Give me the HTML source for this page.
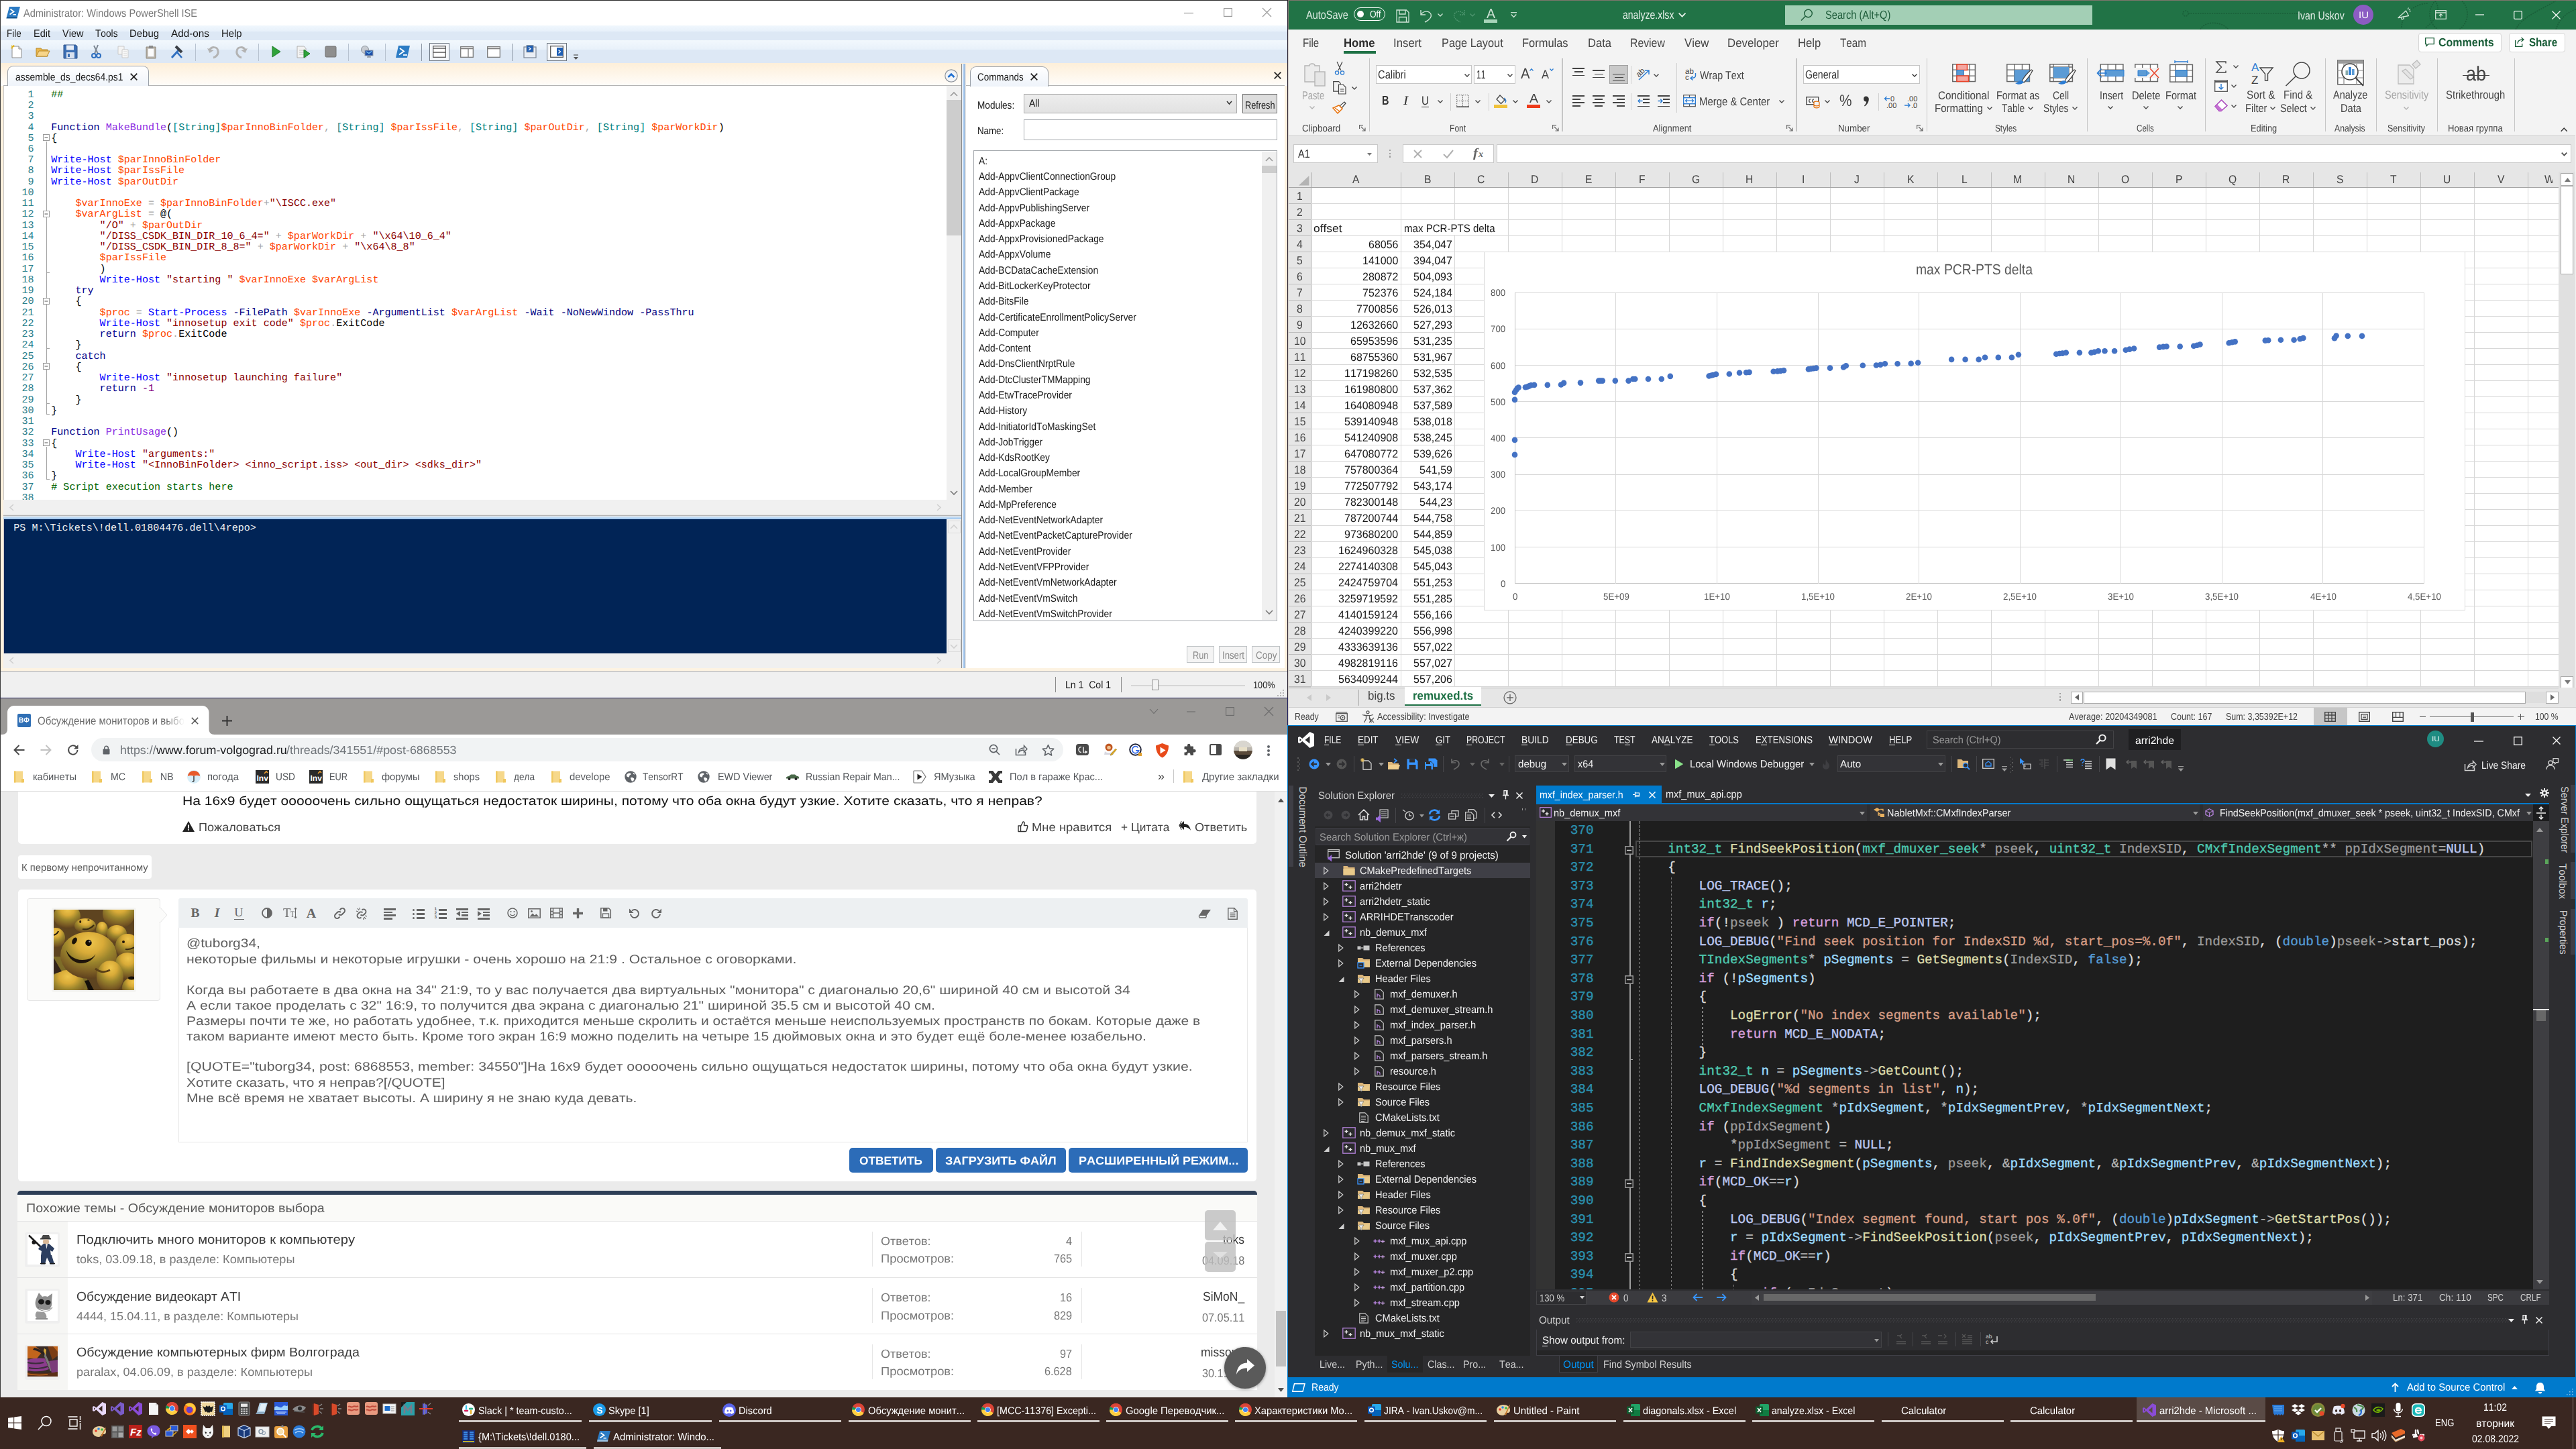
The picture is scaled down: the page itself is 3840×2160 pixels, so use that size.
<!DOCTYPE html>
<html><head><meta charset="utf-8"><title>desktop</title>
<style>
html,body{margin:0;padding:0;}
body{width:3840px;height:2160px;position:relative;overflow:hidden;background:#3a2721;font-family:"Liberation Sans",sans-serif;text-rendering:geometricPrecision;}
div,span.t,svg{position:absolute;}
div{box-sizing:border-box;}
span.t{white-space:pre;font-kerning:none;font-variant-ligatures:none;transform-origin:0 50%;display:block;}
.fs{font-family:"Liberation Sans",sans-serif;}
.fm{font-family:"Liberation Mono",monospace;}
.fr{font-family:"Liberation Serif",serif;}
svg{overflow:visible;}
</style></head><body>
<div style="left:0px;top:0px;width:1920px;height:1041px;background:#ffffff;"></div>
<div style="left:0px;top:0px;width:1920px;height:1px;background:#2b2b2b;"></div>
<div style="left:0px;top:0px;width:1px;height:1041px;background:#3a3a3a;"></div>
<div style="left:1919px;top:0px;width:1.2px;height:1041px;background:#241c2c;"></div>
<svg style="left:10px;top:9px;" width="21" height="20" viewBox="0 0 21 20"><path d="M4 1h16l-4 15H0z" fill="#2b7bc4"/><path d="M0 16h16l-.6 2.5H-.6z" fill="#1a5a96"/><path d="M5.5 4.5l5 4-6 4" stroke="#fff" stroke-width="1.8" fill="none"/><path d="M9.5 12.8h4.5" stroke="#fff" stroke-width="1.6"/></svg>
<span class="t fs" style="left:35px;top:12.82px;font-size:16px;line-height:16px;color:#7a7a7a;transform:scaleX(0.9130);">Administrator: Windows PowerShell ISE</span>
<svg style="left:1765px;top:12px;" width="14" height="14" viewBox="0 0 14 14"><path d="M0 7.5h14" stroke="#9a9a9a" stroke-width="1.2"/></svg>
<svg style="left:1824px;top:12px;" width="13" height="13" viewBox="0 0 13 13"><rect x=".6" y=".6" width="11.8" height="11.8" fill="none" stroke="#9a9a9a" stroke-width="1.2"/></svg>
<svg style="left:1882px;top:12px;" width="13" height="13" viewBox="0 0 13 13"><path d="M0 0l13 13M13 0L0 13" stroke="#9a9a9a" stroke-width="1.2"/></svg>
<div style="left:1px;top:38px;width:1918px;height:21.7px;background:linear-gradient(#f0f7fd 0%,#e7f0fa 41%,#dde8f5 42%,#dde8f5 100%);"></div>
<span class="t fs" style="left:10px;top:43.36px;font-size:15.5px;line-height:15.5px;color:#1a1a1a;transform:scaleX(0.8688);">File</span>
<span class="t fs" style="left:50px;top:43.36px;font-size:15.5px;line-height:15.5px;color:#1a1a1a;transform:scaleX(0.9360);">Edit</span>
<span class="t fs" style="left:92.5px;top:43.36px;font-size:15.5px;line-height:15.5px;color:#1a1a1a;transform:scaleX(0.9376);">View</span>
<span class="t fs" style="left:141.5px;top:43.36px;font-size:15.5px;line-height:15.5px;color:#1a1a1a;transform:scaleX(0.8838);">Tools</span>
<span class="t fs" style="left:193px;top:43.36px;font-size:15.5px;line-height:15.5px;color:#1a1a1a;transform:scaleX(0.9633);">Debug</span>
<span class="t fs" style="left:255px;top:43.36px;font-size:15.5px;line-height:15.5px;color:#1a1a1a;transform:scaleX(0.9873);">Add-ons</span>
<span class="t fs" style="left:329.5px;top:43.36px;font-size:15.5px;line-height:15.5px;color:#1a1a1a;transform:scaleX(0.9567);">Help</span>
<div style="left:1px;top:59.7px;width:1918px;height:34.3px;background:linear-gradient(#f2f8fd 0%,#e8f1fa 41%,#dde8f5 42%,#dde8f5 100%);"></div>
<div style="left:1px;top:94px;width:1918px;height:34px;background:linear-gradient(#fdefd9 0%,#fef5e8 45%,#fffdfa 100%);"></div>
<div style="left:5px;top:127px;width:1428px;height:1.2px;background:#b4b4b4;"></div>
<div style="left:11px;top:98px;width:210.5px;height:30.5px;background:linear-gradient(#ffffff,#eef3fa);border:1.3px solid #9aa0a8;border-bottom:none;border-radius:9px 9px 0 0;"></div>
<span class="t fs" style="left:22.5px;top:108.06px;font-size:15.5px;line-height:15.5px;color:#1a1a1a;transform:scaleX(0.8955);">assemble_ds_decs64.ps1</span>
<svg style="left:194px;top:109px;" width="11" height="11" viewBox="0 0 11 11"><path d="M0.7 0.7l9.6 9.6M10.3 0.7L0.7 10.3" stroke="#222" stroke-width="1.7"/></svg>
<svg style="left:14px;top:66px;" width="22" height="22" viewBox="0 0 22 22"><path d="M4 3h10l4 4v13H4z" fill="#fff" stroke="#8c8c8c"/><path d="M14 3v4h4" fill="#e8e8e8" stroke="#8c8c8c"/><path d="M3 2l2.5 2.5M6.5 1v3M2 5.5h3" stroke="#e8b400" stroke-width="1.4"/></svg>
<svg style="left:53px;top:66px;" width="22" height="22" viewBox="0 0 22 22"><path d="M1 6h7l2 2h8v10H1z" fill="#e9b64b" stroke="#b98a2b"/><path d="M1 18l4-8h16l-4 8z" fill="#f7d58a" stroke="#b98a2b"/></svg>
<svg style="left:93.5px;top:66px;" width="22" height="22" viewBox="0 0 22 22"><path d="M1 1h18l2 2v18H1z" fill="#3c6fb4" stroke="#2a4f86"/><rect x="5" y="1.5" width="11" height="7" fill="#e8eef7"/><rect x="5" y="12" width="12" height="9" fill="#d9e2ef"/><rect x="7" y="14" width="3" height="5" fill="#3c6fb4"/></svg>
<svg style="left:133px;top:66px;" width="22" height="22" viewBox="0 0 22 22"><path d="M13 1L8 14M7 2l6 12" stroke="#7d8793" stroke-width="2"/><circle cx="7" cy="17" r="3" fill="none" stroke="#2f6fc0" stroke-width="2"/><circle cx="14" cy="17" r="3" fill="none" stroke="#2f6fc0" stroke-width="2"/></svg>
<svg style="left:173px;top:66px;" width="22" height="22" viewBox="0 0 22 22"><path d="M3 3h9v12H3z" fill="#f4f4f4" stroke="#c9c9c9"/><path d="M9 8h9v12H9z" fill="#f9f9f9" stroke="#c9c9c9"/><path d="M11 11h5M11 14h5M11 17h5" stroke="#d5d5d5"/></svg>
<svg style="left:213.5px;top:66px;" width="22" height="22" viewBox="0 0 22 22"><path d="M4 4h14v17H4z" fill="#b9b2a6" stroke="#8f8a80"/><path d="M6.5 6.5h9v12h-9z" fill="#fbfbfb" stroke="#c9c9c9"/><rect x="8" y="2" width="6" height="4" fill="#8a8a8a"/></svg>
<svg style="left:253px;top:66px;" width="22" height="22" viewBox="0 0 22 22"><path d="M3 20L14 8" stroke="#2f6fc0" stroke-width="3"/><path d="M9 3l9 9" stroke="#3a3f46" stroke-width="4"/><path d="M11 12l7 8" stroke="#2f6fc0" stroke-width="2.5"/></svg>
<div style="left:291px;top:65px;width:1px;height:26px;background:#b7c2d0;"></div>
<svg style="left:308px;top:66px;" width="22" height="22" viewBox="0 0 22 22"><path d="M4 9c3-6 12-6 13 1 1 5-3 9-7 10" fill="none" stroke="#b3b3b3" stroke-width="3"/><path d="M1 6l3.5 7 6-4z" fill="#b3b3b3"/></svg>
<svg style="left:348px;top:66px;" width="22" height="22" viewBox="0 0 22 22"><path d="M18 9c-3-6-12-6-13 1-1 5 3 9 7 10" fill="none" stroke="#b3b3b3" stroke-width="3"/><path d="M21 6l-3.5 7-6-4z" fill="#b3b3b3"/></svg>
<div style="left:385px;top:65px;width:1px;height:26px;background:#b7c2d0;"></div>
<svg style="left:400px;top:66px;" width="22" height="22" viewBox="0 0 22 22"><path d="M6 3l12 8-12 8z" fill="#2fa33a" stroke="#1d7a27"/></svg>
<svg style="left:441px;top:66px;" width="22" height="22" viewBox="0 0 22 22"><path d="M2 3h10l3 3v14H2z" fill="#f2f2f2" stroke="#b0b0b0"/><path d="M5 9h7M5 12h7M5 15h7" stroke="#c0c0c0"/><path d="M12 8l9 6-9 6z" fill="#2fa33a" stroke="#1d7a27"/></svg>
<svg style="left:482px;top:66px;" width="22" height="22" viewBox="0 0 22 22"><rect x="3" y="3" width="16" height="16" rx="1.5" fill="#8e8e8e" stroke="#707070"/></svg>
<div style="left:519px;top:65px;width:1px;height:26px;background:#b7c2d0;"></div>
<svg style="left:535.5px;top:66px;" width="22" height="22" viewBox="0 0 22 22"><circle cx="8" cy="8" r="5.5" fill="#c8ccd2" stroke="#8e959e"/><rect x="8" y="9" width="12" height="8" fill="#1f4fa8" stroke="#98a0aa"/><path d="M11 19h6M14 17v2" stroke="#8e959e" stroke-width="1.5"/><path d="M10 11l4 2.5 4-3" stroke="#7fd0ff" stroke-width="1.2" fill="none"/></svg>
<div style="left:574px;top:65px;width:1px;height:26px;background:#b7c2d0;"></div>
<svg style="left:590px;top:66px;" width="22" height="22" viewBox="0 0 22 22"><path d="M4 2h17l-4 18H0z" fill="#2b7bc4"/><path d="M6 6l6 4.5-7 5" stroke="#fff" stroke-width="2" fill="none"/><path d="M11 16h6" stroke="#fff" stroke-width="1.8"/></svg>
<div style="left:628px;top:65px;width:1.3px;height:26px;background:#8d98a6;"></div>
<div style="left:640px;top:63.5px;width:30px;height:27px;background:#f4f7fb;border:1.3px solid #6d7783;"></div>
<svg style="left:645px;top:68px;" width="20" height="18" viewBox="0 0 20 18"><rect x=".7" y=".7" width="18.6" height="16.6" fill="#fff" stroke="#5a5a5a" stroke-width="1.3"/><path d="M.7 4h18.6M.7 10h18.6" stroke="#5a5a5a" stroke-width="1.3"/></svg>
<svg style="left:685.5px;top:69px;" width="20" height="17" viewBox="0 0 20 17"><rect x=".7" y=".7" width="18.6" height="15.6" fill="#fff" stroke="#7a7a7a" stroke-width="1.3"/><path d="M.7 3.5h18.6M12 3.5v13" stroke="#7a7a7a" stroke-width="1.3"/></svg>
<svg style="left:726px;top:69px;" width="20" height="17" viewBox="0 0 20 17"><rect x=".7" y=".7" width="18.6" height="15.6" fill="#fff" stroke="#7a7a7a" stroke-width="1.3"/><path d="M.7 3.5h18.6" stroke="#7a7a7a" stroke-width="1.6"/></svg>
<div style="left:763px;top:65px;width:1.3px;height:26px;background:#8d98a6;"></div>
<svg style="left:780px;top:67px;" width="20" height="20" viewBox="0 0 20 20"><rect x="1" y="3" width="18" height="16" fill="#e9eef5" stroke="#7a8594" stroke-width="1.2"/><rect x="5" y="0.7" width="10" height="10" fill="#1f5fb4" stroke="#7a8594"/><path d="M8 3.5l3 2.2-3 2.2" stroke="#fff" stroke-width="1.3" fill="none"/></svg>
<div style="left:815px;top:63.5px;width:30px;height:27px;background:#f4f7fb;border:1.3px solid #6d7783;"></div>
<svg style="left:820px;top:68px;" width="20" height="18" viewBox="0 0 20 18"><rect x=".7" y=".7" width="18.6" height="16.6" fill="#fff" stroke="#5a5a5a" stroke-width="1.3"/><rect x="10" y="3" width="9" height="12" fill="#1f5fb4"/><path d="M12.5 6.5l3 2.5-3 2.5" stroke="#fff" stroke-width="1.3" fill="none"/></svg>
<svg style="left:855px;top:82px;" width="8" height="8" viewBox="0 0 8 8"><path d="M0 0h7" stroke="#555" stroke-width="1.2"/><path d="M0 3h7l-3.5 4z" fill="#555"/></svg>
<div style="left:5px;top:128px;width:1406px;height:617px;background:#ffffff;"></div>
<div style="left:1px;top:128px;width:4px;height:872px;background:#fdf1de;"></div>
<div style="left:5px;top:128px;width:1px;height:868px;background:#c8c8c8;"></div>
<span class="t fm" style="left:41.46px;top:133.79px;font-size:15.07px;line-height:15.07px;color:#2a808c;">1</span>
<span class="t fm" style="left:76.3px;top:133.79px;font-size:15.07px;line-height:15.07px;color:#000;"><span style="color:#006400">##</span></span>
<span class="t fm" style="left:41.46px;top:150.04px;font-size:15.07px;line-height:15.07px;color:#2a808c;">2</span>
<span class="t fm" style="left:41.46px;top:166.28px;font-size:15.07px;line-height:15.07px;color:#2a808c;">3</span>
<span class="t fm" style="left:41.46px;top:182.52px;font-size:15.07px;line-height:15.07px;color:#2a808c;">4</span>
<span class="t fm" style="left:76.3px;top:182.52px;font-size:15.07px;line-height:15.07px;color:#000;"><span style="color:#00008b">Function </span><span style="color:#8a2be2">MakeBundle</span><span style="color:#000">(</span><span style="color:#008080">[String]</span><span style="color:#ff4500">$parInnoBinFolder</span><span style="color:#a9a9a9">, </span><span style="color:#008080">[String]</span><span style="color:#000"> </span><span style="color:#ff4500">$parIssFile</span><span style="color:#a9a9a9">, </span><span style="color:#008080">[String]</span><span style="color:#000"> </span><span style="color:#ff4500">$parOutDir</span><span style="color:#a9a9a9">, </span><span style="color:#008080">[String]</span><span style="color:#000"> </span><span style="color:#ff4500">$parWorkDir</span><span style="color:#000">)</span></span>
<span class="t fm" style="left:41.46px;top:198.77px;font-size:15.07px;line-height:15.07px;color:#2a808c;">5</span>
<span class="t fm" style="left:76.3px;top:198.77px;font-size:15.07px;line-height:15.07px;color:#000;"><span style="color:#000">{</span></span>
<span class="t fm" style="left:41.46px;top:215.01px;font-size:15.07px;line-height:15.07px;color:#2a808c;">6</span>
<span class="t fm" style="left:41.46px;top:231.25px;font-size:15.07px;line-height:15.07px;color:#2a808c;">7</span>
<span class="t fm" style="left:76.3px;top:231.25px;font-size:15.07px;line-height:15.07px;color:#000;"><span style="color:#0000ff">Write-Host</span><span style="color:#000"> </span><span style="color:#ff4500">$parInnoBinFolder</span></span>
<span class="t fm" style="left:41.46px;top:247.49px;font-size:15.07px;line-height:15.07px;color:#2a808c;">8</span>
<span class="t fm" style="left:76.3px;top:247.49px;font-size:15.07px;line-height:15.07px;color:#000;"><span style="color:#0000ff">Write-Host</span><span style="color:#000"> </span><span style="color:#ff4500">$parIssFile</span></span>
<span class="t fm" style="left:41.46px;top:263.74px;font-size:15.07px;line-height:15.07px;color:#2a808c;">9</span>
<span class="t fm" style="left:76.3px;top:263.74px;font-size:15.07px;line-height:15.07px;color:#000;"><span style="color:#0000ff">Write-Host</span><span style="color:#000"> </span><span style="color:#ff4500">$parOutDir</span></span>
<span class="t fm" style="left:32.42px;top:279.98px;font-size:15.07px;line-height:15.07px;color:#2a808c;">10</span>
<span class="t fm" style="left:32.42px;top:296.22px;font-size:15.07px;line-height:15.07px;color:#2a808c;">11</span>
<span class="t fm" style="left:76.3px;top:296.22px;font-size:15.07px;line-height:15.07px;color:#000;"><span style="color:#000">    </span><span style="color:#ff4500">$varInnoExe</span><span style="color:#a9a9a9"> = </span><span style="color:#ff4500">$parInnoBinFolder</span><span style="color:#a9a9a9">+</span><span style="color:#8b0000">"\ISCC.exe"</span></span>
<span class="t fm" style="left:32.42px;top:312.47px;font-size:15.07px;line-height:15.07px;color:#2a808c;">12</span>
<span class="t fm" style="left:76.3px;top:312.47px;font-size:15.07px;line-height:15.07px;color:#000;"><span style="color:#000">    </span><span style="color:#ff4500">$varArgList</span><span style="color:#a9a9a9"> = </span><span style="color:#000">@(</span></span>
<span class="t fm" style="left:32.42px;top:328.71px;font-size:15.07px;line-height:15.07px;color:#2a808c;">13</span>
<span class="t fm" style="left:76.3px;top:328.71px;font-size:15.07px;line-height:15.07px;color:#000;"><span style="color:#000">        </span><span style="color:#8b0000">"/O"</span><span style="color:#a9a9a9"> + </span><span style="color:#ff4500">$parOutDir</span></span>
<span class="t fm" style="left:32.42px;top:344.95px;font-size:15.07px;line-height:15.07px;color:#2a808c;">14</span>
<span class="t fm" style="left:76.3px;top:344.95px;font-size:15.07px;line-height:15.07px;color:#000;"><span style="color:#000">        </span><span style="color:#8b0000">"/DISS_CSDK_BIN_DIR_10_6_4="</span><span style="color:#a9a9a9"> + </span><span style="color:#ff4500">$parWorkDir</span><span style="color:#a9a9a9"> + </span><span style="color:#8b0000">"\x64\10_6_4"</span></span>
<span class="t fm" style="left:32.42px;top:361.2px;font-size:15.07px;line-height:15.07px;color:#2a808c;">15</span>
<span class="t fm" style="left:76.3px;top:361.2px;font-size:15.07px;line-height:15.07px;color:#000;"><span style="color:#000">        </span><span style="color:#8b0000">"/DISS_CSDK_BIN_DIR_8_8="</span><span style="color:#a9a9a9"> + </span><span style="color:#ff4500">$parWorkDir</span><span style="color:#a9a9a9"> + </span><span style="color:#8b0000">"\x64\8_8"</span></span>
<span class="t fm" style="left:32.42px;top:377.44px;font-size:15.07px;line-height:15.07px;color:#2a808c;">16</span>
<span class="t fm" style="left:76.3px;top:377.44px;font-size:15.07px;line-height:15.07px;color:#000;"><span style="color:#000">        </span><span style="color:#ff4500">$parIssFile</span></span>
<span class="t fm" style="left:32.42px;top:393.68px;font-size:15.07px;line-height:15.07px;color:#2a808c;">17</span>
<span class="t fm" style="left:76.3px;top:393.68px;font-size:15.07px;line-height:15.07px;color:#000;"><span style="color:#000">        )</span></span>
<span class="t fm" style="left:32.42px;top:409.92px;font-size:15.07px;line-height:15.07px;color:#2a808c;">18</span>
<span class="t fm" style="left:76.3px;top:409.92px;font-size:15.07px;line-height:15.07px;color:#000;"><span style="color:#000">        </span><span style="color:#0000ff">Write-Host</span><span style="color:#000"> </span><span style="color:#8b0000">"starting "</span><span style="color:#000"> </span><span style="color:#ff4500">$varInnoExe</span><span style="color:#000"> </span><span style="color:#ff4500">$varArgList</span></span>
<span class="t fm" style="left:32.42px;top:426.17px;font-size:15.07px;line-height:15.07px;color:#2a808c;">19</span>
<span class="t fm" style="left:76.3px;top:426.17px;font-size:15.07px;line-height:15.07px;color:#000;"><span style="color:#000">    </span><span style="color:#00008b">try</span></span>
<span class="t fm" style="left:32.42px;top:442.41px;font-size:15.07px;line-height:15.07px;color:#2a808c;">20</span>
<span class="t fm" style="left:76.3px;top:442.41px;font-size:15.07px;line-height:15.07px;color:#000;"><span style="color:#000">    {</span></span>
<span class="t fm" style="left:32.42px;top:458.65px;font-size:15.07px;line-height:15.07px;color:#2a808c;">21</span>
<span class="t fm" style="left:76.3px;top:458.65px;font-size:15.07px;line-height:15.07px;color:#000;"><span style="color:#000">        </span><span style="color:#ff4500">$proc</span><span style="color:#a9a9a9"> = </span><span style="color:#0000ff">Start-Process</span><span style="color:#000"> </span><span style="color:#000080">-FilePath</span><span style="color:#000"> </span><span style="color:#ff4500">$varInnoExe</span><span style="color:#000"> </span><span style="color:#000080">-ArgumentList</span><span style="color:#000"> </span><span style="color:#ff4500">$varArgList</span><span style="color:#000"> </span><span style="color:#000080">-Wait</span><span style="color:#000"> </span><span style="color:#000080">-NoNewWindow</span><span style="color:#000"> </span><span style="color:#000080">-PassThru</span></span>
<span class="t fm" style="left:32.42px;top:474.9px;font-size:15.07px;line-height:15.07px;color:#2a808c;">22</span>
<span class="t fm" style="left:76.3px;top:474.9px;font-size:15.07px;line-height:15.07px;color:#000;"><span style="color:#000">        </span><span style="color:#0000ff">Write-Host</span><span style="color:#000"> </span><span style="color:#8b0000">"innosetup exit code"</span><span style="color:#000"> </span><span style="color:#ff4500">$proc</span><span style="color:#a9a9a9">.</span><span style="color:#000">ExitCode</span></span>
<span class="t fm" style="left:32.42px;top:491.14px;font-size:15.07px;line-height:15.07px;color:#2a808c;">23</span>
<span class="t fm" style="left:76.3px;top:491.14px;font-size:15.07px;line-height:15.07px;color:#000;"><span style="color:#000">        </span><span style="color:#00008b">return</span><span style="color:#000"> </span><span style="color:#ff4500">$proc</span><span style="color:#a9a9a9">.</span><span style="color:#000">ExitCode</span></span>
<span class="t fm" style="left:32.42px;top:507.38px;font-size:15.07px;line-height:15.07px;color:#2a808c;">24</span>
<span class="t fm" style="left:76.3px;top:507.38px;font-size:15.07px;line-height:15.07px;color:#000;"><span style="color:#000">    }</span></span>
<span class="t fm" style="left:32.42px;top:523.63px;font-size:15.07px;line-height:15.07px;color:#2a808c;">25</span>
<span class="t fm" style="left:76.3px;top:523.63px;font-size:15.07px;line-height:15.07px;color:#000;"><span style="color:#000">    </span><span style="color:#00008b">catch</span></span>
<span class="t fm" style="left:32.42px;top:539.87px;font-size:15.07px;line-height:15.07px;color:#2a808c;">26</span>
<span class="t fm" style="left:76.3px;top:539.87px;font-size:15.07px;line-height:15.07px;color:#000;"><span style="color:#000">    {</span></span>
<span class="t fm" style="left:32.42px;top:556.11px;font-size:15.07px;line-height:15.07px;color:#2a808c;">27</span>
<span class="t fm" style="left:76.3px;top:556.11px;font-size:15.07px;line-height:15.07px;color:#000;"><span style="color:#000">        </span><span style="color:#0000ff">Write-Host</span><span style="color:#000"> </span><span style="color:#8b0000">"innosetup launching failure"</span></span>
<span class="t fm" style="left:32.42px;top:572.35px;font-size:15.07px;line-height:15.07px;color:#2a808c;">28</span>
<span class="t fm" style="left:76.3px;top:572.35px;font-size:15.07px;line-height:15.07px;color:#000;"><span style="color:#000">        </span><span style="color:#00008b">return</span><span style="color:#000"> </span><span style="color:#800080">-1</span></span>
<span class="t fm" style="left:32.42px;top:588.6px;font-size:15.07px;line-height:15.07px;color:#2a808c;">29</span>
<span class="t fm" style="left:76.3px;top:588.6px;font-size:15.07px;line-height:15.07px;color:#000;"><span style="color:#000">    }</span></span>
<span class="t fm" style="left:32.42px;top:604.84px;font-size:15.07px;line-height:15.07px;color:#2a808c;">30</span>
<span class="t fm" style="left:76.3px;top:604.84px;font-size:15.07px;line-height:15.07px;color:#000;"><span style="color:#000">}</span></span>
<span class="t fm" style="left:32.42px;top:621.08px;font-size:15.07px;line-height:15.07px;color:#2a808c;">31</span>
<span class="t fm" style="left:32.42px;top:637.33px;font-size:15.07px;line-height:15.07px;color:#2a808c;">32</span>
<span class="t fm" style="left:76.3px;top:637.33px;font-size:15.07px;line-height:15.07px;color:#000;"><span style="color:#00008b">Function </span><span style="color:#8a2be2">PrintUsage</span><span style="color:#000">()</span></span>
<span class="t fm" style="left:32.42px;top:653.57px;font-size:15.07px;line-height:15.07px;color:#2a808c;">33</span>
<span class="t fm" style="left:76.3px;top:653.57px;font-size:15.07px;line-height:15.07px;color:#000;"><span style="color:#000">{</span></span>
<span class="t fm" style="left:32.42px;top:669.81px;font-size:15.07px;line-height:15.07px;color:#2a808c;">34</span>
<span class="t fm" style="left:76.3px;top:669.81px;font-size:15.07px;line-height:15.07px;color:#000;"><span style="color:#000">    </span><span style="color:#0000ff">Write-Host</span><span style="color:#000"> </span><span style="color:#8b0000">"arguments:"</span></span>
<span class="t fm" style="left:32.42px;top:686.06px;font-size:15.07px;line-height:15.07px;color:#2a808c;">35</span>
<span class="t fm" style="left:76.3px;top:686.06px;font-size:15.07px;line-height:15.07px;color:#000;"><span style="color:#000">    </span><span style="color:#0000ff">Write-Host</span><span style="color:#000"> </span><span style="color:#8b0000">"&lt;InnoBinFolder&gt; &lt;inno_script.iss&gt; &lt;out_dir&gt; &lt;sdks_dir&gt;"</span></span>
<span class="t fm" style="left:32.42px;top:702.3px;font-size:15.07px;line-height:15.07px;color:#2a808c;">36</span>
<span class="t fm" style="left:76.3px;top:702.3px;font-size:15.07px;line-height:15.07px;color:#000;"><span style="color:#000">}</span></span>
<span class="t fm" style="left:32.42px;top:718.54px;font-size:15.07px;line-height:15.07px;color:#2a808c;">37</span>
<span class="t fm" style="left:76.3px;top:718.54px;font-size:15.07px;line-height:15.07px;color:#000;"><span style="color:#006400"># Script execution starts here</span></span>
<span class="t fm" style="left:32.42px;top:734.78px;font-size:15.07px;line-height:15.07px;color:#2a808c;">38</span>
<div style="left:69.2px;top:210.87px;width:1px;height:406.07px;background:#a5a5a5;"></div>
<div style="left:69.2px;top:616.95px;width:5px;height:1px;background:#a5a5a5;"></div>
<div style="left:69.2px;top:665.68px;width:1px;height:48.73px;background:#a5a5a5;"></div>
<div style="left:69.2px;top:714.4px;width:5px;height:1px;background:#a5a5a5;"></div>
<div style="left:69.2px;top:405.79px;width:5px;height:1px;background:#a5a5a5;"></div>
<div style="left:69.2px;top:519.49px;width:5px;height:1px;background:#a5a5a5;"></div>
<div style="left:69.2px;top:600.7px;width:5px;height:1px;background:#a5a5a5;"></div>
<svg style="left:64px;top:200.37px;" width="10" height="10" viewBox="0 0 10 10"><rect x=".5" y=".5" width="9" height="9" fill="#fff" stroke="#9a9a9a"/><path d="M2.5 5h5" stroke="#555"/></svg>
<svg style="left:64px;top:314.07px;" width="10" height="10" viewBox="0 0 10 10"><rect x=".5" y=".5" width="9" height="9" fill="#fff" stroke="#9a9a9a"/><path d="M2.5 5h5" stroke="#555"/></svg>
<svg style="left:64px;top:444.02px;" width="10" height="10" viewBox="0 0 10 10"><rect x=".5" y=".5" width="9" height="9" fill="#fff" stroke="#9a9a9a"/><path d="M2.5 5h5" stroke="#555"/></svg>
<svg style="left:64px;top:541.48px;" width="10" height="10" viewBox="0 0 10 10"><rect x=".5" y=".5" width="9" height="9" fill="#fff" stroke="#9a9a9a"/><path d="M2.5 5h5" stroke="#555"/></svg>
<svg style="left:64px;top:655.18px;" width="10" height="10" viewBox="0 0 10 10"><rect x=".5" y=".5" width="9" height="9" fill="#fff" stroke="#9a9a9a"/><path d="M2.5 5h5" stroke="#555"/></svg>
<div style="left:1411px;top:128px;width:22px;height:617px;background:#f0f0f0;"></div>
<svg style="left:1416px;top:136px;" width="12" height="8" viewBox="0 0 12 8"><path d="M1 7l5-5 5 5" stroke="#9b9b9b" stroke-width="1.6" fill="none"/></svg>
<div style="left:1411px;top:149px;width:22px;height:202px;background:#cdcdcd;"></div>
<svg style="left:1416px;top:731px;" width="12" height="8" viewBox="0 0 12 8"><path d="M1 1l5 5 5-5" stroke="#7b7b7b" stroke-width="1.6" fill="none"/></svg>
<div style="left:5px;top:745px;width:1428px;height:22px;background:#f0f0f0;"></div>
<svg style="left:13px;top:751px;" width="8" height="11" viewBox="0 0 8 11"><path d="M7 1L2 5.5 7 10" stroke="#cfcfcf" stroke-width="1.6" fill="none"/></svg>
<svg style="left:1396px;top:751px;" width="8" height="11" viewBox="0 0 8 11"><path d="M1 1l5 4.5L1 10" stroke="#cfcfcf" stroke-width="1.6" fill="none"/></svg>
<div style="left:5px;top:767px;width:1428px;height:3px;background:#e3e3e3;"></div>
<div style="left:5px;top:768px;width:1428px;height:1px;background:#b5b5b5;"></div>
<div style="left:5px;top:770px;width:1428px;height:4px;background:linear-gradient(#cfe3f7,#9ec5ee);"></div>
<div style="left:6px;top:774px;width:1405px;height:200px;background:#012456;"></div>
<span class="t fm" style="left:20.3px;top:779.89px;font-size:15.07px;line-height:15.07px;color:#f0f0f0;">PS M:\Tickets\!dell.01804476.dell\4repo&gt;</span>
<div style="left:1411px;top:774px;width:22px;height:200px;background:#f0f0f0;"></div>
<div style="left:1412.5px;top:776px;width:19px;height:19px;background:#f0f0f0;border:1px solid #dcdcdc;"></div>
<svg style="left:1416px;top:781px;" width="12" height="8" viewBox="0 0 12 8"><path d="M1 7l5-5 5 5" stroke="#d0d0d0" stroke-width="1.6" fill="none"/></svg>
<div style="left:1412.5px;top:953px;width:19px;height:19px;background:#f0f0f0;border:1px solid #dcdcdc;"></div>
<svg style="left:1416px;top:960px;" width="12" height="8" viewBox="0 0 12 8"><path d="M1 1l5 5 5-5" stroke="#d0d0d0" stroke-width="1.6" fill="none"/></svg>
<div style="left:5px;top:974px;width:1428px;height:22px;background:#f0f0f0;"></div>
<svg style="left:13px;top:979px;" width="8" height="11" viewBox="0 0 8 11"><path d="M7 1L2 5.5 7 10" stroke="#cfcfcf" stroke-width="1.6" fill="none"/></svg>
<svg style="left:1396px;top:979px;" width="8" height="11" viewBox="0 0 8 11"><path d="M1 1l5 4.5L1 10" stroke="#cfcfcf" stroke-width="1.6" fill="none"/></svg>
<div style="left:1433px;top:95px;width:7px;height:901px;background:#f0f0f0;"></div>
<div style="left:1433.2px;top:95px;width:1.2px;height:901px;background:#8a8a8a;"></div>
<div style="left:1434.5px;top:95px;width:3.8px;height:901px;background:linear-gradient(90deg,#c4dcf6,#9cc4ef);"></div>
<div style="left:1438.3px;top:95px;width:1px;height:901px;background:#9aa3ad;"></div>
<div style="left:1px;top:996px;width:1918px;height:4px;background:#fdf3e2;"></div>
<div style="left:1440px;top:128px;width:475px;height:868px;background:#ffffff;"></div>
<div style="left:1915px;top:128px;width:4px;height:872px;background:#fdf1de;"></div>
<div style="left:1440px;top:127px;width:475px;height:1.2px;background:#b4b4b4;"></div>
<div style="left:1445.5px;top:98.5px;width:117px;height:30px;background:linear-gradient(#ffffff,#eef3fa);border:1.3px solid #9aa0a8;border-bottom:none;border-radius:9px 9px 0 0;"></div>
<span class="t fs" style="left:1456.8px;top:108.06px;font-size:15.5px;line-height:15.5px;color:#1a1a1a;transform:scaleX(0.8656);">Commands</span>
<svg style="left:1536px;top:109px;" width="11" height="11" viewBox="0 0 11 11"><path d="M0.7 0.7l9.6 9.6M10.3 0.7L0.7 10.3" stroke="#222" stroke-width="1.7"/></svg>
<svg style="left:1899px;top:107px;" width="11" height="11" viewBox="0 0 11 11"><path d="M0.7 0.7l9.6 9.6M10.3 0.7L0.7 10.3" stroke="#222" stroke-width="1.7"/></svg>
<svg style="left:1407.5px;top:103px;" width="20" height="20" viewBox="0 0 20 20"><circle cx="10" cy="10" r="9.2" fill="#f2f4f7" stroke="#8e949c" stroke-width="1.2"/><path d="M5.5 12l4.5-4.5 4.5 4.5" stroke="#1f6fd0" stroke-width="2.6" fill="none"/></svg>
<span class="t fs" style="left:1456.8px;top:149.56px;font-size:15.5px;line-height:15.5px;color:#1a1a1a;transform:scaleX(0.8777);">Modules:</span>
<div style="left:1526px;top:139.8px;width:318px;height:29.5px;background:linear-gradient(#ededed,#e2e2e2);border:1.2px solid #acacac;"></div>
<span class="t fs" style="left:1534px;top:146.56px;font-size:15.5px;line-height:15.5px;color:#1a1a1a;transform:scaleX(0.8998);">All</span>
<svg style="left:1828px;top:150px;" width="9" height="7" viewBox="0 0 9 7"><path d="M1 1l3.5 4 3.5-4" stroke="#333" stroke-width="1.5" fill="none"/></svg>
<div style="left:1852px;top:139.8px;width:52px;height:29.5px;background:#dddddd;border:1.3px solid #707070;"></div>
<span class="t fs" style="left:1856px;top:149.56px;font-size:15.5px;line-height:15.5px;color:#1a1a1a;transform:scaleX(0.8199);">Refresh</span>
<span class="t fs" style="left:1456.8px;top:187.56px;font-size:15.5px;line-height:15.5px;color:#1a1a1a;transform:scaleX(0.8586);">Name:</span>
<div style="left:1526px;top:178px;width:378px;height:31px;background:#fff;border:1.3px solid #a5a9ae;"></div>
<div style="left:1450.5px;top:224.4px;width:453.5px;height:701.5px;background:#fff;border:1.3px solid #a5a9ae;"></div>
<span class="t fs" style="left:1459.4px;top:232.76px;font-size:15.5px;line-height:15.5px;color:#1a1a1a;transform:scaleX(0.8909);">A:</span>
<span class="t fs" style="left:1459.4px;top:256.04px;font-size:15.5px;line-height:15.5px;color:#1a1a1a;transform:scaleX(0.8909);">Add-AppvClientConnectionGroup</span>
<span class="t fs" style="left:1459.4px;top:279.32px;font-size:15.5px;line-height:15.5px;color:#1a1a1a;transform:scaleX(0.8909);">Add-AppvClientPackage</span>
<span class="t fs" style="left:1459.4px;top:302.6px;font-size:15.5px;line-height:15.5px;color:#1a1a1a;transform:scaleX(0.8909);">Add-AppvPublishingServer</span>
<span class="t fs" style="left:1459.4px;top:325.88px;font-size:15.5px;line-height:15.5px;color:#1a1a1a;transform:scaleX(0.8909);">Add-AppxPackage</span>
<span class="t fs" style="left:1459.4px;top:349.16px;font-size:15.5px;line-height:15.5px;color:#1a1a1a;transform:scaleX(0.8909);">Add-AppxProvisionedPackage</span>
<span class="t fs" style="left:1459.4px;top:372.44px;font-size:15.5px;line-height:15.5px;color:#1a1a1a;transform:scaleX(0.8909);">Add-AppxVolume</span>
<span class="t fs" style="left:1459.4px;top:395.72px;font-size:15.5px;line-height:15.5px;color:#1a1a1a;transform:scaleX(0.8909);">Add-BCDataCacheExtension</span>
<span class="t fs" style="left:1459.4px;top:419px;font-size:15.5px;line-height:15.5px;color:#1a1a1a;transform:scaleX(0.8909);">Add-BitLockerKeyProtector</span>
<span class="t fs" style="left:1459.4px;top:442.28px;font-size:15.5px;line-height:15.5px;color:#1a1a1a;transform:scaleX(0.8909);">Add-BitsFile</span>
<span class="t fs" style="left:1459.4px;top:465.56px;font-size:15.5px;line-height:15.5px;color:#1a1a1a;transform:scaleX(0.8909);">Add-CertificateEnrollmentPolicyServer</span>
<span class="t fs" style="left:1459.4px;top:488.84px;font-size:15.5px;line-height:15.5px;color:#1a1a1a;transform:scaleX(0.8909);">Add-Computer</span>
<span class="t fs" style="left:1459.4px;top:512.12px;font-size:15.5px;line-height:15.5px;color:#1a1a1a;transform:scaleX(0.8909);">Add-Content</span>
<span class="t fs" style="left:1459.4px;top:535.4px;font-size:15.5px;line-height:15.5px;color:#1a1a1a;transform:scaleX(0.8909);">Add-DnsClientNrptRule</span>
<span class="t fs" style="left:1459.4px;top:558.68px;font-size:15.5px;line-height:15.5px;color:#1a1a1a;transform:scaleX(0.8909);">Add-DtcClusterTMMapping</span>
<span class="t fs" style="left:1459.4px;top:581.96px;font-size:15.5px;line-height:15.5px;color:#1a1a1a;transform:scaleX(0.8909);">Add-EtwTraceProvider</span>
<span class="t fs" style="left:1459.4px;top:605.24px;font-size:15.5px;line-height:15.5px;color:#1a1a1a;transform:scaleX(0.8909);">Add-History</span>
<span class="t fs" style="left:1459.4px;top:628.52px;font-size:15.5px;line-height:15.5px;color:#1a1a1a;transform:scaleX(0.8909);">Add-InitiatorIdToMaskingSet</span>
<span class="t fs" style="left:1459.4px;top:651.8px;font-size:15.5px;line-height:15.5px;color:#1a1a1a;transform:scaleX(0.8909);">Add-JobTrigger</span>
<span class="t fs" style="left:1459.4px;top:675.08px;font-size:15.5px;line-height:15.5px;color:#1a1a1a;transform:scaleX(0.8909);">Add-KdsRootKey</span>
<span class="t fs" style="left:1459.4px;top:698.36px;font-size:15.5px;line-height:15.5px;color:#1a1a1a;transform:scaleX(0.8909);">Add-LocalGroupMember</span>
<span class="t fs" style="left:1459.4px;top:721.64px;font-size:15.5px;line-height:15.5px;color:#1a1a1a;transform:scaleX(0.8909);">Add-Member</span>
<span class="t fs" style="left:1459.4px;top:744.92px;font-size:15.5px;line-height:15.5px;color:#1a1a1a;transform:scaleX(0.8909);">Add-MpPreference</span>
<span class="t fs" style="left:1459.4px;top:768.2px;font-size:15.5px;line-height:15.5px;color:#1a1a1a;transform:scaleX(0.8909);">Add-NetEventNetworkAdapter</span>
<span class="t fs" style="left:1459.4px;top:791.48px;font-size:15.5px;line-height:15.5px;color:#1a1a1a;transform:scaleX(0.8909);">Add-NetEventPacketCaptureProvider</span>
<span class="t fs" style="left:1459.4px;top:814.76px;font-size:15.5px;line-height:15.5px;color:#1a1a1a;transform:scaleX(0.8909);">Add-NetEventProvider</span>
<span class="t fs" style="left:1459.4px;top:838.04px;font-size:15.5px;line-height:15.5px;color:#1a1a1a;transform:scaleX(0.8909);">Add-NetEventVFPProvider</span>
<span class="t fs" style="left:1459.4px;top:861.32px;font-size:15.5px;line-height:15.5px;color:#1a1a1a;transform:scaleX(0.8909);">Add-NetEventVmNetworkAdapter</span>
<span class="t fs" style="left:1459.4px;top:884.6px;font-size:15.5px;line-height:15.5px;color:#1a1a1a;transform:scaleX(0.8909);">Add-NetEventVmSwitch</span>
<span class="t fs" style="left:1459.4px;top:907.88px;font-size:15.5px;line-height:15.5px;color:#1a1a1a;transform:scaleX(0.8909);">Add-NetEventVmSwitchProvider</span>
<div style="left:1881px;top:226px;width:22px;height:698px;background:#f0f0f0;"></div>
<svg style="left:1886px;top:233px;" width="12" height="8" viewBox="0 0 12 8"><path d="M1 7l5-5 5 5" stroke="#9b9b9b" stroke-width="1.6" fill="none"/></svg>
<div style="left:1881px;top:247px;width:22px;height:10.5px;background:#cdcdcd;"></div>
<svg style="left:1886px;top:909px;" width="12" height="8" viewBox="0 0 12 8"><path d="M1 1l5 5 5-5" stroke="#7b7b7b" stroke-width="1.6" fill="none"/></svg>
<div style="left:1769px;top:963.4px;width:40.7px;height:25px;background:#f4f4f4;border:1.3px solid #bfc3c6;"></div>
<span class="t fs" style="left:1777.6px;top:969.86px;font-size:15.5px;line-height:15.5px;color:#8a8a8a;transform:scaleX(0.8229);">Run</span>
<div style="left:1817px;top:963.4px;width:41.6px;height:25px;background:#f4f4f4;border:1.3px solid #bfc3c6;"></div>
<span class="t fs" style="left:1821.6px;top:969.86px;font-size:15.5px;line-height:15.5px;color:#8a8a8a;transform:scaleX(0.8513);">Insert</span>
<div style="left:1866.4px;top:963.4px;width:41.4px;height:25px;background:#f4f4f4;border:1.3px solid #bfc3c6;"></div>
<span class="t fs" style="left:1871.5px;top:969.86px;font-size:15.5px;line-height:15.5px;color:#8a8a8a;transform:scaleX(0.8705);">Copy</span>
<div style="left:1px;top:1000px;width:1918px;height:40px;background:#f0f0f0;"></div>
<div style="left:1px;top:1000px;width:1918px;height:1.3px;background:#a9a9a9;"></div>
<div style="left:1572.5px;top:1009px;width:1.3px;height:23px;background:#8a8a8a;"></div>
<div style="left:1671px;top:1009px;width:1.3px;height:23px;background:#8a8a8a;"></div>
<span class="t fs" style="left:1588px;top:1013.56px;font-size:15.5px;line-height:15.5px;color:#1a1a1a;transform:scaleX(0.9071);">Ln 1  Col 1</span>
<div style="left:1686px;top:1020.5px;width:170px;height:2.5px;background:#d6d6d6;"></div>
<div style="left:1716.6px;top:1012.5px;width:10.5px;height:16.5px;background:#f3f3f3;border:1.3px solid #8c8c8c;"></div>
<span class="t fs" style="left:1867.5px;top:1015.04px;font-size:14.5px;line-height:14.5px;color:#1a1a1a;transform:scaleX(0.8763);">100%</span>
<svg style="left:1903px;top:1027px;" width="12" height="12" viewBox="0 0 12 12"><rect x="9" y="1" width="2" height="2" fill="#b5b5b5"/><rect x="5" y="5" width="2" height="2" fill="#b5b5b5"/><rect x="9" y="5" width="2" height="2" fill="#b5b5b5"/><rect x="1" y="9" width="2" height="2" fill="#b5b5b5"/><rect x="5" y="9" width="2" height="2" fill="#b5b5b5"/><rect x="9" y="9" width="2" height="2" fill="#b5b5b5"/></svg>
<div style="left:0px;top:1040px;width:1920px;height:1px;background:#1c1c5c;"></div>
<div style="left:1920px;top:0px;width:1920px;height:1082px;background:#f3f3f3;"></div>
<div style="left:1920px;top:0px;width:1920px;height:44px;background:#217346;"></div>
<div style="left:1920px;top:0px;width:1920px;height:1px;background:#7d766c;"></div>
<div style="left:1920px;top:0px;width:1px;height:44px;background:#7d766c;"></div>
<div style="left:1920px;top:44px;width:1px;height:1037px;background:#cfcac4;"></div>
<svg style="left:3250px;top:1px;" width="590" height="43" viewBox="0 0 590 43"><clipPath id="tbc"><rect width="590" height="43"/></clipPath><g clip-path="url(#tbc)" stroke="#1a5f39" stroke-width="1.6" fill="none" stroke-dasharray="2 1.5"><path d="M12 19h200"/><circle cx="8" cy="19" r="4"/><path d="M30 43c5-12 30-14 42 0"/><circle cx="400" cy="20" r="28"/><path d="M380 0c10 14 0 30-14 40"/><path d="M330 40c0-20 20-36 40-36"/><path d="M500 43c10-20 40-30 60-43"/><path d="M560 43c5-15 15-25 30-30"/></g></svg>
<span class="t fs" style="left:1947px;top:13.6px;font-size:17.5px;line-height:17.5px;color:#d9e9df;transform:scaleX(0.8275);">AutoSave</span>
<div style="left:2018.2px;top:11.2px;width:46.6px;height:19.8px;border:1.4px solid #fff;border-radius:10px;"></div>
<div style="left:2023px;top:16px;width:10px;height:10px;background:#fff;border-radius:5px;"></div>
<span class="t fs" style="left:2041.5px;top:14.54px;font-size:14.5px;line-height:14.5px;color:#fff;transform:scaleX(0.8482);">Off</span>
<svg style="left:2081px;top:14px;" width="20" height="20" viewBox="0 0 20 20"><path d="M1 1h14.5L19 4.5V19H1z" fill="none" stroke="#cfe3d6" stroke-width="1.3"/><path d="M5 1v6h9V1M4.5 19v-7.5h11V19" fill="none" stroke="#cfe3d6" stroke-width="1.3"/></svg>
<svg style="left:2117px;top:13px;" width="19" height="21" viewBox="0 0 19 21"><path d="M1 2v7h7" fill="none" stroke="#cfe3d6" stroke-width="1.4"/><path d="M1.5 8.5C5 3 13 2.5 16 8c2 5-3 9-9 12" fill="none" stroke="#cfe3d6" stroke-width="1.4"/></svg>
<svg style="left:2143.3px;top:20px;" width="8" height="5" viewBox="0 0 8 5"><path d="M0.5 0.5L4 4 7.5 0.5" stroke="#cfe3d6" stroke-width="1.3" fill="none"/></svg>
<svg style="left:2165px;top:13px;" width="19" height="21" viewBox="0 0 19 21"><path d="M18 2v7h-7" fill="none" stroke="#4f9670" stroke-width="1.4" stroke-dasharray="2 1"/><path d="M17.5 8.5C14 3 6 2.5 3 8c-2 5 3 9 9 12" fill="none" stroke="#4f9670" stroke-width="1.4" stroke-dasharray="2 1"/></svg>
<svg style="left:2191.4px;top:20px;" width="8" height="5" viewBox="0 0 8 5"><path d="M0.5 0.5L4 4 7.5 0.5" stroke="#4f9670" stroke-width="1.3" fill="none"/></svg>
<span class="t fs" style="left:2215.5px;top:11.4px;font-size:20px;line-height:20px;color:#cfe3d6;transform:scaleX(0.9745);">A</span>
<div style="left:2212px;top:29px;width:20px;height:5px;background:#a8d5ba;"></div>
<svg style="left:2252px;top:18px;" width="9" height="9" viewBox="0 0 9 9"><path d="M0 .7h9" stroke="#cfe3d6" stroke-width="1.3"/><path d="M.7 3.5L4.5 7.5 8.3 3.5" stroke="#cfe3d6" stroke-width="1.3" fill="none"/></svg>
<span class="t fs" style="left:2419.4px;top:13.6px;font-size:17.5px;line-height:17.5px;color:#e4efe8;transform:scaleX(0.8015);">analyze.xlsx</span>
<svg style="left:2502.2px;top:19px;" width="11.2" height="7" viewBox="0 0 8 5"><path d="M0.5 0.5L4 4 7.5 0.5" stroke="#e4efe8" stroke-width="1.3" fill="none"/></svg>
<div style="left:2661px;top:7.5px;width:458px;height:29.5px;background:#a3cfb5;"></div>
<svg style="left:2684px;top:13px;" width="19" height="19" viewBox="0 0 19 19"><circle cx="11.5" cy="7" r="5.8" fill="none" stroke="#1e5c3a" stroke-width="1.4"/><path d="M7.5 11L1 17.5" stroke="#1e5c3a" stroke-width="1.4"/></svg>
<span class="t fs" style="left:2721.3px;top:14.2px;font-size:17.5px;line-height:17.5px;color:#1e5c3a;transform:scaleX(0.8372);">Search (Alt+Q)</span>
<span class="t fs" style="left:3425.3px;top:14.84px;font-size:17px;line-height:17px;color:#e4efe8;transform:scaleX(0.8289);">Ivan Uskov</span>
<div style="left:3508.3px;top:7.3px;width:29.4px;height:29.4px;background:#8b5cc2;border-radius:15px;"></div>
<span class="t fs" style="left:3515.5px;top:15.28px;font-size:14px;line-height:14px;color:#fff;transform:scaleX(1.0714);">IU</span>
<svg style="left:3572px;top:11px;" width="22" height="22" viewBox="0 0 22 22"><path d="M3 15.500L14.500 5l4 7.500z" fill="none" stroke="#cfe3d6" stroke-width="1.300" stroke-linejoin="round"/><path d="M7 14.500l1.500 3.500 3-1.200-1.200-3" fill="none" stroke="#cfe3d6" stroke-width="1.200"/><path d="M17 3l1.500-2.500M19.500 6l2.500-.8M18.800 4.200l2-1.800" stroke="#cfe3d6" stroke-width="1.200"/></svg>
<svg style="left:3630px;top:15px;" width="17" height="14" viewBox="0 0 17 14"><rect x=".7" y=".7" width="15.6" height="12.6" fill="none" stroke="#cfe3d6" stroke-width="1.3"/><path d="M.7 4h15.6M8.5 11V6M6 8.3L8.5 6 11 8.3" fill="none" stroke="#cfe3d6" stroke-width="1.3"/></svg>
<svg style="left:3690px;top:21px;" width="13" height="2" viewBox="0 0 13 2"><path d="M0 1h13" stroke="#f0f6f2" stroke-width="1.3"/></svg>
<svg style="left:3746.5px;top:15.5px;" width="13" height="13" viewBox="0 0 13 13"><rect x=".7" y=".7" width="11.6" height="11.6" rx="1.5" fill="none" stroke="#f0f6f2" stroke-width="1.3"/></svg>
<svg style="left:3804px;top:15.5px;" width="13" height="13" viewBox="0 0 13 13"><path d="M.5.5l12 12M12.5.5l-12 12" stroke="#f0f6f2" stroke-width="1.3"/></svg>
<span class="t fs" style="left:1942.4px;top:54.76px;font-size:18px;line-height:18px;color:#444;transform:scaleX(0.8343);">File</span>
<span class="t fs" style="left:2077.4px;top:54.76px;font-size:18px;line-height:18px;color:#444;transform:scaleX(0.9330);">Insert</span>
<span class="t fs" style="left:2148.8px;top:54.76px;font-size:18px;line-height:18px;color:#444;transform:scaleX(0.9072);">Page Layout</span>
<span class="t fs" style="left:2269.4px;top:54.76px;font-size:18px;line-height:18px;color:#444;transform:scaleX(0.9144);">Formulas</span>
<span class="t fs" style="left:2366.5px;top:54.76px;font-size:18px;line-height:18px;color:#444;transform:scaleX(0.9205);">Data</span>
<span class="t fs" style="left:2430.2px;top:54.76px;font-size:18px;line-height:18px;color:#444;transform:scaleX(0.8777);">Review</span>
<span class="t fs" style="left:2511px;top:54.76px;font-size:18px;line-height:18px;color:#444;transform:scaleX(0.9304);">View</span>
<span class="t fs" style="left:2575.2px;top:54.76px;font-size:18px;line-height:18px;color:#444;transform:scaleX(0.9360);">Developer</span>
<span class="t fs" style="left:2680.3px;top:54.76px;font-size:18px;line-height:18px;color:#444;transform:scaleX(0.9265);">Help</span>
<span class="t fs" style="left:2743px;top:54.76px;font-size:18px;line-height:18px;color:#444;transform:scaleX(0.8476);">Team</span>
<span class="t fs" style="left:2003.3px;top:54.76px;font-size:18px;line-height:18px;color:#2b2b2b;font-weight:bold;transform:scaleX(0.9318);">Home</span>
<div style="left:2003px;top:76px;width:48px;height:3.7px;background:#1e7145;"></div>
<div style="left:3605px;top:48.5px;width:123.7px;height:29px;background:#fff;border:1px solid #d6d6d6;border-radius:4px;"></div>
<svg style="left:3614.5px;top:55.5px;" width="14" height="14" viewBox="0 0 14 14"><path d="M.7.7h12.6v9H5L2 12.5V9.7H.7z" fill="none" stroke="#185c37" stroke-width="1.3"/></svg>
<span class="t fs" style="left:3634.8px;top:54.8px;font-size:17.5px;line-height:17.5px;color:#185c37;font-weight:bold;transform:scaleX(0.9145);">Comments</span>
<div style="left:3739.9px;top:48.5px;width:83.8px;height:29px;background:#fff;border:1px solid #d6d6d6;border-radius:4px;"></div>
<svg style="left:3748.5px;top:55px;" width="15" height="15" viewBox="0 0 15 15"><path d="M.7 5v9.3h10V10" fill="none" stroke="#185c37" stroke-width="1.3"/><path d="M4 10c0-4 3-6 8-6M9.5 1L13 4 9.5 7" fill="none" stroke="#185c37" stroke-width="1.3"/></svg>
<span class="t fs" style="left:3769.7px;top:54.8px;font-size:17.5px;line-height:17.5px;color:#185c37;font-weight:bold;transform:scaleX(0.8656);">Share</span>
<div style="left:2040.7px;top:87.2px;width:1.2px;height:108.4px;background:#c6c6c6;"></div>
<div style="left:2328.4px;top:87.2px;width:1.2px;height:108.4px;background:#c6c6c6;"></div>
<div style="left:2677.4px;top:87.2px;width:1.2px;height:108.4px;background:#c6c6c6;"></div>
<div style="left:2871.6px;top:87.2px;width:1.2px;height:108.4px;background:#c6c6c6;"></div>
<div style="left:3110.6px;top:87.2px;width:1.2px;height:108.4px;background:#c6c6c6;"></div>
<div style="left:3286.7px;top:87.2px;width:1.2px;height:108.4px;background:#c6c6c6;"></div>
<div style="left:3465.5px;top:87.2px;width:1.2px;height:108.4px;background:#c6c6c6;"></div>
<div style="left:3542.3px;top:87.2px;width:1.2px;height:108.4px;background:#c6c6c6;"></div>
<div style="left:3633.2px;top:87.2px;width:1.2px;height:108.4px;background:#c6c6c6;"></div>
<div style="left:3747.7px;top:87.2px;width:1.2px;height:108.4px;background:#c6c6c6;"></div>
<span class="t fs" style="left:1941.4px;top:184.54px;font-size:14.5px;line-height:14.5px;color:#444;transform:scaleX(0.9216);">Clipboard</span>
<span class="t fs" style="left:2161.3px;top:184.54px;font-size:14.5px;line-height:14.5px;color:#444;transform:scaleX(0.8341);">Font</span>
<span class="t fs" style="left:2463.5px;top:184.54px;font-size:14.5px;line-height:14.5px;color:#444;transform:scaleX(0.8902);">Alignment</span>
<span class="t fs" style="left:2740.3px;top:184.54px;font-size:14.5px;line-height:14.5px;color:#444;transform:scaleX(0.9191);">Number</span>
<span class="t fs" style="left:2974.3px;top:184.54px;font-size:14.5px;line-height:14.5px;color:#444;transform:scaleX(0.8129);">Styles</span>
<span class="t fs" style="left:3184.6px;top:184.54px;font-size:14.5px;line-height:14.5px;color:#444;transform:scaleX(0.8005);">Cells</span>
<span class="t fs" style="left:3355.2px;top:184.54px;font-size:14.5px;line-height:14.5px;color:#444;transform:scaleX(0.8819);">Editing</span>
<span class="t fs" style="left:3480px;top:184.54px;font-size:14.5px;line-height:14.5px;color:#444;transform:scaleX(0.8427);">Analysis</span>
<span class="t fs" style="left:3559px;top:184.54px;font-size:14.5px;line-height:14.5px;color:#444;transform:scaleX(0.8579);">Sensitivity</span>
<span class="t fs" style="left:3649.3px;top:184.54px;font-size:14.5px;line-height:14.5px;color:#444;transform:scaleX(0.9022);">Новая группа</span>
<svg style="left:2025.9px;top:186px;" width="10" height="10" viewBox="0 0 10 10"><path d="M0.6 6V0.6H6" stroke="#666" stroke-width="1.2" fill="none"/><path d="M3 3l6 6M9 4.5V9H4.5" stroke="#666" stroke-width="1.2" fill="none"/></svg>
<svg style="left:2313.7px;top:186px;" width="10" height="10" viewBox="0 0 10 10"><path d="M0.6 6V0.6H6" stroke="#666" stroke-width="1.2" fill="none"/><path d="M3 3l6 6M9 4.5V9H4.5" stroke="#666" stroke-width="1.2" fill="none"/></svg>
<svg style="left:2662.7px;top:186px;" width="10" height="10" viewBox="0 0 10 10"><path d="M0.6 6V0.6H6" stroke="#666" stroke-width="1.2" fill="none"/><path d="M3 3l6 6M9 4.5V9H4.5" stroke="#666" stroke-width="1.2" fill="none"/></svg>
<svg style="left:2857.2px;top:186px;" width="10" height="10" viewBox="0 0 10 10"><path d="M0.6 6V0.6H6" stroke="#666" stroke-width="1.2" fill="none"/><path d="M3 3l6 6M9 4.5V9H4.5" stroke="#666" stroke-width="1.2" fill="none"/></svg>
<svg style="left:3816.6px;top:189.5px;" width="10.4" height="6.5" viewBox="0 0 10.4 6.5"><rect width="10.4" height="6.5" fill="#f3f3f3"/><path d="M.7 5.8L5.2 1 9.7 5.8" stroke="#333" stroke-width="1.5" fill="none"/></svg>
<svg style="left:1941.5px;top:91.5px;" width="34" height="38" viewBox="0 0 34 38"><path d="M3 6h7c0-4 8-4 8 0h7v24H3z" fill="#ececec" stroke="#b4b4b4" stroke-width="1.4"/><rect x="18" y="15" width="15" height="21" fill="#e6e6e6" stroke="#b4b4b4" stroke-width="1.4"/></svg>
<span class="t fs" style="left:1940.5px;top:133.84px;font-size:17px;line-height:17px;color:#a6a6a6;transform:scaleX(0.7637);">Paste</span>
<svg style="left:1952.3px;top:157.7px;" width="8" height="5" viewBox="0 0 8 5"><path d="M0.5 0.5L4 4 7.5 0.5" stroke="#b0b0b0" stroke-width="1.3" fill="none"/></svg>
<svg style="left:1989px;top:91.5px;" width="16" height="20" viewBox="0 0 16 20"><path d="M4 0l6 13M12 0L6 13" stroke="#444" stroke-width="1.2"/><circle cx="4" cy="16.5" r="2.6" fill="none" stroke="#2b7cd3" stroke-width="1.3"/><circle cx="12" cy="16.5" r="2.6" fill="none" stroke="#2b7cd3" stroke-width="1.3"/></svg>
<svg style="left:1987px;top:121px;" width="20" height="20" viewBox="0 0 20 20"><path d="M.7.7h8l2.5 2.5v12H.7z" fill="#f3f3f3" stroke="#444" stroke-width="1.2"/><path d="M8.5 5h6.5l4 4v10H8.5z" fill="#f3f3f3" stroke="#444" stroke-width="1.2"/><path d="M11 12h5.5M11 15h5.5" stroke="#444" stroke-width="1"/></svg>
<svg style="left:2015px;top:128.5px;" width="8" height="5" viewBox="0 0 8 5"><path d="M0.5 0.5L4 4 7.5 0.5" stroke="#444" stroke-width="1.3" fill="none"/></svg>
<svg style="left:1987px;top:151px;" width="20" height="19" viewBox="0 0 20 19"><path d="M17 1l2 2-6 7-3-3z" fill="#fff" stroke="#444" stroke-width="1.2"/><path d="M9 6l5 5-7 7-7-8z" fill="#fff" stroke="#e8710a" stroke-width="1.5"/><path d="M3 10l7 5" stroke="#e8710a" stroke-width="1.2"/></svg>
<div style="left:2051.2px;top:97.4px;width:143.3px;height:28px;background:#fff;border:1px solid #c6c6c6;"></div>
<span class="t fs" style="left:2054.2px;top:103.4px;font-size:17.5px;line-height:17.5px;color:#333;transform:scaleX(0.8428);">Calibri</span>
<svg style="left:2183px;top:110px;" width="8" height="5" viewBox="0 0 8 5"><path d="M0.5 0.5L4 4 7.5 0.5" stroke="#333" stroke-width="1.3" fill="none"/></svg>
<div style="left:2197.3px;top:97.4px;width:61.3px;height:28px;background:#fff;border:1px solid #c6c6c6;"></div>
<span class="t fs" style="left:2201px;top:103.4px;font-size:17.5px;line-height:17.5px;color:#333;transform:scaleX(0.6884);">11</span>
<svg style="left:2247px;top:110px;" width="8" height="5" viewBox="0 0 8 5"><path d="M0.5 0.5L4 4 7.5 0.5" stroke="#333" stroke-width="1.3" fill="none"/></svg>
<span class="t fs" style="left:2266.6px;top:98.94px;font-size:22px;line-height:22px;color:#444;transform:scaleX(0.9200);">A</span>
<svg style="left:2280px;top:101.5px;" width="6" height="4" viewBox="0 0 6 4"><path d="M.5 3.5L3 .8 5.5 3.5" stroke="#2b7cd3" stroke-width="1.3" fill="none"/></svg>
<span class="t fs" style="left:2298.2px;top:102.36px;font-size:18px;line-height:18px;color:#444;transform:scaleX(0.9162);">A</span>
<svg style="left:2309.5px;top:101.5px;" width="6" height="4" viewBox="0 0 6 4"><path d="M.5.5L3 3.2 5.5.5" stroke="#2b7cd3" stroke-width="1.3" fill="none"/></svg>
<span class="t fs" style="left:2059.75px;top:140.88px;font-size:19px;line-height:19px;color:#333;font-weight:bold;transform:scaleX(0.7652);">B</span>
<span class="t fr" style="left:2091.6px;top:140.88px;font-size:19px;line-height:19px;color:#333;font-style:italic;transform:scaleX(1.1062);">I</span>
<span class="t fs" style="left:2118.5px;top:140.86px;font-size:18px;line-height:18px;color:#333;transform:scaleX(0.8462);">U</span>
<div style="left:2118.5px;top:158.5px;width:11.5px;height:1.3px;background:#333;"></div>
<svg style="left:2143.3px;top:148.5px;" width="8" height="5" viewBox="0 0 8 5"><path d="M0.5 0.5L4 4 7.5 0.5" stroke="#444" stroke-width="1.3" fill="none"/></svg>
<div style="left:2162.2px;top:138.8px;width:1px;height:26px;background:#d0d0d0;"></div>
<div style="left:2218.5px;top:138.8px;width:1px;height:26px;background:#d0d0d0;"></div>
<svg style="left:2171px;top:141px;" width="19" height="19" viewBox="0 0 19 19"><rect x=".7" y=".7" width="17.6" height="17.6" fill="none" stroke="#666" stroke-width="1" stroke-dasharray="1.5 1.5"/><path d="M9.5 1v17M1 9.5h17" stroke="#666" stroke-width="1" stroke-dasharray="1.5 1.5"/><path d="M0 18.3h19" stroke="#333" stroke-width="1.5"/></svg>
<svg style="left:2199.2px;top:148.5px;" width="8" height="5" viewBox="0 0 8 5"><path d="M0.5 0.5L4 4 7.5 0.5" stroke="#444" stroke-width="1.3" fill="none"/></svg>
<svg style="left:2229px;top:141px;" width="18" height="14" viewBox="0 0 18 14"><path d="M7 1l7 7-5.5 5.5L2 7z" fill="none" stroke="#444" stroke-width="1.3"/><path d="M13 5c3 2 3 5 2 7" fill="none" stroke="#2b7cd3" stroke-width="1.5"/></svg>
<div style="left:2227px;top:156px;width:20px;height:4.6px;background:#f0c23c;"></div>
<svg style="left:2255px;top:148.5px;" width="8" height="5" viewBox="0 0 8 5"><path d="M0.5 0.5L4 4 7.5 0.5" stroke="#444" stroke-width="1.3" fill="none"/></svg>
<span class="t fs" style="left:2279.5px;top:138.38px;font-size:19px;line-height:19px;color:#444;transform:scaleX(1.0258);">A</span>
<div style="left:2275.9px;top:156px;width:20.1px;height:4.6px;background:#ee3c1c;"></div>
<svg style="left:2304.5px;top:148.5px;" width="8" height="5" viewBox="0 0 8 5"><path d="M0.5 0.5L4 4 7.5 0.5" stroke="#444" stroke-width="1.3" fill="none"/></svg>
<div style="left:2344.2px;top:101.2px;width:18px;height:1.5px;background:#444;"></div>
<div style="left:2346.7px;top:106.4px;width:13px;height:1.5px;background:#444;"></div>
<div style="left:2344.2px;top:111.6px;width:18px;height:1.5px;background:#444;"></div>
<div style="left:2374px;top:104.4px;width:18px;height:1.5px;background:#444;"></div>
<div style="left:2376.5px;top:109.6px;width:13px;height:1.5px;background:#444;"></div>
<div style="left:2374px;top:114.8px;width:18px;height:1.5px;background:#444;"></div>
<div style="left:2399.2px;top:97.4px;width:27.8px;height:28.1px;background:#c9c9c9;border:1px solid #a0a0a0;"></div>
<div style="left:2404px;top:109.5px;width:18px;height:1.5px;background:#444;"></div>
<div style="left:2406.5px;top:114.7px;width:13px;height:1.5px;background:#444;"></div>
<div style="left:2404px;top:119.9px;width:18px;height:1.5px;background:#444;"></div>
<div style="left:2431.4px;top:98px;width:1px;height:27px;background:#d0d0d0;"></div>
<div style="left:2431.4px;top:139px;width:1px;height:25px;background:#d0d0d0;"></div>
<svg style="left:2440px;top:100px;" width="20" height="20" viewBox="0 0 20 20"><path d="M3 19L18 5M12 5h6v6" fill="none" stroke="#2b7cd3" stroke-width="1.5"/><text x="0" y="12" font-size="12" font-family="Liberation Sans" fill="#444" transform="rotate(-45 6 10)">ab</text></svg>
<svg style="left:2465px;top:109.5px;" width="8" height="5" viewBox="0 0 8 5"><path d="M0.5 0.5L4 4 7.5 0.5" stroke="#444" stroke-width="1.3" fill="none"/></svg>
<div style="left:2499.4px;top:94px;width:1px;height:74px;background:#d0d0d0;"></div>
<svg style="left:2512px;top:101px;" width="17" height="20" viewBox="0 0 17 20"><text x="0" y="8.5" font-size="11.5" font-family="Liberation Sans" fill="#444">ab</text><text x="0" y="18" font-size="11.5" font-family="Liberation Sans" fill="#444">c</text><path d="M15.5 8v4c0 3-3 3.5-7 3.5M11.5 12.5L8 15.5l3.5 3" fill="none" stroke="#2b7cd3" stroke-width="1.4"/></svg>
<span class="t fs" style="left:2533.7px;top:103.84px;font-size:17px;line-height:17px;color:#444;transform:scaleX(0.8393);">Wrap Text</span>
<div style="left:2344.2px;top:142px;width:18px;height:1.5px;background:#444;"></div>
<div style="left:2344.2px;top:147.15px;width:12px;height:1.5px;background:#444;"></div>
<div style="left:2344.2px;top:152.3px;width:18px;height:1.5px;background:#444;"></div>
<div style="left:2344.2px;top:157.45px;width:12px;height:1.5px;background:#444;"></div>
<div style="left:2374px;top:142px;width:18px;height:1.5px;background:#444;"></div>
<div style="left:2377px;top:147.15px;width:12px;height:1.5px;background:#444;"></div>
<div style="left:2374px;top:152.3px;width:18px;height:1.5px;background:#444;"></div>
<div style="left:2377px;top:157.45px;width:12px;height:1.5px;background:#444;"></div>
<div style="left:2404px;top:142px;width:18px;height:1.5px;background:#444;"></div>
<div style="left:2410px;top:147.15px;width:12px;height:1.5px;background:#444;"></div>
<div style="left:2404px;top:152.3px;width:18px;height:1.5px;background:#444;"></div>
<div style="left:2410px;top:157.45px;width:12px;height:1.5px;background:#444;"></div>
<div style="left:2441px;top:142px;width:18px;height:1.5px;background:#444;"></div>
<div style="left:2449px;top:147.2px;width:10px;height:1.5px;background:#444;"></div>
<div style="left:2449px;top:152.35px;width:10px;height:1.5px;background:#444;"></div>
<div style="left:2441px;top:157.5px;width:18px;height:1.5px;background:#444;"></div>
<svg style="left:2441px;top:146.5px;" width="8" height="7" viewBox="0 0 8 7"><path d="M7.5 3.5H1M3.8.7L1 3.5l2.8 2.8" stroke="#2b7cd3" stroke-width="1.3" fill="none"/></svg>
<div style="left:2471px;top:142px;width:18px;height:1.5px;background:#444;"></div>
<div style="left:2479px;top:147.2px;width:10px;height:1.5px;background:#444;"></div>
<div style="left:2479px;top:152.35px;width:10px;height:1.5px;background:#444;"></div>
<div style="left:2471px;top:157.5px;width:18px;height:1.5px;background:#444;"></div>
<svg style="left:2471px;top:146.5px;" width="8" height="7" viewBox="0 0 8 7"><path d="M.5 3.5H7M4.2.7L7 3.5 4.2 6.3" stroke="#2b7cd3" stroke-width="1.3" fill="none"/></svg>
<svg style="left:2509px;top:141.2px;" width="19" height="18.5" viewBox="0 0 19 18.5"><rect x=".7" y=".7" width="17.6" height="17" fill="#f3f3f3" stroke="#555" stroke-width="1.2"/><path d="M9.5 1v3.5M9.5 14v4" stroke="#555" stroke-width="1.2"/><rect x=".7" y="4.7" width="17.6" height="9" fill="#fff" stroke="#2b7cd3" stroke-width="1.4"/><path d="M3.5 9.2h12M6 6.8L3.5 9.2 6 11.6M13 6.8l2.5 2.4-2.5 2.4" fill="none" stroke="#2b7cd3" stroke-width="1.3"/></svg>
<span class="t fs" style="left:2533.3px;top:142.84px;font-size:17px;line-height:17px;color:#444;transform:scaleX(0.8775);">Merge &amp; Center</span>
<svg style="left:2652.3px;top:149px;" width="8" height="5" viewBox="0 0 8 5"><path d="M0.5 0.5L4 4 7.5 0.5" stroke="#444" stroke-width="1.3" fill="none"/></svg>
<div style="left:2688.4px;top:97.4px;width:173.5px;height:28.1px;background:#fff;border:1px solid #c6c6c6;"></div>
<span class="t fs" style="left:2691.2px;top:103.4px;font-size:17.5px;line-height:17.5px;color:#333;transform:scaleX(0.8079);">General</span>
<svg style="left:2850.4px;top:110px;" width="8" height="5" viewBox="0 0 8 5"><path d="M0.5 0.5L4 4 7.5 0.5" stroke="#333" stroke-width="1.3" fill="none"/></svg>
<svg style="left:2691.5px;top:143.5px;" width="21" height="17" viewBox="0 0 21 17"><rect x=".7" y=".7" width="18" height="11" fill="none" stroke="#444" stroke-width="1.3"/><path d="M7 4c-3 0-3 4.5 0 4.5M12 4c-3 0-3 4.5 0 4.5" stroke="#444" stroke-width="1.2" fill="none"/><ellipse cx="16" cy="9" rx="4" ry="1.8" fill="#f3f3f3" stroke="#e8710a" stroke-width="1.2"/><path d="M12 9v6c0 2.4 8 2.4 8 0V9M12 12c0 2.4 8 2.4 8 0" fill="#f3f3f3" stroke="#e8710a" stroke-width="1.2"/></svg>
<svg style="left:2720.3px;top:149px;" width="8" height="5" viewBox="0 0 8 5"><path d="M0.5 0.5L4 4 7.5 0.5" stroke="#444" stroke-width="1.3" fill="none"/></svg>
<span class="t fs" style="left:2741.5px;top:138.98px;font-size:24px;line-height:24px;color:#444;transform:scaleX(0.8669);">%</span>
<svg style="left:2777px;top:143px;" width="10" height="16" viewBox="0 0 10 16"><path d="M5 0.5a4 4 0 0 1 3.8 4.5c0 4-2.5 8-6 10.5l-.8-1c2-2 3-4 3.2-6A4 4 0 1 1 5 .5z" fill="#333"/></svg>
<div style="left:2799.6px;top:139px;width:1px;height:26px;background:#d0d0d0;"></div>
<svg style="left:2808px;top:141.5px;" width="21" height="20" viewBox="0 0 21 20"><path d="M9 5H1.5M4.5 2L1.5 5l3 3" stroke="#2b7cd3" stroke-width="1.4" fill="none"/><text x="10" y="9" font-size="11" font-family="Liberation Sans" fill="#444">0</text><text x="4" y="19" font-size="11" font-family="Liberation Sans" fill="#444">.00</text></svg>
<svg style="left:2838px;top:141.5px;" width="21" height="20" viewBox="0 0 21 20"><text x="5" y="9" font-size="11" font-family="Liberation Sans" fill="#444">.00</text><path d="M1 15h8M6 12l3 3-3 3" stroke="#2b7cd3" stroke-width="1.4" fill="none"/><text x="11" y="19" font-size="11" font-family="Liberation Sans" fill="#444">.0</text></svg>
<svg style="left:2910.4px;top:95.1px;" width="35.2" height="27.3" viewBox="0 0 35.2 27.3"><g transform="translate(0,0)"><rect x=".8" y=".8" width="33.6" height="25.7" fill="#fff" stroke="#666" stroke-width="1.5"/><path d="M0 9.1h35M0 18.2h35M7 0v27M17 0v27M26 0v27" stroke="#666" stroke-width="1.3"/><rect x="7" y="1" width="15.5" height="8.5" fill="#f4a6a0" stroke="#e8442a" stroke-width="1.5"/><rect x="7" y="9.5" width="10" height="8.5" fill="#5b9bd5" stroke="#2b7cd3"/><rect x="7" y="18" width="17.5" height="8.5" fill="#f4a6a0" stroke="#e8442a" stroke-width="1.5"/></g></svg>
<span class="t fs" style="left:2889px;top:133.94px;font-size:17px;line-height:17px;color:#444;transform:scaleX(0.8994);">Conditional</span>
<span class="t fs" style="left:2884.2px;top:153.44px;font-size:17px;line-height:17px;color:#444;transform:scaleX(0.8837);">Formatting</span>
<svg style="left:2961.5px;top:159px;" width="8" height="5" viewBox="0 0 8 5"><path d="M0.5 0.5L4 4 7.5 0.5" stroke="#444" stroke-width="1.3" fill="none"/></svg>
<svg style="left:2991.3px;top:95.1px;" width="39" height="32" viewBox="0 0 39 32"><g transform="translate(0,0)"><rect x=".8" y=".8" width="33.6" height="25.7" fill="#fff" stroke="#666" stroke-width="1.5"/><path d="M0 9.1h35M0 18.2h35M11.7 0v27M23.4 0v27" stroke="#666" stroke-width="1.3"/><rect x="11.7" y="9.1" width="22.7" height="17.4" fill="#5b9bd5"/></g><path d="M37 9c-5 4-11 11-14 17l3 2c5-5 10-12 13-18z" fill="#fff" stroke="#444" stroke-width="1.3"/><path d="M22 25c-4 0-5 3-9 4 4 3 11 2 13-2z" fill="#2b7cd3"/></svg>
<span class="t fs" style="left:2976.4px;top:133.94px;font-size:17px;line-height:17px;color:#444;transform:scaleX(0.8390);">Format as</span>
<span class="t fs" style="left:2984.4px;top:153.44px;font-size:17px;line-height:17px;color:#444;transform:scaleX(0.8042);">Table</span>
<svg style="left:3023.4px;top:159px;" width="8" height="5" viewBox="0 0 8 5"><path d="M0.5 0.5L4 4 7.5 0.5" stroke="#444" stroke-width="1.3" fill="none"/></svg>
<svg style="left:3054.6px;top:95.1px;" width="39" height="32" viewBox="0 0 39 32"><g transform="translate(0,0)"><rect x=".8" y=".8" width="33.6" height="25.7" fill="#fff" stroke="#666" stroke-width="1.5"/><path d="M0 5h35M0 21h35M6 0v27M29 0v27" stroke="#666" stroke-width="1.3"/><rect x="6" y="5" width="23" height="16" fill="#5b9bd5"/></g><path d="M37 9c-5 4-11 11-14 17l3 2c5-5 10-12 13-18z" fill="#fff" stroke="#444" stroke-width="1.3"/><path d="M22 25c-4 0-5 3-9 4 4 3 11 2 13-2z" fill="#2b7cd3"/></svg>
<span class="t fs" style="left:3060.3px;top:133.94px;font-size:17px;line-height:17px;color:#444;transform:scaleX(0.8229);">Cell</span>
<span class="t fs" style="left:3046.2px;top:153.44px;font-size:17px;line-height:17px;color:#444;transform:scaleX(0.8079);">Styles</span>
<svg style="left:3088.8px;top:159px;" width="8" height="5" viewBox="0 0 8 5"><path d="M0.5 0.5L4 4 7.5 0.5" stroke="#444" stroke-width="1.3" fill="none"/></svg>
<svg style="left:3125px;top:95.1px;" width="42" height="28" viewBox="0 0 42 28"><g transform="translate(5.5,0)"><rect x=".8" y=".8" width="33.6" height="25.7" fill="#fff" stroke="#666" stroke-width="1.5"/><path d="M0 9.1h35M0 18.2h35M11.7 0v27M23.4 0v27" stroke="#666" stroke-width="1.3"/></g><rect x="13" y="9.5" width="28" height="9" fill="#5b9bd5" stroke="#2b7cd3"/><path d="M16 14H2M7.5 7.5L1.5 14l6 6.5" fill="none" stroke="#2b7cd3" stroke-width="1.6"/></svg>
<span class="t fs" style="left:3129.5px;top:133.94px;font-size:17px;line-height:17px;color:#444;transform:scaleX(0.8279);">Insert</span>
<svg style="left:3142.2px;top:158px;" width="8" height="5" viewBox="0 0 8 5"><path d="M0.5 0.5L4 4 7.5 0.5" stroke="#444" stroke-width="1.3" fill="none"/></svg>
<svg style="left:3181.5px;top:95.1px;" width="38" height="28" viewBox="0 0 38 28"><g transform="translate(0,0)"><rect x=".8" y=".8" width="33.6" height="25.7" fill="#fff" stroke="#666" stroke-width="1.5"/><path d="M0 9.1h35M0 18.2h35M11.7 0v27M23.4 0v27" stroke="#666" stroke-width="1.3"/><rect x="0" y="6" width="36" height="15" fill="#f3f3f3"/></g><path d="M5 10h13v8H5z" fill="#5b9bd5" stroke="#2b7cd3"/><path d="M18 10l5 4-5 4z" fill="#5b9bd5"/><path d="M23 7l13 14M36 7L23 21" stroke="#e8442a" stroke-width="1.6"/></svg>
<span class="t fs" style="left:3177.9px;top:133.94px;font-size:17px;line-height:17px;color:#444;transform:scaleX(0.8628);">Delete</span>
<svg style="left:3194.7px;top:158px;" width="8" height="5" viewBox="0 0 8 5"><path d="M0.5 0.5L4 4 7.5 0.5" stroke="#444" stroke-width="1.3" fill="none"/></svg>
<svg style="left:3233.9px;top:89.5px;" width="36" height="33" viewBox="0 0 36 33"><g transform="translate(0,5.6)"><rect x=".8" y=".8" width="33.6" height="25.7" fill="#fff" stroke="#666" stroke-width="1.5"/><path d="M0 9.1h35M0 18.2h35M9 0v27M26 0v27" stroke="#666" stroke-width="1.3"/><rect x="9" y="9.1" width="17" height="9.1" fill="#5b9bd5" stroke="#2b7cd3"/></g><path d="M8 2h19M8 0v4M27 0v4" stroke="#2b7cd3" stroke-width="1.4"/></svg>
<span class="t fs" style="left:3227.6px;top:133.94px;font-size:17px;line-height:17px;color:#444;transform:scaleX(0.8562);">Format</span>
<svg style="left:3246.2px;top:158px;" width="8" height="5" viewBox="0 0 8 5"><path d="M0.5 0.5L4 4 7.5 0.5" stroke="#444" stroke-width="1.3" fill="none"/></svg>
<svg style="left:3303px;top:90.6px;" width="16" height="18" viewBox="0 0 16 18"><path d="M15 3.5V1H1l7.5 8L1 17h14v-2.5" fill="none" stroke="#444" stroke-width="1.4"/></svg>
<svg style="left:3329.2px;top:96.5px;" width="8" height="5" viewBox="0 0 8 5"><path d="M0.5 0.5L4 4 7.5 0.5" stroke="#444" stroke-width="1.3" fill="none"/></svg>
<svg style="left:3301px;top:119.3px;" width="20" height="18" viewBox="0 0 20 18"><rect x=".7" y=".7" width="18.6" height="16.6" fill="#fff" stroke="#555" stroke-width="1.3"/><path d="M.7 3h18.6" stroke="#555" stroke-width="2"/><path d="M10 6v8M6.8 11l3.2 3 3.2-3" fill="none" stroke="#2b7cd3" stroke-width="1.5"/></svg>
<svg style="left:3326.2px;top:126px;" width="8" height="5" viewBox="0 0 8 5"><path d="M0.5 0.5L4 4 7.5 0.5" stroke="#444" stroke-width="1.3" fill="none"/></svg>
<svg style="left:3301px;top:148.3px;" width="20" height="18" viewBox="0 0 20 18"><path d="M1 10.5L10.5 1 19 9.5 10 17.5H7z" fill="#fff" stroke="#a33bb8" stroke-width="1.4"/><path d="M1 10.5L7 17.5h3l2-2-7.5-7.5z" fill="#c46fd2"/></svg>
<svg style="left:3326.2px;top:155.5px;" width="8" height="5" viewBox="0 0 8 5"><path d="M0.5 0.5L4 4 7.5 0.5" stroke="#444" stroke-width="1.3" fill="none"/></svg>
<svg style="left:3353px;top:92px;" width="36" height="37" viewBox="0 0 36 37"><text x="3" y="14" font-size="17" font-family="Liberation Sans" fill="#2b7cd3">A</text><text x="3" y="33" font-size="17" font-family="Liberation Sans" fill="#444">Z</text><path d="M16 9h19l-7.5 9v10h-4V18z" fill="none" stroke="#444" stroke-width="1.4"/></svg>
<span class="t fs" style="left:3348.9px;top:133.44px;font-size:17px;line-height:17px;color:#444;transform:scaleX(0.8996);">Sort &amp;</span>
<span class="t fs" style="left:3347px;top:153.44px;font-size:17px;line-height:17px;color:#444;transform:scaleX(0.8576);">Filter</span>
<svg style="left:3384px;top:159px;" width="8" height="5" viewBox="0 0 8 5"><path d="M0.5 0.5L4 4 7.5 0.5" stroke="#444" stroke-width="1.3" fill="none"/></svg>
<svg style="left:3406px;top:91px;" width="38" height="38" viewBox="0 0 38 38"><circle cx="25" cy="14" r="12" fill="none" stroke="#444" stroke-width="1.5"/><path d="M16.5 22.5L1.5 37" stroke="#444" stroke-width="1.6"/></svg>
<span class="t fs" style="left:3404.4px;top:133.44px;font-size:17px;line-height:17px;color:#444;transform:scaleX(0.8792);">Find &amp;</span>
<span class="t fs" style="left:3399.2px;top:153.44px;font-size:17px;line-height:17px;color:#444;transform:scaleX(0.8423);">Select</span>
<svg style="left:3443.6px;top:159px;" width="8" height="5" viewBox="0 0 8 5"><path d="M0.5 0.5L4 4 7.5 0.5" stroke="#444" stroke-width="1.3" fill="none"/></svg>
<svg style="left:3483.8px;top:89.4px;" width="41" height="40" viewBox="0 0 41 40"><rect x=".8" y=".8" width="38.4" height="36" fill="#fff" stroke="#666" stroke-width="1.5"/><rect x=".8" y=".8" width="38.4" height="5" fill="#9a9a9a"/><path d="M0 16h39M0 27h39M10 6v31M29 6v31" stroke="#888" stroke-width="1.2"/><circle cx="19" cy="18" r="12" fill="#fff" stroke="#444" stroke-width="1.6"/><path d="M27.5 27L39 39" stroke="#444" stroke-width="2"/><rect x="12.5" y="16" width="3.6" height="7" fill="#8aa"/><rect x="17.2" y="11" width="3.6" height="12" fill="#2b7cd3"/><rect x="22" y="14" width="3.6" height="9" fill="#5b9bd5"/></svg>
<span class="t fs" style="left:3478.2px;top:133.44px;font-size:17px;line-height:17px;color:#444;transform:scaleX(0.8498);">Analyze</span>
<span class="t fs" style="left:3488.6px;top:153.44px;font-size:17px;line-height:17px;color:#444;transform:scaleX(0.8633);">Data</span>
<svg style="left:3574px;top:89px;" width="35" height="38" viewBox="0 0 35 38"><path d="M1 8h17l6 6v22H1z" fill="#ececec" stroke="#bdbdbd" stroke-width="1.3"/><path d="M22 7l7-6 5 6-7 6z" fill="#e4e4e4" stroke="#bdbdbd" stroke-width="1.3"/><path d="M7 17l12 12 5-3-12-12z" fill="#e4e4e4" stroke="#bdbdbd" stroke-width="1.3"/></svg>
<span class="t fs" style="left:3555.4px;top:133.44px;font-size:17px;line-height:17px;color:#a6a6a6;transform:scaleX(0.8520);">Sensitivity</span>
<svg style="left:3583px;top:158.5px;" width="8" height="5" viewBox="0 0 8 5"><path d="M0.5 0.5L4 4 7.5 0.5" stroke="#b0b0b0" stroke-width="1.3" fill="none"/></svg>
<span class="t fs" style="left:3676px;top:95.6px;font-size:30px;line-height:30px;color:#444;transform:scaleX(0.8990);">ab</span>
<div style="left:3671.3px;top:111.5px;width:40px;height:1.4px;background:#444;"></div>
<span class="t fs" style="left:3646.3px;top:133.44px;font-size:17px;line-height:17px;color:#444;transform:scaleX(0.8733);">Strikethrough</span>
<div style="left:1921px;top:200.5px;width:1919px;height:1px;background:#d8d8d8;"></div>
<div style="left:1921px;top:201.5px;width:1919px;height:55px;background:#e6e6e6;"></div>
<div style="left:1927.5px;top:214.6px;width:126.1px;height:28.8px;background:#fff;border:1px solid #c9c9c9;"></div>
<span class="t fs" style="left:1934.5px;top:220.9px;font-size:17.5px;line-height:17.5px;color:#333;transform:scaleX(0.8269);">A1</span>
<svg style="left:2038px;top:227.5px;" width="7" height="4" viewBox="0 0 7 4"><path d="M0 0h7L3.5 4z" fill="#777"/></svg>
<div style="left:2071.4px;top:223px;width:2px;height:2.4px;background:#a0a0a0;"></div>
<div style="left:2071.4px;top:227.7px;width:2px;height:2.4px;background:#a0a0a0;"></div>
<div style="left:2071.4px;top:232.4px;width:2px;height:2.4px;background:#a0a0a0;"></div>
<div style="left:2091.4px;top:214.6px;width:136px;height:28.8px;background:#fff;border:1px solid #c9c9c9;"></div>
<svg style="left:2107px;top:223px;" width="13" height="13" viewBox="0 0 13 13"><path d="M1 1l11 11M12 1L1 12" stroke="#b0b0b0" stroke-width="1.8"/></svg>
<svg style="left:2151px;top:223px;" width="16" height="13" viewBox="0 0 16 13"><path d="M1 7l5 5L15 1" stroke="#b0b0b0" stroke-width="2" fill="none"/></svg>
<span class="t fr" style="left:2196px;top:219.38px;font-size:19px;line-height:19px;color:#666;font-weight:bold;font-style:italic;transform:scaleX(1.1062);">f</span>
<span class="t fr" style="left:2204px;top:223.78px;font-size:14px;line-height:14px;color:#666;font-weight:bold;font-style:italic;">x</span>
<div style="left:2231.2px;top:214.6px;width:1601.5px;height:28.8px;background:#fff;border:1px solid #c9c9c9;"></div>
<svg style="left:3818px;top:226.5px;" width="9" height="6" viewBox="0 0 9 6"><path d="M.7.7L4.5 4.7 8.3.7" stroke="#555" stroke-width="1.8" fill="none"/></svg>
<div style="left:1921px;top:279px;width:1893.4px;height:745.5px;background:#fff;"></div>
<div style="left:1921px;top:256.4px;width:1893.4px;height:22.6px;background:#e6e6e6;"></div>
<div style="left:1921px;top:279px;width:33px;height:745.5px;background:#e6e6e6;"></div>
<span class="t fs" style="left:2015.78px;top:259.14px;font-size:17px;line-height:17px;color:#444;transform:scaleX(0.9200);">A</span>
<div style="left:2087.5px;top:257px;width:1px;height:22px;background:#bdbdbd;"></div>
<div style="left:2087.5px;top:279px;width:1px;height:745px;background:#d8d8d8;"></div>
<span class="t fs" style="left:2122.78px;top:259.14px;font-size:17px;line-height:17px;color:#444;transform:scaleX(0.9200);">B</span>
<div style="left:2167.5px;top:257px;width:1px;height:22px;background:#bdbdbd;"></div>
<div style="left:2167.5px;top:279px;width:1px;height:745px;background:#d8d8d8;"></div>
<span class="t fs" style="left:2202.35px;top:259.14px;font-size:17px;line-height:17px;color:#444;transform:scaleX(0.9200);">C</span>
<div style="left:2247.5px;top:257px;width:1px;height:22px;background:#bdbdbd;"></div>
<div style="left:2247.5px;top:279px;width:1px;height:745px;background:#d8d8d8;"></div>
<span class="t fs" style="left:2282.35px;top:259.14px;font-size:17px;line-height:17px;color:#444;transform:scaleX(0.9200);">D</span>
<div style="left:2327.5px;top:257px;width:1px;height:22px;background:#bdbdbd;"></div>
<div style="left:2327.5px;top:279px;width:1px;height:745px;background:#d8d8d8;"></div>
<span class="t fs" style="left:2362.78px;top:259.14px;font-size:17px;line-height:17px;color:#444;transform:scaleX(0.9200);">E</span>
<div style="left:2407.5px;top:257px;width:1px;height:22px;background:#bdbdbd;"></div>
<div style="left:2407.5px;top:279px;width:1px;height:745px;background:#d8d8d8;"></div>
<span class="t fs" style="left:2443.22px;top:259.14px;font-size:17px;line-height:17px;color:#444;transform:scaleX(0.9200);">F</span>
<div style="left:2487.5px;top:257px;width:1px;height:22px;background:#bdbdbd;"></div>
<div style="left:2487.5px;top:279px;width:1px;height:745px;background:#d8d8d8;"></div>
<span class="t fs" style="left:2521.92px;top:259.14px;font-size:17px;line-height:17px;color:#444;transform:scaleX(0.9200);">G</span>
<div style="left:2567.5px;top:257px;width:1px;height:22px;background:#bdbdbd;"></div>
<div style="left:2567.5px;top:279px;width:1px;height:745px;background:#d8d8d8;"></div>
<span class="t fs" style="left:2602.35px;top:259.14px;font-size:17px;line-height:17px;color:#444;transform:scaleX(0.9200);">H</span>
<div style="left:2647.5px;top:257px;width:1px;height:22px;background:#bdbdbd;"></div>
<div style="left:2647.5px;top:279px;width:1px;height:745px;background:#d8d8d8;"></div>
<span class="t fs" style="left:2685.83px;top:259.14px;font-size:17px;line-height:17px;color:#444;transform:scaleX(0.9200);">I</span>
<div style="left:2727.5px;top:257px;width:1px;height:22px;background:#bdbdbd;"></div>
<div style="left:2727.5px;top:279px;width:1px;height:745px;background:#d8d8d8;"></div>
<span class="t fs" style="left:2764.09px;top:259.14px;font-size:17px;line-height:17px;color:#444;transform:scaleX(0.9200);">J</span>
<div style="left:2807.5px;top:257px;width:1px;height:22px;background:#bdbdbd;"></div>
<div style="left:2807.5px;top:279px;width:1px;height:745px;background:#d8d8d8;"></div>
<span class="t fs" style="left:2842.78px;top:259.14px;font-size:17px;line-height:17px;color:#444;transform:scaleX(0.9200);">K</span>
<div style="left:2887.5px;top:257px;width:1px;height:22px;background:#bdbdbd;"></div>
<div style="left:2887.5px;top:279px;width:1px;height:745px;background:#d8d8d8;"></div>
<span class="t fs" style="left:2923.65px;top:259.14px;font-size:17px;line-height:17px;color:#444;transform:scaleX(0.9200);">L</span>
<div style="left:2967.5px;top:257px;width:1px;height:22px;background:#bdbdbd;"></div>
<div style="left:2967.5px;top:279px;width:1px;height:745px;background:#d8d8d8;"></div>
<span class="t fs" style="left:3001.49px;top:259.14px;font-size:17px;line-height:17px;color:#444;transform:scaleX(0.9200);">M</span>
<div style="left:3047.5px;top:257px;width:1px;height:22px;background:#bdbdbd;"></div>
<div style="left:3047.5px;top:279px;width:1px;height:745px;background:#d8d8d8;"></div>
<span class="t fs" style="left:3082.35px;top:259.14px;font-size:17px;line-height:17px;color:#444;transform:scaleX(0.9200);">N</span>
<div style="left:3127.5px;top:257px;width:1px;height:22px;background:#bdbdbd;"></div>
<div style="left:3127.5px;top:279px;width:1px;height:745px;background:#d8d8d8;"></div>
<span class="t fs" style="left:3161.92px;top:259.14px;font-size:17px;line-height:17px;color:#444;transform:scaleX(0.9200);">O</span>
<div style="left:3207.5px;top:257px;width:1px;height:22px;background:#bdbdbd;"></div>
<div style="left:3207.5px;top:279px;width:1px;height:745px;background:#d8d8d8;"></div>
<span class="t fs" style="left:3242.78px;top:259.14px;font-size:17px;line-height:17px;color:#444;transform:scaleX(0.9200);">P</span>
<div style="left:3287.5px;top:257px;width:1px;height:22px;background:#bdbdbd;"></div>
<div style="left:3287.5px;top:279px;width:1px;height:745px;background:#d8d8d8;"></div>
<span class="t fs" style="left:3321.92px;top:259.14px;font-size:17px;line-height:17px;color:#444;transform:scaleX(0.9200);">Q</span>
<div style="left:3367.5px;top:257px;width:1px;height:22px;background:#bdbdbd;"></div>
<div style="left:3367.5px;top:279px;width:1px;height:745px;background:#d8d8d8;"></div>
<span class="t fs" style="left:3402.35px;top:259.14px;font-size:17px;line-height:17px;color:#444;transform:scaleX(0.9200);">R</span>
<div style="left:3447.5px;top:257px;width:1px;height:22px;background:#bdbdbd;"></div>
<div style="left:3447.5px;top:279px;width:1px;height:745px;background:#d8d8d8;"></div>
<span class="t fs" style="left:3482.78px;top:259.14px;font-size:17px;line-height:17px;color:#444;transform:scaleX(0.9200);">S</span>
<div style="left:3527.5px;top:257px;width:1px;height:22px;background:#bdbdbd;"></div>
<div style="left:3527.5px;top:279px;width:1px;height:745px;background:#d8d8d8;"></div>
<span class="t fs" style="left:3563.22px;top:259.14px;font-size:17px;line-height:17px;color:#444;transform:scaleX(0.9200);">T</span>
<div style="left:3607.5px;top:257px;width:1px;height:22px;background:#bdbdbd;"></div>
<div style="left:3607.5px;top:279px;width:1px;height:745px;background:#d8d8d8;"></div>
<span class="t fs" style="left:3642.35px;top:259.14px;font-size:17px;line-height:17px;color:#444;transform:scaleX(0.9200);">U</span>
<div style="left:3687.5px;top:257px;width:1px;height:22px;background:#bdbdbd;"></div>
<div style="left:3687.5px;top:279px;width:1px;height:745px;background:#d8d8d8;"></div>
<span class="t fs" style="left:3722.78px;top:259.14px;font-size:17px;line-height:17px;color:#444;transform:scaleX(0.9200);">V</span>
<div style="left:3767.5px;top:257px;width:1px;height:22px;background:#bdbdbd;"></div>
<div style="left:3767.5px;top:279px;width:1px;height:745px;background:#d8d8d8;"></div>
<span class="t fs" style="left:3793px;top:259.14px;font-size:17px;line-height:17px;color:#444;transform:scaleX(0.9349);clip-path:inset(0 20% 0 0);">W</span>
<div style="left:3813.9px;top:257px;width:1px;height:22px;background:#bdbdbd;"></div>
<div style="left:1953.5px;top:257px;width:1px;height:767px;background:#a6a6a6;"></div>
<div style="left:1921px;top:278.5px;width:1893px;height:1px;background:#a6a6a6;"></div>
<svg style="left:1935.6px;top:262px;" width="16" height="15" viewBox="0 0 16 15"><path d="M15.4 0v14.5H0z" fill="#b4b4b4"/></svg>
<div style="left:1954px;top:302.9px;width:1860.4px;height:1px;background:#d8d8d8;"></div>
<div style="left:1921px;top:302.9px;width:33px;height:1px;background:#bdbdbd;"></div>
<span class="t fs" style="left:1933.1px;top:284.04px;font-size:17px;line-height:17px;color:#444;transform:scaleX(0.9300);">1</span>
<div style="left:1954px;top:326.9px;width:1860.4px;height:1px;background:#d8d8d8;"></div>
<div style="left:1921px;top:326.9px;width:33px;height:1px;background:#bdbdbd;"></div>
<span class="t fs" style="left:1933.1px;top:308.04px;font-size:17px;line-height:17px;color:#444;transform:scaleX(0.9300);">2</span>
<div style="left:1954px;top:350.9px;width:1860.4px;height:1px;background:#d8d8d8;"></div>
<div style="left:1921px;top:350.9px;width:33px;height:1px;background:#bdbdbd;"></div>
<span class="t fs" style="left:1933.1px;top:332.04px;font-size:17px;line-height:17px;color:#444;transform:scaleX(0.9300);">3</span>
<div style="left:1954px;top:374.9px;width:1860.4px;height:1px;background:#d8d8d8;"></div>
<div style="left:1921px;top:374.9px;width:33px;height:1px;background:#bdbdbd;"></div>
<span class="t fs" style="left:1933.1px;top:356.04px;font-size:17px;line-height:17px;color:#444;transform:scaleX(0.9300);">4</span>
<div style="left:1954px;top:398.9px;width:1860.4px;height:1px;background:#d8d8d8;"></div>
<div style="left:1921px;top:398.9px;width:33px;height:1px;background:#bdbdbd;"></div>
<span class="t fs" style="left:1933.1px;top:380.04px;font-size:17px;line-height:17px;color:#444;transform:scaleX(0.9300);">5</span>
<div style="left:1954px;top:422.9px;width:1860.4px;height:1px;background:#d8d8d8;"></div>
<div style="left:1921px;top:422.9px;width:33px;height:1px;background:#bdbdbd;"></div>
<span class="t fs" style="left:1933.1px;top:404.04px;font-size:17px;line-height:17px;color:#444;transform:scaleX(0.9300);">6</span>
<div style="left:1954px;top:446.9px;width:1860.4px;height:1px;background:#d8d8d8;"></div>
<div style="left:1921px;top:446.9px;width:33px;height:1px;background:#bdbdbd;"></div>
<span class="t fs" style="left:1933.1px;top:428.04px;font-size:17px;line-height:17px;color:#444;transform:scaleX(0.9300);">7</span>
<div style="left:1954px;top:470.9px;width:1860.4px;height:1px;background:#d8d8d8;"></div>
<div style="left:1921px;top:470.9px;width:33px;height:1px;background:#bdbdbd;"></div>
<span class="t fs" style="left:1933.1px;top:452.04px;font-size:17px;line-height:17px;color:#444;transform:scaleX(0.9300);">8</span>
<div style="left:1954px;top:494.9px;width:1860.4px;height:1px;background:#d8d8d8;"></div>
<div style="left:1921px;top:494.9px;width:33px;height:1px;background:#bdbdbd;"></div>
<span class="t fs" style="left:1933.1px;top:476.04px;font-size:17px;line-height:17px;color:#444;transform:scaleX(0.9300);">9</span>
<div style="left:1954px;top:518.9px;width:1860.4px;height:1px;background:#d8d8d8;"></div>
<div style="left:1921px;top:518.9px;width:33px;height:1px;background:#bdbdbd;"></div>
<span class="t fs" style="left:1928.71px;top:500.04px;font-size:17px;line-height:17px;color:#444;transform:scaleX(0.9300);">10</span>
<div style="left:1954px;top:542.9px;width:1860.4px;height:1px;background:#d8d8d8;"></div>
<div style="left:1921px;top:542.9px;width:33px;height:1px;background:#bdbdbd;"></div>
<span class="t fs" style="left:1928.71px;top:524.04px;font-size:17px;line-height:17px;color:#444;transform:scaleX(0.9300);">11</span>
<div style="left:1954px;top:566.9px;width:1860.4px;height:1px;background:#d8d8d8;"></div>
<div style="left:1921px;top:566.9px;width:33px;height:1px;background:#bdbdbd;"></div>
<span class="t fs" style="left:1928.71px;top:548.04px;font-size:17px;line-height:17px;color:#444;transform:scaleX(0.9300);">12</span>
<div style="left:1954px;top:590.9px;width:1860.4px;height:1px;background:#d8d8d8;"></div>
<div style="left:1921px;top:590.9px;width:33px;height:1px;background:#bdbdbd;"></div>
<span class="t fs" style="left:1928.71px;top:572.04px;font-size:17px;line-height:17px;color:#444;transform:scaleX(0.9300);">13</span>
<div style="left:1954px;top:614.9px;width:1860.4px;height:1px;background:#d8d8d8;"></div>
<div style="left:1921px;top:614.9px;width:33px;height:1px;background:#bdbdbd;"></div>
<span class="t fs" style="left:1928.71px;top:596.04px;font-size:17px;line-height:17px;color:#444;transform:scaleX(0.9300);">14</span>
<div style="left:1954px;top:638.9px;width:1860.4px;height:1px;background:#d8d8d8;"></div>
<div style="left:1921px;top:638.9px;width:33px;height:1px;background:#bdbdbd;"></div>
<span class="t fs" style="left:1928.71px;top:620.04px;font-size:17px;line-height:17px;color:#444;transform:scaleX(0.9300);">15</span>
<div style="left:1954px;top:662.9px;width:1860.4px;height:1px;background:#d8d8d8;"></div>
<div style="left:1921px;top:662.9px;width:33px;height:1px;background:#bdbdbd;"></div>
<span class="t fs" style="left:1928.71px;top:644.04px;font-size:17px;line-height:17px;color:#444;transform:scaleX(0.9300);">16</span>
<div style="left:1954px;top:686.9px;width:1860.4px;height:1px;background:#d8d8d8;"></div>
<div style="left:1921px;top:686.9px;width:33px;height:1px;background:#bdbdbd;"></div>
<span class="t fs" style="left:1928.71px;top:668.04px;font-size:17px;line-height:17px;color:#444;transform:scaleX(0.9300);">17</span>
<div style="left:1954px;top:710.9px;width:1860.4px;height:1px;background:#d8d8d8;"></div>
<div style="left:1921px;top:710.9px;width:33px;height:1px;background:#bdbdbd;"></div>
<span class="t fs" style="left:1928.71px;top:692.04px;font-size:17px;line-height:17px;color:#444;transform:scaleX(0.9300);">18</span>
<div style="left:1954px;top:734.9px;width:1860.4px;height:1px;background:#d8d8d8;"></div>
<div style="left:1921px;top:734.9px;width:33px;height:1px;background:#bdbdbd;"></div>
<span class="t fs" style="left:1928.71px;top:716.04px;font-size:17px;line-height:17px;color:#444;transform:scaleX(0.9300);">19</span>
<div style="left:1954px;top:758.9px;width:1860.4px;height:1px;background:#d8d8d8;"></div>
<div style="left:1921px;top:758.9px;width:33px;height:1px;background:#bdbdbd;"></div>
<span class="t fs" style="left:1928.71px;top:740.04px;font-size:17px;line-height:17px;color:#444;transform:scaleX(0.9300);">20</span>
<div style="left:1954px;top:782.9px;width:1860.4px;height:1px;background:#d8d8d8;"></div>
<div style="left:1921px;top:782.9px;width:33px;height:1px;background:#bdbdbd;"></div>
<span class="t fs" style="left:1928.71px;top:764.04px;font-size:17px;line-height:17px;color:#444;transform:scaleX(0.9300);">21</span>
<div style="left:1954px;top:806.9px;width:1860.4px;height:1px;background:#d8d8d8;"></div>
<div style="left:1921px;top:806.9px;width:33px;height:1px;background:#bdbdbd;"></div>
<span class="t fs" style="left:1928.71px;top:788.04px;font-size:17px;line-height:17px;color:#444;transform:scaleX(0.9300);">22</span>
<div style="left:1954px;top:830.9px;width:1860.4px;height:1px;background:#d8d8d8;"></div>
<div style="left:1921px;top:830.9px;width:33px;height:1px;background:#bdbdbd;"></div>
<span class="t fs" style="left:1928.71px;top:812.04px;font-size:17px;line-height:17px;color:#444;transform:scaleX(0.9300);">23</span>
<div style="left:1954px;top:854.9px;width:1860.4px;height:1px;background:#d8d8d8;"></div>
<div style="left:1921px;top:854.9px;width:33px;height:1px;background:#bdbdbd;"></div>
<span class="t fs" style="left:1928.71px;top:836.04px;font-size:17px;line-height:17px;color:#444;transform:scaleX(0.9300);">24</span>
<div style="left:1954px;top:878.9px;width:1860.4px;height:1px;background:#d8d8d8;"></div>
<div style="left:1921px;top:878.9px;width:33px;height:1px;background:#bdbdbd;"></div>
<span class="t fs" style="left:1928.71px;top:860.04px;font-size:17px;line-height:17px;color:#444;transform:scaleX(0.9300);">25</span>
<div style="left:1954px;top:902.9px;width:1860.4px;height:1px;background:#d8d8d8;"></div>
<div style="left:1921px;top:902.9px;width:33px;height:1px;background:#bdbdbd;"></div>
<span class="t fs" style="left:1928.71px;top:884.04px;font-size:17px;line-height:17px;color:#444;transform:scaleX(0.9300);">26</span>
<div style="left:1954px;top:926.9px;width:1860.4px;height:1px;background:#d8d8d8;"></div>
<div style="left:1921px;top:926.9px;width:33px;height:1px;background:#bdbdbd;"></div>
<span class="t fs" style="left:1928.71px;top:908.04px;font-size:17px;line-height:17px;color:#444;transform:scaleX(0.9300);">27</span>
<div style="left:1954px;top:950.9px;width:1860.4px;height:1px;background:#d8d8d8;"></div>
<div style="left:1921px;top:950.9px;width:33px;height:1px;background:#bdbdbd;"></div>
<span class="t fs" style="left:1928.71px;top:932.04px;font-size:17px;line-height:17px;color:#444;transform:scaleX(0.9300);">28</span>
<div style="left:1954px;top:974.9px;width:1860.4px;height:1px;background:#d8d8d8;"></div>
<div style="left:1921px;top:974.9px;width:33px;height:1px;background:#bdbdbd;"></div>
<span class="t fs" style="left:1928.71px;top:956.04px;font-size:17px;line-height:17px;color:#444;transform:scaleX(0.9300);">29</span>
<div style="left:1954px;top:998.9px;width:1860.4px;height:1px;background:#d8d8d8;"></div>
<div style="left:1921px;top:998.9px;width:33px;height:1px;background:#bdbdbd;"></div>
<span class="t fs" style="left:1928.71px;top:980.04px;font-size:17px;line-height:17px;color:#444;transform:scaleX(0.9300);">30</span>
<div style="left:1954px;top:1022.9px;width:1860.4px;height:1px;background:#d8d8d8;"></div>
<div style="left:1921px;top:1022.9px;width:33px;height:1px;background:#bdbdbd;"></div>
<span class="t fs" style="left:1928.71px;top:1004.04px;font-size:17px;line-height:17px;color:#444;transform:scaleX(0.9300);">31</span>
<span class="t fs" style="left:2039.9px;top:357.03px;font-size:16.6px;line-height:16.6px;color:#1a1a1a;transform:scaleX(0.9640);">68056</span>
<span class="t fs" style="left:2106.65px;top:357.03px;font-size:16.6px;line-height:16.6px;color:#1a1a1a;transform:scaleX(0.9640);">354,047</span>
<span class="t fs" style="left:2031px;top:381.03px;font-size:16.6px;line-height:16.6px;color:#1a1a1a;transform:scaleX(0.9640);">141000</span>
<span class="t fs" style="left:2106.65px;top:381.03px;font-size:16.6px;line-height:16.6px;color:#1a1a1a;transform:scaleX(0.9640);">394,047</span>
<span class="t fs" style="left:2031px;top:405.03px;font-size:16.6px;line-height:16.6px;color:#1a1a1a;transform:scaleX(0.9640);">280872</span>
<span class="t fs" style="left:2106.65px;top:405.03px;font-size:16.6px;line-height:16.6px;color:#1a1a1a;transform:scaleX(0.9640);">504,093</span>
<span class="t fs" style="left:2031px;top:429.03px;font-size:16.6px;line-height:16.6px;color:#1a1a1a;transform:scaleX(0.9640);">752376</span>
<span class="t fs" style="left:2106.65px;top:429.03px;font-size:16.6px;line-height:16.6px;color:#1a1a1a;transform:scaleX(0.9640);">524,184</span>
<span class="t fs" style="left:2022.1px;top:453.03px;font-size:16.6px;line-height:16.6px;color:#1a1a1a;transform:scaleX(0.9640);">7700856</span>
<span class="t fs" style="left:2106.65px;top:453.03px;font-size:16.6px;line-height:16.6px;color:#1a1a1a;transform:scaleX(0.9640);">526,013</span>
<span class="t fs" style="left:2013.2px;top:477.03px;font-size:16.6px;line-height:16.6px;color:#1a1a1a;transform:scaleX(0.9640);">12632660</span>
<span class="t fs" style="left:2106.65px;top:477.03px;font-size:16.6px;line-height:16.6px;color:#1a1a1a;transform:scaleX(0.9640);">527,293</span>
<span class="t fs" style="left:2013.2px;top:501.03px;font-size:16.6px;line-height:16.6px;color:#1a1a1a;transform:scaleX(0.9640);">65953596</span>
<span class="t fs" style="left:2106.65px;top:501.03px;font-size:16.6px;line-height:16.6px;color:#1a1a1a;transform:scaleX(0.9640);">531,235</span>
<span class="t fs" style="left:2013.2px;top:525.03px;font-size:16.6px;line-height:16.6px;color:#1a1a1a;transform:scaleX(0.9640);">68755360</span>
<span class="t fs" style="left:2106.65px;top:525.03px;font-size:16.6px;line-height:16.6px;color:#1a1a1a;transform:scaleX(0.9640);">531,967</span>
<span class="t fs" style="left:2004.3px;top:549.03px;font-size:16.6px;line-height:16.6px;color:#1a1a1a;transform:scaleX(0.9640);">117198260</span>
<span class="t fs" style="left:2106.65px;top:549.03px;font-size:16.6px;line-height:16.6px;color:#1a1a1a;transform:scaleX(0.9640);">532,535</span>
<span class="t fs" style="left:2004.3px;top:573.03px;font-size:16.6px;line-height:16.6px;color:#1a1a1a;transform:scaleX(0.9640);">161980800</span>
<span class="t fs" style="left:2106.65px;top:573.03px;font-size:16.6px;line-height:16.6px;color:#1a1a1a;transform:scaleX(0.9640);">537,362</span>
<span class="t fs" style="left:2004.3px;top:597.03px;font-size:16.6px;line-height:16.6px;color:#1a1a1a;transform:scaleX(0.9640);">164080948</span>
<span class="t fs" style="left:2106.65px;top:597.03px;font-size:16.6px;line-height:16.6px;color:#1a1a1a;transform:scaleX(0.9640);">537,589</span>
<span class="t fs" style="left:2004.3px;top:621.03px;font-size:16.6px;line-height:16.6px;color:#1a1a1a;transform:scaleX(0.9640);">539140948</span>
<span class="t fs" style="left:2106.65px;top:621.03px;font-size:16.6px;line-height:16.6px;color:#1a1a1a;transform:scaleX(0.9640);">538,018</span>
<span class="t fs" style="left:2004.3px;top:645.03px;font-size:16.6px;line-height:16.6px;color:#1a1a1a;transform:scaleX(0.9640);">541240908</span>
<span class="t fs" style="left:2106.65px;top:645.03px;font-size:16.6px;line-height:16.6px;color:#1a1a1a;transform:scaleX(0.9640);">538,245</span>
<span class="t fs" style="left:2004.3px;top:669.03px;font-size:16.6px;line-height:16.6px;color:#1a1a1a;transform:scaleX(0.9640);">647080772</span>
<span class="t fs" style="left:2106.65px;top:669.03px;font-size:16.6px;line-height:16.6px;color:#1a1a1a;transform:scaleX(0.9640);">539,626</span>
<span class="t fs" style="left:2004.3px;top:693.03px;font-size:16.6px;line-height:16.6px;color:#1a1a1a;transform:scaleX(0.9640);">757800364</span>
<span class="t fs" style="left:2115.55px;top:693.03px;font-size:16.6px;line-height:16.6px;color:#1a1a1a;transform:scaleX(0.9640);">541,59</span>
<span class="t fs" style="left:2004.3px;top:717.03px;font-size:16.6px;line-height:16.6px;color:#1a1a1a;transform:scaleX(0.9640);">772507792</span>
<span class="t fs" style="left:2106.65px;top:717.03px;font-size:16.6px;line-height:16.6px;color:#1a1a1a;transform:scaleX(0.9640);">543,174</span>
<span class="t fs" style="left:2004.3px;top:741.03px;font-size:16.6px;line-height:16.6px;color:#1a1a1a;transform:scaleX(0.9640);">782300148</span>
<span class="t fs" style="left:2115.55px;top:741.03px;font-size:16.6px;line-height:16.6px;color:#1a1a1a;transform:scaleX(0.9640);">544,23</span>
<span class="t fs" style="left:2004.3px;top:765.03px;font-size:16.6px;line-height:16.6px;color:#1a1a1a;transform:scaleX(0.9640);">787200744</span>
<span class="t fs" style="left:2106.65px;top:765.03px;font-size:16.6px;line-height:16.6px;color:#1a1a1a;transform:scaleX(0.9640);">544,758</span>
<span class="t fs" style="left:2004.3px;top:789.03px;font-size:16.6px;line-height:16.6px;color:#1a1a1a;transform:scaleX(0.9640);">973680200</span>
<span class="t fs" style="left:2106.65px;top:789.03px;font-size:16.6px;line-height:16.6px;color:#1a1a1a;transform:scaleX(0.9640);">544,859</span>
<span class="t fs" style="left:1995.4px;top:813.03px;font-size:16.6px;line-height:16.6px;color:#1a1a1a;transform:scaleX(0.9640);">1624960328</span>
<span class="t fs" style="left:2106.65px;top:813.03px;font-size:16.6px;line-height:16.6px;color:#1a1a1a;transform:scaleX(0.9640);">545,038</span>
<span class="t fs" style="left:1995.4px;top:837.03px;font-size:16.6px;line-height:16.6px;color:#1a1a1a;transform:scaleX(0.9640);">2274140308</span>
<span class="t fs" style="left:2106.65px;top:837.03px;font-size:16.6px;line-height:16.6px;color:#1a1a1a;transform:scaleX(0.9640);">545,043</span>
<span class="t fs" style="left:1995.4px;top:861.03px;font-size:16.6px;line-height:16.6px;color:#1a1a1a;transform:scaleX(0.9640);">2424759704</span>
<span class="t fs" style="left:2106.65px;top:861.03px;font-size:16.6px;line-height:16.6px;color:#1a1a1a;transform:scaleX(0.9640);">551,253</span>
<span class="t fs" style="left:1995.4px;top:885.03px;font-size:16.6px;line-height:16.6px;color:#1a1a1a;transform:scaleX(0.9640);">3259719592</span>
<span class="t fs" style="left:2106.65px;top:885.03px;font-size:16.6px;line-height:16.6px;color:#1a1a1a;transform:scaleX(0.9640);">551,285</span>
<span class="t fs" style="left:1995.4px;top:909.03px;font-size:16.6px;line-height:16.6px;color:#1a1a1a;transform:scaleX(0.9640);">4140159124</span>
<span class="t fs" style="left:2106.65px;top:909.03px;font-size:16.6px;line-height:16.6px;color:#1a1a1a;transform:scaleX(0.9640);">556,166</span>
<span class="t fs" style="left:1995.4px;top:933.03px;font-size:16.6px;line-height:16.6px;color:#1a1a1a;transform:scaleX(0.9640);">4240399220</span>
<span class="t fs" style="left:2106.65px;top:933.03px;font-size:16.6px;line-height:16.6px;color:#1a1a1a;transform:scaleX(0.9640);">556,998</span>
<span class="t fs" style="left:1995.4px;top:957.03px;font-size:16.6px;line-height:16.6px;color:#1a1a1a;transform:scaleX(0.9640);">4333639136</span>
<span class="t fs" style="left:2106.65px;top:957.03px;font-size:16.6px;line-height:16.6px;color:#1a1a1a;transform:scaleX(0.9640);">557,022</span>
<span class="t fs" style="left:1995.4px;top:981.03px;font-size:16.6px;line-height:16.6px;color:#1a1a1a;transform:scaleX(0.9640);">4982819116</span>
<span class="t fs" style="left:2106.65px;top:981.03px;font-size:16.6px;line-height:16.6px;color:#1a1a1a;transform:scaleX(0.9640);">557,027</span>
<span class="t fs" style="left:1995.4px;top:1005.03px;font-size:16.6px;line-height:16.6px;color:#1a1a1a;transform:scaleX(0.9640);">5634099244</span>
<span class="t fs" style="left:2106.65px;top:1005.03px;font-size:16.6px;line-height:16.6px;color:#1a1a1a;transform:scaleX(0.9640);">557,206</span>
<span class="t fs" style="left:1958.4px;top:333.03px;font-size:16.6px;line-height:16.6px;color:#1a1a1a;transform:scaleX(1.0493);">offset</span>
<div style="left:2167px;top:328.4px;width:2px;height:22px;background:#fff;"></div>
<span class="t fs" style="left:2092.6px;top:333.03px;font-size:16.6px;line-height:16.6px;color:#1a1a1a;transform:scaleX(0.9074);">max PCR-PTS delta</span>
<div style="left:2211.5px;top:375px;width:1463px;height:534.5px;background:#fff;border:1px solid #d9d9d9;"></div>
<span class="t fs" style="left:2856px;top:391.24px;font-size:22px;line-height:22px;color:#595959;transform:scaleX(0.8785);">max PCR-PTS delta</span>
<div style="left:2258.4px;top:435.5px;width:1355.1px;height:1px;background:#d9d9d9;"></div>
<span class="t fs" style="left:2222.01px;top:429.08px;font-size:14px;line-height:14px;color:#595959;transform:scaleX(0.9500);">800</span>
<div style="left:2258.4px;top:489.73px;width:1355.1px;height:1px;background:#d9d9d9;"></div>
<span class="t fs" style="left:2222.01px;top:483.31px;font-size:14px;line-height:14px;color:#595959;transform:scaleX(0.9500);">700</span>
<div style="left:2258.4px;top:543.95px;width:1355.1px;height:1px;background:#d9d9d9;"></div>
<span class="t fs" style="left:2222.01px;top:537.53px;font-size:14px;line-height:14px;color:#595959;transform:scaleX(0.9500);">600</span>
<div style="left:2258.4px;top:598.17px;width:1355.1px;height:1px;background:#d9d9d9;"></div>
<span class="t fs" style="left:2222.01px;top:591.75px;font-size:14px;line-height:14px;color:#595959;transform:scaleX(0.9500);">500</span>
<div style="left:2258.4px;top:652.4px;width:1355.1px;height:1px;background:#d9d9d9;"></div>
<span class="t fs" style="left:2222.01px;top:645.98px;font-size:14px;line-height:14px;color:#595959;transform:scaleX(0.9500);">400</span>
<div style="left:2258.4px;top:706.62px;width:1355.1px;height:1px;background:#d9d9d9;"></div>
<span class="t fs" style="left:2222.01px;top:700.2px;font-size:14px;line-height:14px;color:#595959;transform:scaleX(0.9500);">300</span>
<div style="left:2258.4px;top:760.85px;width:1355.1px;height:1px;background:#d9d9d9;"></div>
<span class="t fs" style="left:2222.01px;top:754.43px;font-size:14px;line-height:14px;color:#595959;transform:scaleX(0.9500);">200</span>
<div style="left:2258.4px;top:815.07px;width:1355.1px;height:1px;background:#d9d9d9;"></div>
<span class="t fs" style="left:2222.01px;top:808.65px;font-size:14px;line-height:14px;color:#595959;transform:scaleX(0.9500);">100</span>
<div style="left:2258.4px;top:869.3px;width:1355.1px;height:1px;background:#bfbfbf;"></div>
<span class="t fs" style="left:2236.8px;top:862.88px;font-size:14px;line-height:14px;color:#595959;transform:scaleX(0.9500);">0</span>
<div style="left:2257.9px;top:436px;width:1px;height:433.8px;background:#bfbfbf;"></div>
<span class="t fs" style="left:2254.7px;top:882.18px;font-size:14px;line-height:14px;color:#595959;transform:scaleX(0.9500);">0</span>
<div style="left:2408.47px;top:436px;width:1px;height:433.8px;background:#d9d9d9;"></div>
<span class="t fs" style="left:2389.55px;top:882.18px;font-size:14px;line-height:14px;color:#595959;transform:scaleX(0.9500);">5E+09</span>
<div style="left:2559.03px;top:436px;width:1px;height:433.8px;background:#d9d9d9;"></div>
<span class="t fs" style="left:2540.12px;top:882.18px;font-size:14px;line-height:14px;color:#595959;transform:scaleX(0.9500);">1E+10</span>
<div style="left:2709.6px;top:436px;width:1px;height:433.8px;background:#d9d9d9;"></div>
<span class="t fs" style="left:2685.14px;top:882.18px;font-size:14px;line-height:14px;color:#595959;transform:scaleX(0.9500);">1,5E+10</span>
<div style="left:2860.17px;top:436px;width:1px;height:433.8px;background:#d9d9d9;"></div>
<span class="t fs" style="left:2841.25px;top:882.18px;font-size:14px;line-height:14px;color:#595959;transform:scaleX(0.9500);">2E+10</span>
<div style="left:3010.73px;top:436px;width:1px;height:433.8px;background:#d9d9d9;"></div>
<span class="t fs" style="left:2986.27px;top:882.18px;font-size:14px;line-height:14px;color:#595959;transform:scaleX(0.9500);">2,5E+10</span>
<div style="left:3161.3px;top:436px;width:1px;height:433.8px;background:#d9d9d9;"></div>
<span class="t fs" style="left:3142.39px;top:882.18px;font-size:14px;line-height:14px;color:#595959;transform:scaleX(0.9500);">3E+10</span>
<div style="left:3311.87px;top:436px;width:1px;height:433.8px;background:#d9d9d9;"></div>
<span class="t fs" style="left:3287.41px;top:882.18px;font-size:14px;line-height:14px;color:#595959;transform:scaleX(0.9500);">3,5E+10</span>
<div style="left:3462.43px;top:436px;width:1px;height:433.8px;background:#d9d9d9;"></div>
<span class="t fs" style="left:3443.52px;top:882.18px;font-size:14px;line-height:14px;color:#595959;transform:scaleX(0.9500);">4E+10</span>
<div style="left:3613px;top:436px;width:1px;height:433.8px;background:#d9d9d9;"></div>
<span class="t fs" style="left:3588.54px;top:882.18px;font-size:14px;line-height:14px;color:#595959;transform:scaleX(0.9500);">4,5E+10</span>
<svg style="left:2200px;top:400px;" width="1500" height="500" viewBox="0 0 1500 500"><g fill="#4472c4"><circle cx="58.0" cy="277.9" r="4.3"/><circle cx="58.0" cy="255.9" r="4.3"/><circle cx="58.0" cy="195.9" r="4.3"/><circle cx="58.0" cy="184.7" r="4.3"/><circle cx="59.9" cy="181.7" r="4.3"/><circle cx="61.7" cy="179.1" r="4.3"/><circle cx="63.6" cy="177.6" r="4.3"/><circle cx="74.0" cy="177.3" r="4.3"/><circle cx="77.0" cy="176.5" r="4.3"/><circle cx="79.6" cy="175.4" r="4.3"/><circle cx="82.2" cy="174.3" r="4.3"/><circle cx="87.1" cy="173.9" r="4.3"/><circle cx="106.8" cy="173.9" r="4.3"/><circle cx="127.0" cy="173.5" r="4.3"/><circle cx="131.1" cy="170.9" r="4.3"/><circle cx="156.0" cy="170.6" r="4.3"/><circle cx="183.2" cy="167.6" r="4.3"/><circle cx="185.8" cy="167.6" r="4.3"/><circle cx="188.8" cy="167.6" r="4.3"/><circle cx="207.8" cy="167.6" r="4.3"/><circle cx="227.6" cy="167.6" r="4.3"/><circle cx="234.3" cy="165.0" r="4.3"/><circle cx="237.3" cy="165.0" r="4.3"/><circle cx="257.0" cy="165.0" r="4.3"/><circle cx="276.8" cy="165.0" r="4.3"/><circle cx="289.8" cy="160.9" r="4.3"/><circle cx="347.6" cy="160.5" r="4.3"/><circle cx="350.6" cy="159.8" r="4.3"/><circle cx="353.5" cy="159.0" r="4.3"/><circle cx="358.0" cy="157.9" r="4.3"/><circle cx="377.8" cy="157.5" r="4.3"/><circle cx="393.0" cy="155.7" r="4.3"/><circle cx="403.1" cy="155.3" r="4.3"/><circle cx="407.6" cy="154.9" r="4.3"/><circle cx="443.7" cy="153.8" r="4.3"/><circle cx="449.7" cy="153.4" r="4.3"/><circle cx="454.2" cy="153.0" r="4.3"/><circle cx="459.0" cy="152.3" r="4.3"/><circle cx="495.9" cy="150.4" r="4.3"/><circle cx="499.6" cy="149.7" r="4.3"/><circle cx="503.4" cy="149.3" r="4.3"/><circle cx="507.5" cy="148.6" r="4.3"/><circle cx="528.0" cy="148.6" r="4.3"/><circle cx="548.1" cy="147.5" r="4.3"/><circle cx="551.8" cy="145.2" r="4.3"/><circle cx="576.8" cy="144.8" r="4.3"/><circle cx="596.9" cy="144.5" r="4.3"/><circle cx="603.2" cy="143.7" r="4.3"/><circle cx="609.9" cy="142.2" r="4.3"/><circle cx="628.6" cy="142.2" r="4.3"/><circle cx="648.7" cy="141.9" r="4.3"/><circle cx="659.1" cy="140.7" r="4.3"/><circle cx="709.1" cy="135.9" r="4.3"/><circle cx="729.6" cy="135.9" r="4.3"/><circle cx="749.7" cy="135.9" r="4.3"/><circle cx="759.0" cy="132.9" r="4.3"/><circle cx="778.8" cy="132.9" r="4.3"/><circle cx="798.9" cy="132.9" r="4.3"/><circle cx="808.9" cy="128.8" r="4.3"/><circle cx="865.2" cy="127.7" r="4.3"/><circle cx="870.1" cy="127.0" r="4.3"/><circle cx="874.5" cy="126.6" r="4.3"/><circle cx="879.8" cy="125.8" r="4.3"/><circle cx="899.9" cy="125.8" r="4.3"/><circle cx="917.4" cy="125.8" r="4.3"/><circle cx="922.2" cy="124.7" r="4.3"/><circle cx="927.8" cy="123.2" r="4.3"/><circle cx="937.5" cy="123.2" r="4.3"/><circle cx="952.1" cy="123.2" r="4.3"/><circle cx="968.8" cy="121.7" r="4.3"/><circle cx="974.4" cy="120.6" r="4.3"/><circle cx="981.1" cy="119.5" r="4.3"/><circle cx="1019.1" cy="117.6" r="4.3"/><circle cx="1024.7" cy="116.9" r="4.3"/><circle cx="1029.6" cy="116.5" r="4.3"/><circle cx="1049.7" cy="116.5" r="4.3"/><circle cx="1070.2" cy="115.8" r="4.3"/><circle cx="1075.0" cy="114.7" r="4.3"/><circle cx="1079.5" cy="113.5" r="4.3"/><circle cx="1122.7" cy="111.3" r="4.3"/><circle cx="1127.2" cy="110.2" r="4.3"/><circle cx="1131.7" cy="109.4" r="4.3"/><circle cx="1176.8" cy="107.6" r="4.3"/><circle cx="1181.2" cy="107.2" r="4.3"/><circle cx="1199.9" cy="106.8" r="4.3"/><circle cx="1219.6" cy="106.8" r="4.3"/><circle cx="1228.6" cy="105.3" r="4.3"/><circle cx="1233.4" cy="103.9" r="4.3"/><circle cx="1280.0" cy="104.2" r="4.3"/><circle cx="1282.6" cy="100.5" r="4.3"/><circle cx="1299.8" cy="100.9" r="4.3"/><circle cx="1321.0" cy="100.9" r="4.3"/></g></svg>
<div style="left:3814.4px;top:256.4px;width:24.6px;height:768.5px;background:#e0e0e0;"></div>
<div style="left:3817px;top:258.3px;width:19px;height:19px;background:#fff;border:1px solid #ababab;"></div>
<svg style="left:3822.5px;top:264.5px;" width="9" height="6" viewBox="0 0 9 6"><path d="M0 6h9L4.5 0z" fill="#777"/></svg>
<div style="left:3817px;top:277.3px;width:19px;height:132px;background:#fff;border:1px solid #ababab;"></div>
<div style="left:3817px;top:1007.5px;width:19px;height:18.5px;background:#fff;border:1px solid #ababab;"></div>
<svg style="left:3822.5px;top:1014px;" width="9" height="6" viewBox="0 0 9 6"><path d="M0 0h9L4.5 6z" fill="#777"/></svg>
<div style="left:3839px;top:44px;width:1px;height:1038px;background:#f3f3f3;"></div>
<div style="left:1921px;top:1024.5px;width:1919px;height:30px;background:#e6e6e6;"></div>
<div style="left:1921px;top:1024.5px;width:1893px;height:1.2px;background:#9e9e9e;"></div>
<svg style="left:1948px;top:1034.5px;" width="7" height="10" viewBox="0 0 7 10"><path d="M7 0v10L0 5z" fill="#c9c9c9"/></svg>
<svg style="left:1977px;top:1034.5px;" width="7" height="10" viewBox="0 0 7 10"><path d="M0 0v10l7-5z" fill="#c9c9c9"/></svg>
<div style="left:2024.7px;top:1028px;width:1px;height:24px;background:#ababab;"></div>
<span class="t fs" style="left:2038.5px;top:1027.56px;font-size:18px;line-height:18px;color:#444;transform:scaleX(0.9414);">big.ts</span>
<div style="left:2094.4px;top:1024.5px;width:113.3px;height:27.5px;background:#fff;"></div>
<div style="left:2094.4px;top:1050px;width:113.3px;height:2.4px;background:#1e7145;"></div>
<span class="t fs" style="left:2106.4px;top:1027.56px;font-size:18px;line-height:18px;color:#1e7145;font-weight:bold;transform:scaleX(0.9392);">remuxed.ts</span>
<svg style="left:2241px;top:1029.5px;" width="20" height="20" viewBox="0 0 20 20"><circle cx="10" cy="10" r="9" fill="none" stroke="#666" stroke-width="1.3"/><path d="M10 5v10M5 10h10" stroke="#666" stroke-width="1.4"/></svg>
<div style="left:3069.5px;top:1033px;width:2.2px;height:2.4px;background:#a0a0a0;"></div>
<div style="left:3069.5px;top:1037.7px;width:2.2px;height:2.4px;background:#a0a0a0;"></div>
<div style="left:3069.5px;top:1042.4px;width:2.2px;height:2.4px;background:#a0a0a0;"></div>
<div style="left:3087.2px;top:1030.5px;width:18.3px;height:18px;background:#fff;border:1px solid #ababab;"></div>
<svg style="left:3093px;top:1034.5px;" width="6" height="9" viewBox="0 0 6 9"><path d="M6 0v9L0 4.5z" fill="#666"/></svg>
<div style="left:3105.5px;top:1030.5px;width:659.3px;height:18px;background:#fff;border:1px solid #ababab;"></div>
<div style="left:3764.8px;top:1031px;width:30.6px;height:17px;background:#dedede;"></div>
<div style="left:3795.4px;top:1030.5px;width:18.3px;height:18px;background:#fff;border:1px solid #ababab;"></div>
<svg style="left:3801.5px;top:1034.5px;" width="6" height="9" viewBox="0 0 6 9"><path d="M0 0v9l6-4.5z" fill="#666"/></svg>
<div style="left:1921px;top:1054.3px;width:1919px;height:27px;background:#f3f3f3;"></div>
<div style="left:1921px;top:1054.3px;width:1919px;height:1px;background:#d0d0d0;"></div>
<span class="t fs" style="left:1930px;top:1061.54px;font-size:14.5px;line-height:14.5px;color:#444;transform:scaleX(0.8541);">Ready</span>
<svg style="left:1991px;top:1061px;" width="18" height="15" viewBox="0 0 18 15"><rect x=".7" y="2.7" width="16.6" height="11.6" fill="none" stroke="#555" stroke-width="1.3"/><path d="M.7.7h16.6" stroke="#555" stroke-width="1.3"/><circle cx="10.5" cy="8.8" r="3.2" fill="none" stroke="#555" stroke-width="1.3"/><circle cx="10.5" cy="8.8" r="1" fill="#555"/><path d="M3 6h3M3 9h3" stroke="#555"/></svg>
<svg style="left:2030px;top:1059px;" width="19" height="19" viewBox="0 0 19 19"><circle cx="9" cy="2.8" r="2" fill="none" stroke="#555" stroke-width="1.2"/><path d="M1 6.5c5 1.5 11 1.5 16 0M6.5 7.5v5L3.5 18M11.5 7.5v5l3 5.5" fill="none" stroke="#555" stroke-width="1.3"/><path d="M11 11l7 7M18 11l-7 7" stroke="#555" stroke-width="1.2"/></svg>
<span class="t fs" style="left:2053px;top:1061.54px;font-size:14.5px;line-height:14.5px;color:#444;transform:scaleX(0.8756);">Accessibility: Investigate</span>
<span class="t fs" style="left:3083.9px;top:1061.54px;font-size:14.5px;line-height:14.5px;color:#444;transform:scaleX(0.8722);">Average: 20204349081</span>
<span class="t fs" style="left:3236.3px;top:1061.54px;font-size:14.5px;line-height:14.5px;color:#444;transform:scaleX(0.8669);">Count: 167</span>
<span class="t fs" style="left:3318px;top:1061.54px;font-size:14.5px;line-height:14.5px;color:#444;transform:scaleX(0.8591);">Sum: 3,35392E+12</span>
<div style="left:3449px;top:1055px;width:49.7px;height:26px;background:#c6c6c6;"></div>
<svg style="left:3465px;top:1060.5px;" width="17" height="15" viewBox="0 0 17 15"><rect x=".7" y=".7" width="15.6" height="13.6" fill="none" stroke="#444" stroke-width="1.4"/><path d="M.7 5h15.6M.7 9.7h15.6M6 .7v13.6M11 .7v13.6" stroke="#444" stroke-width="1.3"/></svg>
<svg style="left:3515.5px;top:1060.5px;" width="17" height="15" viewBox="0 0 17 15"><rect x=".7" y=".7" width="15.6" height="13.6" fill="none" stroke="#444" stroke-width="1.4"/><rect x="4" y="3.7" width="9" height="7.6" fill="none" stroke="#444" stroke-width="1.3"/><path d="M6 6.3h5M6 8.7h5" stroke="#444"/></svg>
<svg style="left:3565.5px;top:1060.5px;" width="17" height="15" viewBox="0 0 17 15"><rect x=".7" y=".7" width="15.6" height="13.6" fill="none" stroke="#444" stroke-width="1.4"/><path d="M5.5.7v7.6h6V.7M.7 8.3h15.6" fill="none" stroke="#444" stroke-width="1.3"/></svg>
<div style="left:3606.5px;top:1068px;width:9px;height:1.3px;background:#555;"></div>
<div style="left:3621.7px;top:1068px;width:125px;height:1.3px;background:#777;"></div>
<div style="left:3683px;top:1061.5px;width:4.5px;height:14px;background:#555;"></div>
<div style="left:3753px;top:1068px;width:9.5px;height:1.3px;background:#555;"></div>
<div style="left:3757.2px;top:1063.5px;width:1.3px;height:9.5px;background:#555;"></div>
<span class="t fs" style="left:3779.4px;top:1061.54px;font-size:14.5px;line-height:14.5px;color:#444;transform:scaleX(0.8416);">100 %</span>
<div style="left:1920px;top:1081px;width:1920px;height:1px;background:#007acc;"></div>
<div style="left:0px;top:1041px;width:1919px;height:1042px;background:#ffffff;"></div>
<div style="left:0px;top:1041px;width:1px;height:1042px;background:#3a3a3a;"></div>
<div style="left:1919px;top:1041px;width:1px;height:41px;background:#1c1c5c;"></div>
<div style="left:1px;top:1041px;width:1918px;height:54px;background:#9b9997;"></div>
<svg style="left:3px;top:1052px;" width="316" height="43" viewBox="0 0 316 43"><path d="M0 43c5 0 8-3 8-8V10c0-5.500 4.500-10 10-10h280.500c5.500 0 10 4.500 10 10v25c0 5 3 8 8 8z" fill="#fff"/></svg>
<div style="left:25.7px;top:1063.5px;width:20.5px;height:20.5px;background:#2f6fb5;border-radius:2px;"></div>
<span class="t fs" style="left:28px;top:1069.22px;font-size:11px;line-height:11px;color:#fff;font-weight:bold;transform:scaleX(0.9231);">ВФ</span>
<span class="t fs" style="left:56px;top:1066.58px;font-size:16.5px;line-height:16.5px;color:#6b6b6b;transform:scaleX(0.9085);-webkit-mask-image:linear-gradient(90deg,#000 88%,transparent 100%);">Обсуждение мониторов и выбо</span>
<svg style="left:285px;top:1068.5px;" width="11" height="11" viewBox="0 0 11 11"><path d="M.8.8l9.400 9.400M10.200.8L.8 10.200" stroke="#555" stroke-width="1.6"/></svg>
<svg style="left:331px;top:1067px;" width="15" height="15" viewBox="0 0 15 15"><path d="M7.5 0v15M0 7.5h15" stroke="#333" stroke-width="2"/></svg>
<svg style="left:1712.8px;top:1056px;" width="14" height="9" viewBox="0 0 14 9"><path d="M1 1l6 6.5L13 1" stroke="#6a6a6a" stroke-width="1.1" fill="none"/></svg>
<svg style="left:1769.07px;top:1059.5px;" width="13" height="2" viewBox="0 0 13 2"><path d="M0 1h13" stroke="#6a6a6a" stroke-width="1.1"/></svg>
<svg style="left:1827.21px;top:1054px;" width="13" height="13" viewBox="0 0 13 13"><rect x=".6" y=".6" width="11.800" height="11.800" fill="none" stroke="#6a6a6a" stroke-width="1.1"/></svg>
<svg style="left:1884.6px;top:1054px;" width="13" height="13" viewBox="0 0 13 13"><path d="M0 0l13 13M13 0L0 13" stroke="#6a6a6a" stroke-width="1.1"/></svg>
<div style="left:1px;top:1094.5px;width:1918px;height:44.5px;background:#fff;"></div>
<div style="left:136.4px;top:1100px;width:1448.2px;height:35px;background:#f1f3f4;border-radius:17.5px;"></div>
<svg style="left:20px;top:1110px;" width="17" height="16" viewBox="0 0 17 16"><path d="M16.500 8H2M8.500 1L1.500 8l7 7" fill="none" stroke="#4a4a4a" stroke-width="1.9"/></svg>
<svg style="left:60px;top:1110px;" width="17" height="16" viewBox="0 0 17 16"><path d="M.5 8H15M8.500 1l7 7-7 7" fill="none" stroke="#c2c2c2" stroke-width="1.9"/></svg>
<svg style="left:100px;top:1109px;" width="18" height="18" viewBox="0 0 18 18"><path d="M15.500 9a6.700 6.700 0 1 1-2-4.800" fill="none" stroke="#4a4a4a" stroke-width="1.9"/><path d="M16.500 1v6.500H10z" fill="#4a4a4a"/></svg>
<svg style="left:153px;top:1110.5px;" width="11" height="14" viewBox="0 0 11 14"><rect x=".5" y="5.500" width="10" height="8" rx="1" fill="#5f6368"/><path d="M2.700 6V4a2.800 2.800 0 0 1 5.600 0v2" fill="none" stroke="#5f6368" stroke-width="1.500"/></svg>
<span class="t fs" style="left:179px;top:1109.9px;font-size:17.5px;line-height:17.5px;color:#70757a;transform:scaleX(1.0218);">https://</span>
<span class="t fs" style="left:232.67px;top:1109.9px;font-size:17.5px;line-height:17.5px;color:#202124;transform:scaleX(1.0218);">www.forum-volgograd.ru</span>
<span class="t fs" style="left:427.46px;top:1109.9px;font-size:17.5px;line-height:17.5px;color:#70757a;transform:scaleX(1.0218);">/threads/341551/#post-6868553</span>
<svg style="left:1474.29px;top:1109px;" width="17" height="17" viewBox="0 0 17 17"><circle cx="7" cy="7" r="5.600" fill="none" stroke="#5f6368" stroke-width="1.700"/><path d="M11 11l5 5M4.300 7h5.400" stroke="#5f6368" stroke-width="1.700"/></svg>
<svg style="left:1513.42px;top:1108.5px;" width="19" height="18" viewBox="0 0 19 18"><path d="M1.500 7v9.500h14V12" fill="none" stroke="#5f6368" stroke-width="1.600"/><path d="M5.500 12.500c.5-4 3.500-6.500 8-6.500V2.500L18 7.500l-4.500 5V9c-3.500 0-6 1-8 3.500z" fill="none" stroke="#5f6368" stroke-width="1.500"/></svg>
<svg style="left:1553.29px;top:1108.5px;" width="19" height="18" viewBox="0 0 19 18"><path d="M9.500 1.500l2.400 5.300 5.800.6-4.300 3.900 1.200 5.700-5.100-2.900-5.100 2.900 1.200-5.700L1.300 7.400l5.800-.6z" fill="none" stroke="#5f6368" stroke-width="1.600" stroke-linejoin="round"/></svg>
<svg style="left:1603.98px;top:1109px;" width="19" height="18" viewBox="0 0 19 18"><rect x="0" y="0" width="19" height="17" rx="4" fill="#4a4a4a"/><path d="M8 4.500a4 4 0 1 0 0 8M11 4.500v8h2" fill="none" stroke="#e8e8e8" stroke-width="1.600"/><path d="M13 9l5 3-5 3z" fill="#fff" stroke="#4a4a4a" stroke-width=".8"/></svg>
<svg style="left:1643.85px;top:1107px;" width="21" height="21" viewBox="0 0 21 21"><circle cx="9" cy="7" r="5.500" fill="#c0561f"/><circle cx="9" cy="7.500" r="2.800" fill="#f0c090"/><path d="M3 13c3 3 9 3 12 0l1 5H2z" fill="#d8d8e0"/><path d="M12 17l7-8 1.500 1.500-7 8-2.500.500z" fill="#e8b020" stroke="#8a6a10" stroke-width=".6"/></svg>
<svg style="left:1682.98px;top:1108px;" width="20" height="20" viewBox="0 0 20 20"><circle cx="9.500" cy="9.500" r="8.300" fill="#fff" stroke="#24273a" stroke-width="2"/><path d="M13.500 6.500a5 5 0 1 0 1 4.500h-4.500" fill="none" stroke="#3a6ee8" stroke-width="1.800"/><rect x="14" y="14" width="5" height="5" fill="#e0a030"/></svg>
<svg style="left:1722.11px;top:1106.5px;" width="21" height="23" viewBox="0 0 21 23"><path d="M10.500 1l9.500 3.500c0 9-3.500 15-9.500 18C4.500 19.500 1 13.500 1 4.500z" fill="#e84a1a"/><path d="M7.500 6.500l8 5-8 5z" fill="#fff"/></svg>
<svg style="left:1763.11px;top:1108px;" width="19" height="19" viewBox="0 0 19 19"><path d="M7 3a2.200 2.200 0 0 1 4.400 0v1.500H15a1 1 0 0 1 1 1V9h1.500a2.200 2.200 0 0 1 0 4.400H16V17a1 1 0 0 1-1 1h-3.500v-1.500a2.200 2.200 0 0 0-4.400 0V18H3.500a1 1 0 0 1-1-1v-3.600H4a2.200 2.200 0 0 0 0-4.400H2.500V5.500a1 1 0 0 1 1-1H7z" fill="#4a4a4a"/></svg>
<svg style="left:1802.98px;top:1109px;" width="18" height="17" viewBox="0 0 18 17"><rect x="1" y="1" width="16" height="15" rx="1.500" fill="none" stroke="#4a4a4a" stroke-width="2"/><rect x="10" y="1" width="7" height="15" fill="#4a4a4a"/></svg>
<svg style="left:1838.76px;top:1103.5px;" width="28" height="28" viewBox="0 0 28 28"><defs><clipPath id="avc"><circle cx="14" cy="14" r="13.800"/></clipPath></defs><g clip-path="url(#avc)"><rect width="28" height="28" fill="#b9b4ac"/><rect y="0" width="28" height="10" fill="#d9d6cf"/><rect y="15" width="28" height="6" fill="#5a4a3a"/><rect y="21" width="28" height="7" fill="#2a2622"/><rect x="8" y="10" width="12" height="6" fill="#e8e0c8"/></g></svg>
<div style="left:1889.44px;top:1110.5px;width:4px;height:4px;background:#5f6368;border-radius:2px;"></div>
<div style="left:1889.44px;top:1116.8px;width:4px;height:4px;background:#5f6368;border-radius:2px;"></div>
<div style="left:1889.44px;top:1123.1px;width:4px;height:4px;background:#5f6368;border-radius:2px;"></div>
<div style="left:1px;top:1139px;width:1918px;height:40.5px;background:#fff;"></div>
<div style="left:1px;top:1179.3px;width:1918px;height:1px;background:#dcdcdc;"></div>
<svg style="left:20px;top:1147.8px;" width="17" height="20" viewBox="0 0 17 20"><path d="M1 1.5h13v17H1z" fill="#f6d88a"/><path d="M1 1.5h2.5v17H1z" fill="#f0c860"/><path d="M12 13h4v5.5h-4z" fill="#f0c860"/></svg>
<span class="t fs" style="left:49px;top:1150.86px;font-size:15.5px;line-height:15.5px;color:#55585c;transform:scaleX(0.9509);">кабинеты</span>
<svg style="left:136px;top:1147.8px;" width="17" height="20" viewBox="0 0 17 20"><path d="M1 1.5h13v17H1z" fill="#f6d88a"/><path d="M1 1.5h2.5v17H1z" fill="#f0c860"/><path d="M12 13h4v5.5h-4z" fill="#f0c860"/></svg>
<span class="t fs" style="left:165px;top:1150.86px;font-size:15.5px;line-height:15.5px;color:#55585c;transform:scaleX(0.9126);">МС</span>
<svg style="left:211px;top:1147.8px;" width="17" height="20" viewBox="0 0 17 20"><path d="M1 1.5h13v17H1z" fill="#f6d88a"/><path d="M1 1.5h2.5v17H1z" fill="#f0c860"/><path d="M12 13h4v5.5h-4z" fill="#f0c860"/></svg>
<span class="t fs" style="left:238.5px;top:1150.86px;font-size:15.5px;line-height:15.5px;color:#55585c;transform:scaleX(0.9056);">NB</span>
<svg style="left:279px;top:1147.8px;" width="20" height="20" viewBox="0 0 20 20"><circle cx="10" cy="10" r="10" fill="#d8eef8"/><path d="M1 9a9 8 0 0 1 18 0c-3-1.500-6-1.500-9 0-3-1.500-6-1.500-9 0z" fill="#e85a2a"/><path d="M10 9v7c0 1.500-2 1.500-2 0" fill="none" stroke="#333" stroke-width="1.400"/></svg>
<span class="t fs" style="left:309px;top:1150.86px;font-size:15.5px;line-height:15.5px;color:#55585c;transform:scaleX(0.9601);">погода</span>
<svg style="left:381px;top:1147.8px;" width="20" height="20" viewBox="0 0 20 20"><rect width="20" height="20" fill="#2a2a2a"/><text x="1.500" y="15.500" font-size="12" font-weight="bold" font-family="Liberation Sans" fill="#fff">Inv</text><path d="M13 5l3-3 2 2" stroke="#f0a030" stroke-width="1.600" fill="none"/></svg>
<span class="t fs" style="left:411px;top:1150.86px;font-size:15.5px;line-height:15.5px;color:#55585c;transform:scaleX(0.8861);">USD</span>
<svg style="left:461px;top:1147.8px;" width="20" height="20" viewBox="0 0 20 20"><rect width="20" height="20" fill="#2a2a2a"/><text x="1.500" y="15.500" font-size="12" font-weight="bold" font-family="Liberation Sans" fill="#fff">Inv</text><path d="M13 5l3-3 2 2" stroke="#f0a030" stroke-width="1.600" fill="none"/></svg>
<span class="t fs" style="left:491px;top:1150.86px;font-size:15.5px;line-height:15.5px;color:#55585c;transform:scaleX(0.8250);">EUR</span>
<svg style="left:541px;top:1147.8px;" width="17" height="20" viewBox="0 0 17 20"><path d="M1 1.5h13v17H1z" fill="#f6d88a"/><path d="M1 1.5h2.5v17H1z" fill="#f0c860"/><path d="M12 13h4v5.5h-4z" fill="#f0c860"/></svg>
<span class="t fs" style="left:568.5px;top:1150.86px;font-size:15.5px;line-height:15.5px;color:#55585c;transform:scaleX(0.9489);">форумы</span>
<svg style="left:647.5px;top:1147.8px;" width="17" height="20" viewBox="0 0 17 20"><path d="M1 1.5h13v17H1z" fill="#f6d88a"/><path d="M1 1.5h2.5v17H1z" fill="#f0c860"/><path d="M12 13h4v5.5h-4z" fill="#f0c860"/></svg>
<span class="t fs" style="left:676px;top:1150.86px;font-size:15.5px;line-height:15.5px;color:#55585c;transform:scaleX(0.9429);">shops</span>
<svg style="left:738px;top:1147.8px;" width="17" height="20" viewBox="0 0 17 20"><path d="M1 1.5h13v17H1z" fill="#f6d88a"/><path d="M1 1.5h2.5v17H1z" fill="#f0c860"/><path d="M12 13h4v5.5h-4z" fill="#f0c860"/></svg>
<span class="t fs" style="left:766px;top:1150.86px;font-size:15.5px;line-height:15.5px;color:#55585c;transform:scaleX(0.8774);">дела</span>
<svg style="left:821px;top:1147.8px;" width="17" height="20" viewBox="0 0 17 20"><path d="M1 1.5h13v17H1z" fill="#f6d88a"/><path d="M1 1.5h2.5v17H1z" fill="#f0c860"/><path d="M12 13h4v5.5h-4z" fill="#f0c860"/></svg>
<span class="t fs" style="left:848.5px;top:1150.86px;font-size:15.5px;line-height:15.5px;color:#55585c;transform:scaleX(0.9616);">develope</span>
<svg style="left:931px;top:1148.8px;" width="18" height="18" viewBox="0 0 18 18"><circle cx="9" cy="9" r="8.700" fill="#5f6368"/><path d="M3.500 5c1.500-1.500 4.500-2 6-1 .500 1.500-1 2-2 3s.300 2-1.200 2.500S4.500 8.500 3 8.200C2.800 7 3 6 3.500 5z" fill="#fff"/><path d="M9.300 10.200c1.500-.600 3.800-.200 4.800 1.300s-.500 3-2 4-1.700-1.300-2.200-2.300-1.600-2.400-.600-3z" fill="#fff"/><path d="M12.500 2.500c1.500.800 2.500 1.800 3.200 3-1 .300-2-.200-2.700-1z" fill="#fff"/></svg>
<span class="t fs" style="left:958px;top:1150.86px;font-size:15.5px;line-height:15.5px;color:#55585c;transform:scaleX(0.8780);">TensorRT</span>
<svg style="left:1040.4px;top:1148.8px;" width="18" height="18" viewBox="0 0 18 18"><circle cx="9" cy="9" r="8.700" fill="#5f6368"/><path d="M3.500 5c1.500-1.500 4.500-2 6-1 .500 1.500-1 2-2 3s.300 2-1.200 2.500S4.500 8.500 3 8.200C2.800 7 3 6 3.500 5z" fill="#fff"/><path d="M9.300 10.200c1.500-.600 3.800-.200 4.800 1.300s-.500 3-2 4-1.700-1.300-2.200-2.300-1.600-2.400-.600-3z" fill="#fff"/><path d="M12.500 2.500c1.500.800 2.500 1.800 3.200 3-1 .300-2-.200-2.700-1z" fill="#fff"/></svg>
<span class="t fs" style="left:1069.6px;top:1150.86px;font-size:15.5px;line-height:15.5px;color:#55585c;transform:scaleX(0.9266);">EWD Viewer</span>
<svg style="left:1170.6px;top:1152.8px;" width="21" height="10" viewBox="0 0 21 10"><path d="M1 6.500c0-2 2-2 4-2.500l3-2.500h6l3 2.500c2 0 3 .500 3 2.500v1H1z" fill="#4a6a4a"/><circle cx="5.500" cy="8" r="2" fill="#222"/><circle cx="15.500" cy="8" r="2" fill="#222"/></svg>
<span class="t fs" style="left:1201px;top:1150.86px;font-size:15.5px;line-height:15.5px;color:#55585c;transform:scaleX(0.9162);">Russian Repair Man...</span>
<svg style="left:1361px;top:1147.8px;" width="20" height="20" viewBox="0 0 20 20"><path d="M2 1h11l6 9-6 9H2a1 1 0 0 1-1-1V2a1 1 0 0 1 1-1z" fill="#fff" stroke="#777" stroke-width="1.200"/><path d="M6.500 5.500l7 4.500-7 4.500z" fill="#222"/></svg>
<span class="t fs" style="left:1392.3px;top:1150.86px;font-size:15.5px;line-height:15.5px;color:#55585c;transform:scaleX(0.9419);">ЯМузыка</span>
<svg style="left:1474.4px;top:1148.8px;" width="20" height="18" viewBox="0 0 20 18"><path d="M0 0h6l4 5 4-5h6v4h-3l-3 5 3 5h3v4h-6l-4-5-4 5H0v-4h3l3-5-3-5H0z" fill="#3a3a3a"/></svg>
<span class="t fs" style="left:1505px;top:1150.86px;font-size:15.5px;line-height:15.5px;color:#55585c;transform:scaleX(0.9430);">Пол в гараже Крас...</span>
<span class="t fs" style="left:1726px;top:1149.14px;font-size:17px;line-height:17px;color:#444;transform:scaleX(1.0577);">»</span>
<div style="left:1749.4px;top:1147px;width:1px;height:20px;background:#c8c8c8;"></div>
<svg style="left:1763px;top:1147.8px;" width="17" height="20" viewBox="0 0 17 20"><path d="M1 1.5h13v17H1z" fill="#f6d88a"/><path d="M1 1.5h2.5v17H1z" fill="#f0c860"/><path d="M12 13h4v5.5h-4z" fill="#f0c860"/></svg>
<span class="t fs" style="left:1792px;top:1150.86px;font-size:15.5px;line-height:15.5px;color:#55585c;transform:scaleX(0.9641);">Другие закладки</span>
<div style="left:1px;top:1180px;width:1899px;height:903px;background:#ebebeb;"></div>
<div style="left:26.8px;top:1180px;width:1846.2px;height:77.7px;background:#fff;border-radius:0 0 5px 5px;"></div>
<span class="t fs" style="left:271.5px;top:1184.67px;font-size:18.4px;line-height:18.4px;color:#111;transform:scaleX(1.1462);">На 16х9 будет ооооочень сильно ощущаться недостаток ширины, потому что оба окна будут узкие. Хотите сказать, что я неправ?</span>
<svg style="left:271.5px;top:1224px;" width="18" height="16" viewBox="0 0 18 16"><path d="M9 0l9 16H0z" fill="#222"/><path d="M9 5.500v5.500" stroke="#fff" stroke-width="2"/><circle cx="9" cy="13" r="1.100" fill="#fff"/></svg>
<span class="t fs" style="left:295.5px;top:1224.9px;font-size:17.5px;line-height:17.5px;color:#444;transform:scaleX(1.0332);">Пожаловаться</span>
<svg style="left:1516.5px;top:1224px;" width="15" height="16" viewBox="0 0 15 16"><path d="M1 7h3.500v8.500H1zM4.500 8l3.500-7c2 0 2.500 1.500 2 3l-.5 2.500h4c1 0 1.500 1 1.200 2l-1.500 6c-.3.800-1 1-1.700 1H4.500z" fill="none" stroke="#333" stroke-width="1.400" stroke-linejoin="round"/></svg>
<span class="t fs" style="left:1537.7px;top:1224.9px;font-size:17.5px;line-height:17.5px;color:#444;transform:scaleX(1.0531);">Мне нравится</span>
<span class="t fs" style="left:1671px;top:1224.9px;font-size:17.5px;line-height:17.5px;color:#444;transform:scaleX(0.9877);">+ Цитата</span>
<svg style="left:1757.6px;top:1224px;" width="18" height="15" viewBox="0 0 18 15"><path d="M7 0L0 6.500 7 13V9c5 0 8 1.500 10 5-1-6-4-10-10-10z" fill="#222"/><path d="M3.500 0L-3 6.500 3.500 13" fill="none" stroke="#222" stroke-width="1.500" transform="translate(3 0) scale(.5 1) translate(-3 0)"/></svg>
<span class="t fs" style="left:1781.4px;top:1224.9px;font-size:17.5px;line-height:17.5px;color:#444;transform:scaleX(1.0360);">Ответить</span>
<div style="left:26.8px;top:1275.2px;width:199.2px;height:35.1px;background:#fff;border-radius:4px;"></div>
<span class="t fs" style="left:32.4px;top:1286.54px;font-size:14.5px;line-height:14.5px;color:#5a5a5a;transform:scaleX(1.0185);">К первому непрочитанному</span>
<div style="left:26.8px;top:1326.3px;width:1846.2px;height:435px;background:#fff;border-radius:5px;"></div>
<div style="left:40.3px;top:1339.3px;width:199px;height:153px;background:#fbfbfa;border:1px solid #e6e6e6;border-radius:4px;"></div>
<svg style="left:238.3px;top:1352px;" width="12" height="24" viewBox="0 0 12 24"><path d="M0 0l11 12L0 24z" fill="#fbfbfa" stroke="#e6e6e6"/><path d="M0 1v22" stroke="#fbfbfa" stroke-width="2"/></svg>
<div style="left:76.8px;top:1353px;width:126.2px;height:126px;background:#f4f4f2;border-radius:3px;"></div>
<svg style="left:79.8px;top:1356px;" width="120" height="120" viewBox="0 0 120 120"><defs><radialGradient id="sm" cx="52%" cy="22%" r="80%"><stop offset="0" stop-color="#efc54c"/><stop offset=".3" stop-color="#d9ab38"/><stop offset=".55" stop-color="#9a842c"/><stop offset=".8" stop-color="#7a5c24"/><stop offset="1" stop-color="#5a3c1c"/></radialGradient><clipPath id="avq"><rect width="120" height="120"/></clipPath></defs><g clip-path="url(#avq)"><rect width="120" height="120" fill="#5e4420"/><rect y="70" width="50" height="50" fill="#7d6c28"/><ellipse cx="20" cy="10" rx="20" ry="18" fill="url(#sm)"/><ellipse cx="97" cy="6" rx="24" ry="22" fill="url(#sm)"/><ellipse cx="3" cy="42" rx="14" ry="15" fill="url(#sm)"/><ellipse cx="47" cy="24" rx="16" ry="11" fill="url(#sm)"/><ellipse cx="72" cy="30" rx="9" ry="12" fill="url(#sm)"/><ellipse cx="94" cy="36" rx="15" ry="13" fill="url(#sm)"/><ellipse cx="110" cy="54" rx="18" ry="18" fill="url(#sm)"/><ellipse cx="110" cy="84" rx="20" ry="20" fill="url(#sm)"/><ellipse cx="118" cy="116" rx="16" ry="15" fill="url(#sm)"/><ellipse cx="20" cy="112" rx="26" ry="22" fill="url(#sm)"/><ellipse cx="52" cy="68" rx="42" ry="35" fill="url(#sm)"/><ellipse cx="84" cy="100" rx="20" ry="24" fill="url(#sm)"/><ellipse cx="31" cy="46.500" rx="3.300" ry="5.500" fill="#1a1208" transform="rotate(28 31 46.500)"/><circle cx="52" cy="49.500" r="4.700" fill="#120c06"/><circle cx="53.500" cy="47.500" r="1.200" fill="#9a9a9a"/><path d="M18.500 60c3 14 14 20 22 20 10 0 20-6 22-14.500-1.500 5-9 9.500-20 9.500-12 0-20-7-24-15z" fill="#1e140a"/><path d="M43 29c6 1.500 13-1 17-6" fill="none" stroke="#3a2a12" stroke-width="2.200"/><ellipse cx="39.700" cy="18" rx="1.500" ry="2" fill="#2a1c0a"/><ellipse cx="52" cy="15.500" rx="1.700" ry="1.200" fill="#4a3a16"/><circle cx="104" cy="48" r="2" fill="#1e140a"/><path d="M107 59c4 .500 9-.500 13-2.500" fill="none" stroke="#3a2a12" stroke-width="2"/><path d="M0 38c3-1 6-3 7-6" fill="none" stroke="#2a1c0a" stroke-width="2.200"/><path d="M0 72c4 6 8 14 12 20l-12 4z" fill="#33241a"/><path d="M46 106l6-1 8 15h-8z" fill="#15100a"/><ellipse cx="116" cy="102" rx="5" ry="2.500" fill="#15100a"/><path d="M62 88c8 6 14 6 22 2" fill="none" stroke="#5a4018" stroke-width="3"/></g></svg>
<div style="left:266px;top:1339.3px;width:1594px;height:44px;background:#edf0f2;border-radius:3px 3px 0 0;"></div>
<span class="t fr" style="left:284.5px;top:1351.94px;font-size:19.5px;line-height:19.5px;color:#666666;font-weight:bold;">B</span>
<span class="t fr" style="left:319.71px;top:1351.94px;font-size:19.5px;line-height:19.5px;color:#666666;font-weight:bold;font-style:italic;">I</span>
<span class="t fr" style="left:349.32px;top:1351.92px;font-size:18.5px;line-height:18.5px;color:#666666;">U</span>
<div style="left:348.5px;top:1369.8px;width:15px;height:1.2px;background:#666666;"></div>
<svg style="left:390.4px;top:1353.3px;" width="16" height="16" viewBox="0 0 16 16"><circle cx="8" cy="8" r="7" fill="none" stroke="#666666" stroke-width="1.800"/><path d="M8 1a7 7 0 0 1 0 14z" fill="#666666"/></svg>
<span class="t fr" style="left:422px;top:1351.94px;font-size:19.5px;line-height:19.5px;color:#666666;transform:scaleX(0.9654);">T</span>
<span class="t fr" style="left:433px;top:1356.06px;font-size:13px;line-height:13px;color:#666666;transform:scaleX(0.7556);">T</span>
<svg style="left:437.5px;top:1353px;" width="5" height="16" viewBox="0 0 5 16"><path d="M2.500 0v16M.5 2.500l2-2.500 2 2.500M.5 13.500l2 2.500 2-2.500" fill="none" stroke="#666666" stroke-width="1"/></svg>
<span class="t fr" style="left:456.78px;top:1351.7px;font-size:20px;line-height:20px;color:#666666;font-weight:bold;">A</span>
<svg style="left:498px;top:1353px;" width="17" height="17" viewBox="0 0 17 17"><path d="M7 10a3.500 3.500 0 0 0 5 0l3-3a3.500 3.500 0 0 0-5-5L8.500 3.500M10 7a3.500 3.500 0 0 0-5 0l-3 3a3.500 3.500 0 0 0 5 5L8.500 13.500" fill="none" stroke="#666666" stroke-width="2"/></svg>
<svg style="left:530px;top:1352.5px;" width="18" height="18" viewBox="0 0 18 18"><path d="M7.500 10.500a3.500 3.500 0 0 0 5 0l2-2a3.500 3.500 0 0 0-5-5M10.500 7.500a3.500 3.500 0 0 0-5 0l-2 2a3.500 3.500 0 0 0 5 5" fill="none" stroke="#666666" stroke-width="1.800"/><path d="M3 1l2 3M1 5l3 1M6 0l.5 3M15 17l-2-3M17 13l-3-1M12 18l-.5-3" stroke="#666666" stroke-width="1.200"/></svg>
<div style="left:572px;top:1354px;width:18px;height:2.6px;background:#666666;"></div>
<div style="left:572px;top:1358.7px;width:13px;height:2.6px;background:#666666;"></div>
<div style="left:572px;top:1363.4px;width:18px;height:2.6px;background:#666666;"></div>
<div style="left:572px;top:1368.1px;width:13px;height:2.6px;background:#666666;"></div>
<div style="left:615px;top:1354.5px;width:3.4px;height:3.4px;background:#666666;border-radius:2px;"></div>
<div style="left:621px;top:1355px;width:12px;height:2.6px;background:#666666;"></div>
<div style="left:615px;top:1360.5px;width:3.4px;height:3.4px;background:#666666;border-radius:2px;"></div>
<div style="left:621px;top:1361px;width:12px;height:2.6px;background:#666666;"></div>
<div style="left:615px;top:1366.5px;width:3.4px;height:3.4px;background:#666666;border-radius:2px;"></div>
<div style="left:621px;top:1367px;width:12px;height:2.6px;background:#666666;"></div>
<span class="t fs" style="left:647.5px;top:1353.18px;font-size:6.5px;line-height:6.5px;color:#666666;font-weight:bold;">1</span>
<div style="left:654px;top:1355px;width:12px;height:2.6px;background:#666666;"></div>
<span class="t fs" style="left:647.5px;top:1359.18px;font-size:6.5px;line-height:6.5px;color:#666666;font-weight:bold;">2</span>
<div style="left:654px;top:1361px;width:12px;height:2.6px;background:#666666;"></div>
<span class="t fs" style="left:647.5px;top:1365.18px;font-size:6.5px;line-height:6.5px;color:#666666;font-weight:bold;">3</span>
<div style="left:654px;top:1367px;width:12px;height:2.6px;background:#666666;"></div>
<div style="left:679.5px;top:1354px;width:18px;height:2.6px;background:#666666;"></div>
<div style="left:687.5px;top:1358.7px;width:10px;height:2.6px;background:#666666;"></div>
<div style="left:687.5px;top:1363.4px;width:10px;height:2.6px;background:#666666;"></div>
<div style="left:679.5px;top:1368.1px;width:18px;height:2.6px;background:#666666;"></div>
<svg style="left:679.5px;top:1357.5px;" width="6" height="8" viewBox="0 0 6 8"><path d="M6 0v8L0 4z" fill="#666666"/></svg>
<div style="left:712px;top:1354px;width:18px;height:2.6px;background:#666666;"></div>
<div style="left:720px;top:1358.7px;width:10px;height:2.6px;background:#666666;"></div>
<div style="left:720px;top:1363.4px;width:10px;height:2.6px;background:#666666;"></div>
<div style="left:712px;top:1368.1px;width:18px;height:2.6px;background:#666666;"></div>
<svg style="left:712px;top:1357.5px;" width="6" height="8" viewBox="0 0 6 8"><path d="M0 0v8l6-4z" fill="#666666"/></svg>
<svg style="left:755.6px;top:1353.3px;" width="16" height="16" viewBox="0 0 16 16"><circle cx="8" cy="8" r="7" fill="none" stroke="#666666" stroke-width="1.500"/><circle cx="5.500" cy="6" r="1.100" fill="#666666"/><circle cx="10.500" cy="6" r="1.100" fill="#666666"/><path d="M4.500 9.500c1.500 3 5.500 3 7 0" fill="none" stroke="#666666" stroke-width="1.300"/></svg>
<svg style="left:787px;top:1353.8px;" width="19" height="15" viewBox="0 0 19 15"><rect x=".8" y=".8" width="17.400" height="13.400" fill="none" stroke="#666666" stroke-width="1.500"/><path d="M2.500 12.500l4.500-5 3 3 2.500-2 4 4z" fill="#666666"/><circle cx="5.500" cy="4.500" r="1.500" fill="#666666"/></svg>
<svg style="left:819.5px;top:1353.3px;" width="19" height="16" viewBox="0 0 19 16"><rect x=".8" y=".8" width="17.400" height="14.400" fill="none" stroke="#666666" stroke-width="1.500"/><path d="M4.500 1v14M14.500 1v14M1 5.500h3.500M1 10.500h3.500M14.500 5.500H18M14.500 10.500H18M4.500 8h10" stroke="#666666" stroke-width="1.400"/></svg>
<svg style="left:854px;top:1354px;" width="15" height="15" viewBox="0 0 15 15"><path d="M7.500 0v15M0 7.500h15" stroke="#666666" stroke-width="3.400"/></svg>
<svg style="left:895.4px;top:1353.3px;" width="16" height="16" viewBox="0 0 16 16"><path d="M.8.800h11.500l3 3v11.500H.8z" fill="none" stroke="#666666" stroke-width="1.500"/><rect x="4" y="1" width="6.500" height="4.500" fill="#666666"/><rect x="3.500" y="9" width="9" height="6" fill="none" stroke="#666666" stroke-width="1.300"/></svg>
<svg style="left:937px;top:1353px;" width="17" height="17" viewBox="0 0 17 17"><path d="M3 9.500a6 6 0 1 0 2-5" fill="none" stroke="#666666" stroke-width="2"/><path d="M1 1.500V8h6.500z" fill="#666666"/></svg>
<svg style="left:970px;top:1353px;" width="17" height="17" viewBox="0 0 17 17"><path d="M14 9.500a6 6 0 1 1-2-5" fill="none" stroke="#666666" stroke-width="2"/><path d="M16 1.500V8H9.500z" fill="#666666"/></svg>
<svg style="left:1786px;top:1354.5px;" width="20" height="14" viewBox="0 0 20 14"><path d="M7 1h12l-6.500 9H1z" fill="#666666"/><path d="M1 10l1.500 3h9l1-3" fill="none" stroke="#666666" stroke-width="1.300"/></svg>
<svg style="left:1830px;top:1352.5px;" width="15" height="18" viewBox="0 0 15 18"><path d="M.8.800h9l4.400 4.400v12H.8z" fill="none" stroke="#666666" stroke-width="1.400"/><path d="M9.500 1v4.500H14M3.500 8h8M3.500 10.800h8M3.500 13.600h8" fill="none" stroke="#666666" stroke-width="1.200"/></svg>
<div style="left:266px;top:1383.3px;width:1594px;height:319.4px;background:#fff;border:1px solid #e8e8e8;border-top:none;"></div>
<span class="t fs" style="left:277.6px;top:1397.37px;font-size:18.4px;line-height:18.4px;color:#5e5e5e;transform:scaleX(1.1407);">@tuborg34,</span>
<span class="t fs" style="left:277.6px;top:1420.87px;font-size:18.4px;line-height:18.4px;color:#5e5e5e;transform:scaleX(1.1544);">некоторые фильмы и некоторые игрушки - очень хорошо на 21:9 . Остальное с оговорками.</span>
<span class="t fs" style="left:277.6px;top:1466.67px;font-size:18.4px;line-height:18.4px;color:#5e5e5e;transform:scaleX(1.1558);">Когда вы работаете в два окна на 34" 21:9, то у вас получается два виртуальных "монитора" с диагональю 20,6" шириной 40 см и высотой 34</span>
<span class="t fs" style="left:277.6px;top:1489.67px;font-size:18.4px;line-height:18.4px;color:#5e5e5e;transform:scaleX(1.1549);">А если такое проделать с 32" 16:9, то получится два экрана с диагональю 21" шириной 35.5 см и высотой 40 см.</span>
<span class="t fs" style="left:277.6px;top:1512.87px;font-size:18.4px;line-height:18.4px;color:#5e5e5e;transform:scaleX(1.1407);">Размеры почти те же, но работать удобнее, т.к. приходится меньше скролить и остаётся меньше неиспользуемых пространств по бокам. Которые даже в</span>
<span class="t fs" style="left:277.6px;top:1535.97px;font-size:18.4px;line-height:18.4px;color:#5e5e5e;transform:scaleX(1.1418);">таком варианте имеют место быть. Кроме того экран 16:9 можно поделить на четыре 15 дюймовых окна и это будет ещё боле-менее юзабельно.</span>
<span class="t fs" style="left:277.6px;top:1581.47px;font-size:18.4px;line-height:18.4px;color:#5e5e5e;transform:scaleX(1.1603);">[QUOTE="tuborg34, post: 6868553, member: 34550"]На 16х9 будет ооооочень сильно ощущаться недостаток ширины, потому что оба окна будут узкие.</span>
<span class="t fs" style="left:277.6px;top:1604.67px;font-size:18.4px;line-height:18.4px;color:#5e5e5e;transform:scaleX(1.1367);">Хотите сказать, что я неправ?[/QUOTE]</span>
<span class="t fs" style="left:277.6px;top:1628.07px;font-size:18.4px;line-height:18.4px;color:#5e5e5e;transform:scaleX(1.1428);">Мне всё время не хватает высоты. А ширину я не знаю куда девать.</span>
<div style="left:1266px;top:1711px;width:124.8px;height:36.5px;background:#2c6cb8;border-radius:5px;"></div>
<span class="t fs" style="left:1281px;top:1721.94px;font-size:17px;line-height:17px;color:#fff;font-weight:bold;transform:scaleX(1.0170);">ОТВЕТИТЬ</span>
<div style="left:1395.3px;top:1711px;width:193.4px;height:36.5px;background:#2c6cb8;border-radius:5px;"></div>
<span class="t fs" style="left:1409px;top:1721.94px;font-size:17px;line-height:17px;color:#fff;font-weight:bold;transform:scaleX(1.0649);">ЗАГРУЗИТЬ ФАЙЛ</span>
<div style="left:1593.2px;top:1711px;width:266.8px;height:36.5px;background:#2c6cb8;border-radius:5px;"></div>
<span class="t fs" style="left:1607.6px;top:1721.94px;font-size:17px;line-height:17px;color:#fff;font-weight:bold;transform:scaleX(1.0614);">РАСШИРЕННЫЙ РЕЖИМ...</span>
<div style="left:26px;top:1775px;width:1848px;height:6px;background:#2e3f57;border-radius:5px 5px 0 0;"></div>
<div style="left:26px;top:1780.6px;width:1848px;height:39.4px;background:#fafaf8;"></div>
<div style="left:26px;top:1820px;width:1848px;height:1px;background:#e8e8e8;"></div>
<span class="t fs" style="left:39px;top:1792.02px;font-size:18.5px;line-height:18.5px;color:#5a5a5a;transform:scaleX(1.0645);">Похожие темы - Обсуждение мониторов выбора</span>
<div style="left:26px;top:1820px;width:1848px;height:84px;background:#fff;"></div>
<div style="left:26px;top:1820px;width:74.6px;height:84px;background:#f6f6f4;"></div>
<div style="left:37.4px;top:1836.5px;width:52px;height:52px;background:#efefef;border-radius:3px;"></div>
<div style="left:41px;top:1839.7px;width:45px;height:45px;background:#fff;"></div>
<span class="t fs" style="left:114px;top:1839.18px;font-size:19px;line-height:19px;color:#3a3a3a;transform:scaleX(1.0644);">Подключить много мониторов к компьютеру</span>
<span class="t fs" style="left:114px;top:1869.1px;font-size:17.5px;line-height:17.5px;color:#777;transform:scaleX(1.0341);">toks, 03.09.18, в разделе: Компьютеры</span>
<div style="left:1299.5px;top:1836px;width:1.5px;height:52px;background:#e6e6e6;"></div>
<div style="left:1611.5px;top:1836px;width:1.5px;height:52px;background:#e6e6e6;"></div>
<span class="t fs" style="left:1313.3px;top:1841.7px;font-size:17.5px;line-height:17.5px;color:#777;transform:scaleX(1.0280);">Ответов:</span>
<span class="t fs" style="left:1313.3px;top:1868.1px;font-size:17.5px;line-height:17.5px;color:#777;transform:scaleX(1.0480);">Просмотров:</span>
<span class="t fs" style="left:1588.95px;top:1841.7px;font-size:17.5px;line-height:17.5px;color:#777;transform:scaleX(0.9300);">4</span>
<span class="t fs" style="left:1570.84px;top:1868.1px;font-size:17.5px;line-height:17.5px;color:#777;transform:scaleX(0.9300);">765</span>
<span class="t fs" style="left:1822.84px;top:1839.18px;font-size:19px;line-height:19px;color:#3a3a3a;transform:scaleX(0.9200);">toks</span>
<span class="t fs" style="left:1791.55px;top:1871.1px;font-size:17.5px;line-height:17.5px;color:#777;transform:scaleX(0.9300);">04.09.18</span>
<div style="left:26px;top:1904.4px;width:1848px;height:84px;background:#fff;"></div>
<div style="left:26px;top:1904.4px;width:74.6px;height:84px;background:#f6f6f4;"></div>
<div style="left:37.4px;top:1920.9px;width:52px;height:52px;background:#efefef;border-radius:3px;"></div>
<div style="left:41px;top:1924.1px;width:45px;height:45px;background:#fff;"></div>
<span class="t fs" style="left:114px;top:1923.58px;font-size:19px;line-height:19px;color:#3a3a3a;transform:scaleX(1.0128);">Обсуждение видеокарт ATI</span>
<span class="t fs" style="left:114px;top:1953.5px;font-size:17.5px;line-height:17.5px;color:#777;transform:scaleX(1.0296);">4444, 15.04.11, в разделе: Компьютеры</span>
<div style="left:1299.5px;top:1920.4px;width:1.5px;height:52px;background:#e6e6e6;"></div>
<div style="left:1611.5px;top:1920.4px;width:1.5px;height:52px;background:#e6e6e6;"></div>
<span class="t fs" style="left:1313.3px;top:1926.1px;font-size:17.5px;line-height:17.5px;color:#777;transform:scaleX(1.0280);">Ответов:</span>
<span class="t fs" style="left:1313.3px;top:1952.5px;font-size:17.5px;line-height:17.5px;color:#777;transform:scaleX(1.0480);">Просмотров:</span>
<span class="t fs" style="left:1579.9px;top:1926.1px;font-size:17.5px;line-height:17.5px;color:#777;transform:scaleX(0.9300);">16</span>
<span class="t fs" style="left:1570.84px;top:1952.5px;font-size:17.5px;line-height:17.5px;color:#777;transform:scaleX(0.9300);">829</span>
<span class="t fs" style="left:1792.73px;top:1923.58px;font-size:19px;line-height:19px;color:#3a3a3a;transform:scaleX(0.9200);">SiMoN_</span>
<span class="t fs" style="left:1791.55px;top:1955.5px;font-size:17.5px;line-height:17.5px;color:#777;transform:scaleX(0.9300);">07.05.11</span>
<div style="left:26px;top:1988.2px;width:1848px;height:83.5px;background:#fff;"></div>
<div style="left:26px;top:1988.2px;width:74.6px;height:83.5px;background:#f6f6f4;"></div>
<div style="left:37.4px;top:2004.7px;width:52px;height:52px;background:#efefef;border-radius:3px;"></div>
<div style="left:41px;top:2007.9px;width:45px;height:45px;background:#fff;"></div>
<span class="t fs" style="left:114px;top:2007.38px;font-size:19px;line-height:19px;color:#3a3a3a;transform:scaleX(1.0348);">Обсуждение компьютерных фирм Волгограда</span>
<span class="t fs" style="left:114px;top:2037.3px;font-size:17.5px;line-height:17.5px;color:#777;transform:scaleX(1.0354);">paralax, 04.06.09, в разделе: Компьютеры</span>
<div style="left:1299.5px;top:2004.2px;width:1.5px;height:52px;background:#e6e6e6;"></div>
<div style="left:1611.5px;top:2004.2px;width:1.5px;height:52px;background:#e6e6e6;"></div>
<span class="t fs" style="left:1313.3px;top:2009.9px;font-size:17.5px;line-height:17.5px;color:#777;transform:scaleX(1.0280);">Ответов:</span>
<span class="t fs" style="left:1313.3px;top:2036.3px;font-size:17.5px;line-height:17.5px;color:#777;transform:scaleX(1.0480);">Просмотров:</span>
<span class="t fs" style="left:1579.9px;top:2009.9px;font-size:17.5px;line-height:17.5px;color:#777;transform:scaleX(0.9300);">97</span>
<span class="t fs" style="left:1557.27px;top:2036.3px;font-size:17.5px;line-height:17.5px;color:#777;transform:scaleX(0.9300);">6.628</span>
<span class="t fs" style="left:1789.83px;top:2007.38px;font-size:19px;line-height:19px;color:#3a3a3a;transform:scaleX(0.9200);">missouri</span>
<span class="t fs" style="left:1791.55px;top:2039.3px;font-size:17.5px;line-height:17.5px;color:#777;transform:scaleX(0.9300);">30.11.21</span>
<div style="left:26px;top:1819.5px;width:1848px;height:1.3px;background:#e4e4e4;"></div>
<div style="left:26px;top:1903.9px;width:1848px;height:1.3px;background:#e4e4e4;"></div>
<div style="left:26px;top:1987.7px;width:1848px;height:1.3px;background:#e4e4e4;"></div>
<svg style="left:41px;top:1839.7px;" width="45" height="45" viewBox="0 0 45 45"><path d="M2 1.500l17.500 17" stroke="#1a1a1a" stroke-width="2.600"/><circle cx="9.500" cy="12" r="3" fill="#1a1a1a"/><path d="M20 6.500h14l-2-5.500h-9z" fill="#4a4a4a"/><path d="M19 6.800h16" stroke="#2a2a2a" stroke-width="1.400"/><rect x="23" y="7.500" width="9" height="7" rx="3" fill="#d9b898"/><path d="M18 19l6-5h8l8 7-3 5-3-2 1 8H20l1-7-5-3z" fill="#2c3e60"/><path d="M27 14l1.500 8 1.500-8z" fill="#e8e8e8"/><path d="M20 31h16l4 13.500h-6l-5-10-3 10h-6z" fill="#2c3e60"/><path d="M19 43.500h8M33 43.500h8" stroke="#1a1a1a" stroke-width="1.600"/></svg>
<svg style="left:41px;top:1923.9px;" width="45" height="45" viewBox="0 0 45 45"><path d="M13 12l4-9 5 6c2-1 6-1 8 0l7-5-1 11c1 5 0 9-3 12-5 4-13 4-18 0-4-4-4-10-2-15z" fill="#8c8c8c"/><ellipse cx="20.500" cy="16.500" rx="4.500" ry="4" fill="#1a1a1a"/><ellipse cx="30.500" cy="17.500" rx="4" ry="3.500" fill="#1a1a1a"/><path d="M16 24c5 5 15 6 21 1-3 7-17 8-21-1z" fill="#fff" stroke="#555" stroke-width=".6"/><path d="M14 31c-3 3-3 8 0 10h14c1-3 0-6-3-9z" fill="#9a9a9a"/><path d="M12 42h18" stroke="#666" stroke-width="1.500"/></svg>
<svg style="left:41px;top:2007.2px;" width="45" height="45" viewBox="0 0 45 45"><rect width="45" height="45" fill="#3a2c26"/><path d="M0 0h12l10 8-8 10H0z" fill="#c2651c"/><path d="M30 0h15v14l-8 6z" fill="#7a3c14"/><path d="M38 0h7v8z" fill="#c2651c"/><path d="M10 2c8 2 14 6 18 10l-3 2C20 9 14 6 8 5z" fill="#2a2220"/><path d="M26 4l2 10 10 22-4 1-9-22z" fill="#7a7a78"/><path d="M25 3l3 2-1 8-3-6z" fill="#d8a838"/><path d="M0 20c10-3 20-3 26-2l6 16c-10 4-22 4-32 2z" fill="#8a3c8c"/><path d="M32 22l13-2v18l-9 2z" fill="#7a3a7a"/><path d="M0 24c8 2 16 2 24 0M2 32c8 2 20 1 28-2" stroke="#3a2c3a" stroke-width="2" fill="none"/><path d="M0 38c12 3 30 3 45 0v7H0z" fill="#5a2e16"/><path d="M0 41c10 2 20 2 30 1" stroke="#c2651c" stroke-width="1.500" fill="none"/></svg>
<div style="left:1796px;top:1804px;width:46.2px;height:45px;background:rgba(190,190,190,.8);border-radius:5px;"></div>
<div style="left:1796px;top:1851px;width:46.2px;height:44.5px;background:rgba(190,190,190,.8);border-radius:5px;"></div>
<svg style="left:1808px;top:1821px;" width="22" height="13" viewBox="0 0 22 13"><path d="M0 13L11 0l11 13z" fill="#f2f2f2"/></svg>
<svg style="left:1808px;top:1866px;" width="22" height="10" viewBox="0 0 22 10"><path d="M0 0l11 10L22 0z" fill="#e4e4e4" opacity=".85"/></svg>
<div style="left:1824.6px;top:2008px;width:62px;height:62px;background:#5a5a5a;border-radius:31px;box-shadow:0 1px 4px rgba(0,0,0,.4);"></div>
<svg style="left:1843px;top:2026px;" width="27" height="24" viewBox="0 0 27 24"><path d="M16 0l11 9.500L16 19v-5.500C8 13.500 3 16 0 23 1 12 6 6 16 5.500z" fill="#fff"/></svg>
<div style="left:1900px;top:1180px;width:19px;height:903px;background:#f1f1f1;"></div>
<svg style="left:1904.5px;top:1190px;" width="9" height="6" viewBox="0 0 9 6"><path d="M0 6h9L4.500 0z" fill="#505050"/></svg>
<div style="left:1902px;top:1954px;width:15px;height:83px;background:#c1c1c1;"></div>
<svg style="left:1904.5px;top:2069px;" width="9" height="6" viewBox="0 0 9 6"><path d="M0 0h9L4.500 6z" fill="#505050"/></svg>
<div style="left:1919px;top:1081px;width:1921px;height:1002px;background:#2d2d30;"></div>
<div style="left:1919px;top:1081px;width:1921px;height:1.3px;background:#007acc;"></div>
<div style="left:1919px;top:1081px;width:1px;height:1002px;background:#007acc;"></div>
<div style="left:3839px;top:1081px;width:1px;height:1002px;background:#007acc;"></div>
<svg style="left:1934.91px;top:1091px;" width="24" height="24" viewBox="0 0 24 24"><path d="M17.500 0L24 3v18l-6.500 3L6.500 14 2.500 17 0 15.800V8.200L2.500 7l4 3zM17.500 6.500L10.500 12l7 5.500zM2.500 9.800v4.400L5 12z" fill="#fff"/></svg>
<span class="t fs" style="left:1974.04px;top:1096.06px;font-size:15.5px;line-height:15.5px;color:#f1f1f1;transform:scaleX(0.7742);">FILE</span>
<div style="left:1974.04px;top:1110.3px;width:7.33px;height:1px;background:#f1f1f1;"></div>
<span class="t fs" style="left:2023.98px;top:1096.06px;font-size:15.5px;line-height:15.5px;color:#f1f1f1;transform:scaleX(0.8655);">EDIT</span>
<div style="left:2023.98px;top:1110.3px;width:8.95px;height:1px;background:#f1f1f1;"></div>
<span class="t fs" style="left:2079.5px;top:1096.06px;font-size:15.5px;line-height:15.5px;color:#f1f1f1;transform:scaleX(0.8937);">VIEW</span>
<div style="left:2079.5px;top:1110.3px;width:9.24px;height:1px;background:#f1f1f1;"></div>
<span class="t fs" style="left:2139.88px;top:1096.06px;font-size:15.5px;line-height:15.5px;color:#f1f1f1;transform:scaleX(0.8512);">GIT</span>
<div style="left:2139.88px;top:1110.3px;width:10.26px;height:1px;background:#f1f1f1;"></div>
<span class="t fs" style="left:2186.09px;top:1096.06px;font-size:15.5px;line-height:15.5px;color:#f1f1f1;transform:scaleX(0.7934);">PROJECT</span>
<div style="left:2186.09px;top:1110.3px;width:8.2px;height:1px;background:#f1f1f1;"></div>
<span class="t fs" style="left:2268.07px;top:1096.06px;font-size:15.5px;line-height:15.5px;color:#f1f1f1;transform:scaleX(0.8898);">BUILD</span>
<div style="left:2268.07px;top:1110.3px;width:9.2px;height:1px;background:#f1f1f1;"></div>
<span class="t fs" style="left:2334.04px;top:1096.06px;font-size:15.5px;line-height:15.5px;color:#f1f1f1;transform:scaleX(0.8654);">DEBUG</span>
<div style="left:2334.04px;top:1110.3px;width:9.69px;height:1px;background:#f1f1f1;"></div>
<span class="t fs" style="left:2405.96px;top:1096.06px;font-size:15.5px;line-height:15.5px;color:#f1f1f1;transform:scaleX(0.7996);">TEST</span>
<div style="left:2421.8px;top:1110.3px;width:8.27px;height:1px;background:#f1f1f1;"></div>
<span class="t fs" style="left:2462.24px;top:1096.06px;font-size:15.5px;line-height:15.5px;color:#f1f1f1;transform:scaleX(0.8705);">ANALYZE</span>
<div style="left:2480.98px;top:1110.3px;width:9px;height:1px;background:#f1f1f1;"></div>
<span class="t fs" style="left:2547.95px;top:1096.06px;font-size:15.5px;line-height:15.5px;color:#f1f1f1;transform:scaleX(0.8370);">TOOLS</span>
<div style="left:2547.95px;top:1110.3px;width:7.92px;height:1px;background:#f1f1f1;"></div>
<span class="t fs" style="left:2616.52px;top:1096.06px;font-size:15.5px;line-height:15.5px;color:#f1f1f1;transform:scaleX(0.8504);">EXTENSIONS</span>
<div style="left:2625.32px;top:1110.3px;width:8.79px;height:1px;background:#f1f1f1;"></div>
<span class="t fs" style="left:2726.09px;top:1096.06px;font-size:15.5px;line-height:15.5px;color:#f1f1f1;transform:scaleX(0.9535);">WINDOW</span>
<div style="left:2726.09px;top:1110.3px;width:13.95px;height:1px;background:#f1f1f1;"></div>
<span class="t fs" style="left:2815.9px;top:1096.06px;font-size:15.5px;line-height:15.5px;color:#f1f1f1;transform:scaleX(0.8467);">HELP</span>
<div style="left:2815.9px;top:1110.3px;width:9.48px;height:1px;background:#f1f1f1;"></div>
<div style="left:2872px;top:1088.6px;width:278.6px;height:27px;background:#2d2d30;border:1px solid #434346;"></div>
<span class="t fs" style="left:2881px;top:1096.06px;font-size:15.5px;line-height:15.5px;color:#999;transform:scaleX(0.9316);">Search (Ctrl+Q)</span>
<svg style="left:3124px;top:1094px;" width="16" height="16" viewBox="0 0 16 16"><circle cx="10" cy="6" r="4.600" fill="none" stroke="#f1f1f1" stroke-width="2"/><path d="M6.800 9.200L1 15" stroke="#f1f1f1" stroke-width="2.400"/></svg>
<div style="left:3173px;top:1086.8px;width:77.8px;height:31px;background:#1f1f21;"></div>
<span class="t fs" style="left:3183px;top:1096.76px;font-size:15.5px;line-height:15.5px;color:#fff;transform:scaleX(1.0198);">arri2hde</span>
<div style="left:3618px;top:1089px;width:25.4px;height:25.4px;background:#1f8c82;border-radius:13px;"></div>
<span class="t fs" style="left:3624.6px;top:1097.12px;font-size:11px;line-height:11px;color:#e8f4f2;transform:scaleX(1.0909);">IU</span>
<svg style="left:3688px;top:1103.5px;" width="14" height="2" viewBox="0 0 14 2"><path d="M0 1h14" stroke="#f1f1f1" stroke-width="1.300"/></svg>
<svg style="left:3746.5px;top:1098px;" width="13" height="13" viewBox="0 0 13 13"><rect x=".7" y=".7" width="11.600" height="11.600" fill="none" stroke="#f1f1f1" stroke-width="1.400"/></svg>
<svg style="left:3805px;top:1098px;" width="12" height="12" viewBox="0 0 12 12"><path d="M.5.500l11 11M11.500.500l-11 11" stroke="#f1f1f1" stroke-width="1.400"/></svg>
<div style="left:1934.16px;top:1129px;width:1.5px;height:1.5px;background:#5a5a5a;"></div>
<div style="left:1936.66px;top:1132px;width:1.5px;height:1.5px;background:#5a5a5a;"></div>
<div style="left:1934.16px;top:1135px;width:1.5px;height:1.5px;background:#5a5a5a;"></div>
<div style="left:1936.66px;top:1138px;width:1.5px;height:1.5px;background:#5a5a5a;"></div>
<div style="left:1934.16px;top:1141px;width:1.5px;height:1.5px;background:#5a5a5a;"></div>
<div style="left:1936.66px;top:1144px;width:1.5px;height:1.5px;background:#5a5a5a;"></div>
<div style="left:1934.16px;top:1147px;width:1.5px;height:1.5px;background:#5a5a5a;"></div>
<svg style="left:1950.56px;top:1131px;" width="16" height="16" viewBox="0 0 16 16"><circle cx="8" cy="8" r="7.500" fill="#3794ff"/><path d="M12 8H4.500M7.500 4.500L4 8l3.500 3.500" stroke="#2d2d30" stroke-width="1.800" fill="none"/></svg>
<svg style="left:1975.9px;top:1137px;" width="8" height="5" viewBox="0 0 8 5"><path d="M0 0h8L4 5z" fill="#999"/></svg>
<svg style="left:1991.55px;top:1131px;" width="16" height="16" viewBox="0 0 16 16"><circle cx="8" cy="8" r="7.500" fill="#555"/><path d="M4 8h7.500M8.500 4.500L12 8l-3.500 3.500" stroke="#2d2d30" stroke-width="1.800" fill="none"/></svg>
<div style="left:2017.64px;top:1127px;width:1px;height:24px;background:#46464a;"></div>
<svg style="left:2028.07px;top:1130px;" width="17" height="18" viewBox="0 0 17 18"><path d="M4 4h8l4 4v9H4z" fill="none" stroke="#d0d0d0" stroke-width="1.300"/><path d="M3 0v6M0 3h6M.8.800l4.400 4.400M5.200.800L.8 5.200" stroke="#e8c060" stroke-width="1.100"/></svg>
<svg style="left:2054.91px;top:1137px;" width="8" height="5" viewBox="0 0 8 5"><path d="M0 0h8L4 5z" fill="#999"/></svg>
<svg style="left:2068.32px;top:1131px;" width="20" height="17" viewBox="0 0 20 17"><path d="M1 5h6l2 2h8v9H1z" fill="#dcb67a"/><path d="M3 9h16l-2.500 7H1z" fill="#f0d090"/><path d="M10 0l4 3-4 3" fill="none" stroke="#3794ff" stroke-width="1.600"/></svg>
<svg style="left:2097.02px;top:1131px;" width="17" height="16" viewBox="0 0 17 16"><path d="M.5.500h13l3 3v12H.5z" fill="#3794ff"/><rect x="4" y=".5" width="8" height="5" fill="#2d2d30"/><rect x="3.500" y="9" width="10" height="7" fill="#2d2d30"/></svg>
<svg style="left:2123.11px;top:1130px;" width="20" height="18" viewBox="0 0 20 18"><path d="M6.500.500h10l3 3v9.500h-13z" fill="#3794ff"/><path d="M.5 5.500h10l3 3v9H.5z" fill="#3794ff" stroke="#2d2d30"/><rect x="3" y="5.500" width="6" height="3.500" fill="#2d2d30"/><rect x="3" y="12" width="7.500" height="5.500" fill="#2d2d30"/></svg>
<div style="left:2151.06px;top:1127px;width:1px;height:24px;background:#46464a;"></div>
<svg style="left:2161.12px;top:1130px;" width="16" height="18" viewBox="0 0 16 18"><path d="M3 1v6h6" fill="none" stroke="#6a6a6a" stroke-width="1.600"/><path d="M3 7c3-5 11-4 11 2 0 4-4 6-8 8" fill="none" stroke="#6a6a6a" stroke-width="1.600"/></svg>
<svg style="left:2190.56px;top:1137px;" width="8" height="5" viewBox="0 0 8 5"><path d="M0 0h8L4 5z" fill="#666"/></svg>
<svg style="left:2206.21px;top:1130px;" width="16" height="18" viewBox="0 0 16 18"><path d="M13 1v6H7" fill="none" stroke="#6a6a6a" stroke-width="1.600"/><path d="M13 7C10 2 2 3 2 9c0 4 4 6 8 8" fill="none" stroke="#6a6a6a" stroke-width="1.600"/></svg>
<svg style="left:2234.91px;top:1137px;" width="8" height="5" viewBox="0 0 8 5"><path d="M0 0h8L4 5z" fill="#666"/></svg>
<div style="left:2249.44px;top:1127px;width:1px;height:24px;background:#46464a;"></div>
<div style="left:2258px;top:1126px;width:80.5px;height:25.2px;background:#333337;border:1px solid #434346;"></div>
<span class="t fs" style="left:2263.2px;top:1131.96px;font-size:15.5px;line-height:15.5px;color:#f1f1f1;transform:scaleX(0.9777);">debug</span>
<svg style="left:2327.7px;top:1137px;" width="8" height="5" viewBox="0 0 8 5"><path d="M0 0h8L4 5z" fill="#999"/></svg>
<div style="left:2347px;top:1126px;width:137.3px;height:25.2px;background:#333337;border:1px solid #434346;"></div>
<span class="t fs" style="left:2351.55px;top:1131.96px;font-size:15.5px;line-height:15.5px;color:#f1f1f1;transform:scaleX(0.9245);">x64</span>
<svg style="left:2473.79px;top:1137px;" width="8" height="5" viewBox="0 0 8 5"><path d="M0 0h8L4 5z" fill="#999"/></svg>
<svg style="left:2497.27px;top:1132px;" width="12" height="14" viewBox="0 0 12 14"><path d="M.5.500v13l11-6.500z" fill="#8ae28a" stroke="#8ae28a"/></svg>
<span class="t fs" style="left:2519.3px;top:1131.96px;font-size:15.5px;line-height:15.5px;color:#f1f1f1;transform:scaleX(0.9642);">Local Windows Debugger</span>
<svg style="left:2697.39px;top:1137px;" width="8" height="5" viewBox="0 0 8 5"><path d="M0 0h8L4 5z" fill="#999"/></svg>
<svg style="left:2715.65px;top:1132px;" width="12" height="15" viewBox="0 0 12 15"><path d="M6 0c1 4 5 5 5 10a5 5 0 0 1-10 0c0-2 1-3 2-4 0 2 1 3 2 3 1-3 0-6 1-9z" fill="#3e3e42"/></svg>
<div style="left:2738.5px;top:1126px;width:161px;height:25.2px;background:#333337;border:1px solid #434346;"></div>
<span class="t fs" style="left:2743.23px;top:1131.96px;font-size:15.5px;line-height:15.5px;color:#f1f1f1;transform:scaleX(0.9817);">Auto</span>
<svg style="left:2889.32px;top:1137px;" width="8" height="5" viewBox="0 0 8 5"><path d="M0 0h8L4 5z" fill="#999"/></svg>
<div style="left:2909.07px;top:1127px;width:1px;height:24px;background:#46464a;"></div>
<svg style="left:2917.27px;top:1131px;" width="20" height="17" viewBox="0 0 20 17"><path d="M1 1h6l2 2h8v11H1z" fill="#dcb67a"/><circle cx="13" cy="10" r="3.500" fill="#2d2d30" stroke="#3794ff" stroke-width="1.500"/><path d="M15.500 12.500l3.500 3.500" stroke="#3794ff" stroke-width="1.800"/></svg>
<div style="left:2946.34px;top:1127px;width:1px;height:24px;background:#46464a;"></div>
<svg style="left:2955.28px;top:1131px;" width="18" height="15" viewBox="0 0 18 15"><rect x=".7" y=".7" width="16.600" height="13.600" fill="none" stroke="#d0d0d0" stroke-width="1.300"/><path d="M5 11V7l4-3 4 3v4z" fill="none" stroke="#3794ff" stroke-width="1.300"/></svg>
<svg style="left:2983.6px;top:1142px;" width="8" height="8" viewBox="0 0 8 8"><path d="M0 .6h8" stroke="#999" stroke-width="1.200"/><path d="M0 3.500h8L4 8z" fill="#999"/></svg>
<div style="left:2996.65px;top:1128px;width:1.5px;height:1.5px;background:#5a5a5a;"></div>
<div style="left:2999.15px;top:1130.8px;width:1.5px;height:1.5px;background:#5a5a5a;"></div>
<div style="left:2996.65px;top:1133.6px;width:1.5px;height:1.5px;background:#5a5a5a;"></div>
<div style="left:2999.15px;top:1136.4px;width:1.5px;height:1.5px;background:#5a5a5a;"></div>
<div style="left:2996.65px;top:1139.2px;width:1.5px;height:1.5px;background:#5a5a5a;"></div>
<div style="left:2999.15px;top:1142px;width:1.5px;height:1.5px;background:#5a5a5a;"></div>
<div style="left:2996.65px;top:1144.8px;width:1.5px;height:1.5px;background:#5a5a5a;"></div>
<div style="left:2999.15px;top:1147.6px;width:1.5px;height:1.5px;background:#5a5a5a;"></div>
<div style="left:2996.65px;top:1150.4px;width:1.5px;height:1.5px;background:#5a5a5a;"></div>
<svg style="left:3010.43px;top:1130px;" width="18" height="17" viewBox="0 0 18 17"><path d="M1 0l7 6-3 .5 1.500 3.500-1.500.7L3.500 7 1 9z" fill="#3794ff"/><path d="M7 9h10v7H7zM7 12h3" fill="none" stroke="#d0d0d0" stroke-width="1.200"/></svg>
<svg style="left:3037.27px;top:1130px;" width="18" height="17" viewBox="0 0 18 17"><path d="M3 3h6M5 6h4M3 9h6M5 12h4M11 1v15M11 3h6M11 7h6M11 11h6" stroke="#555" stroke-width="1.200"/></svg>
<div style="left:3065.59px;top:1127px;width:1px;height:24px;background:#46464a;"></div>
<svg style="left:3076.4px;top:1132px;" width="14" height="13" viewBox="0 0 14 13"><path d="M0 1h9M4 4.500h10M4 8h10M4 11.500h10" stroke="#d0d0d0" stroke-width="1.400"/><path d="M4 1h10" stroke="#8ae28a" stroke-width="1.400"/></svg>
<svg style="left:3101.37px;top:1131px;" width="17" height="15" viewBox="0 0 17 15"><path d="M7 4h10M7 7.500h10M7 11h10M7 14.500h10" stroke="#d0d0d0" stroke-width="1.400"/><path d="M1 3c0-3 5-3 5 0 0 2-3 2-3 4M3 9.500v1.500" fill="none" stroke="#3794ff" stroke-width="1.400"/></svg>
<div style="left:3128.94px;top:1127px;width:1px;height:24px;background:#46464a;"></div>
<svg style="left:3139.38px;top:1130px;" width="15" height="18" viewBox="0 0 15 18"><path d="M.5.500h14v17l-7-5-7 5z" fill="#e0e0e0"/></svg>
<svg style="left:3168.82px;top:1131px;" width="17" height="15" viewBox="0 0 17 15"><path d="M8 3h8v12l-4-3-4 3z" fill="#555"/><path d="M8 5H1M4 2L1 5l3 3" fill="none" stroke="#666" stroke-width="1.300"/></svg>
<svg style="left:3194.91px;top:1131px;" width="17" height="15" viewBox="0 0 17 15"><path d="M8 3h8v12l-4-3-4 3z" fill="#555"/><path d="M8 5H1M4 2L1 5l3 3" fill="none" stroke="#666" stroke-width="1.300"/></svg>
<svg style="left:3220.99px;top:1131px;" width="17" height="15" viewBox="0 0 17 15"><path d="M8 3h8v12l-4-3-4 3z" fill="#555"/><path d="M8 5H1M4 2L1 5l3 3" fill="none" stroke="#666" stroke-width="1.300"/></svg>
<svg style="left:3247.08px;top:1142px;" width="8" height="8" viewBox="0 0 8 8"><path d="M0 .6h8" stroke="#999" stroke-width="1.200"/><path d="M0 3.500h8L4 8z" fill="#999"/></svg>
<svg style="left:3673.04px;top:1132px;" width="19" height="18" viewBox="0 0 19 18"><path d="M1.500 7v9.500h14V12" fill="none" stroke="#d0d0d0" stroke-width="1.500"/><path d="M5.500 12.500c.5-4 3.500-6.500 8-6.500V2.500L18 7.500l-4.500 5V9c-3.500 0-6 1-8 3.500z" fill="none" stroke="#d0d0d0" stroke-width="1.400"/></svg>
<span class="t fs" style="left:3698.5px;top:1134.26px;font-size:15.5px;line-height:15.5px;color:#f1f1f1;transform:scaleX(0.8893);">Live Share</span>
<svg style="left:3796.03px;top:1130px;" width="18" height="18" viewBox="0 0 18 18"><circle cx="6" cy="7" r="3" fill="none" stroke="#d0d0d0" stroke-width="1.400"/><path d="M0 17c0-5 3-6 6-6s6 1 6 6" fill="none" stroke="#d0d0d0" stroke-width="1.400"/><path d="M10 .700h7.500v6h-3l-2 2v-2H10z" fill="none" stroke="#d0d0d0" stroke-width="1.300"/></svg>
<div style="left:1921px;top:1171px;width:7px;height:121px;background:#3f3f46;"></div>
<span class="t fs" style="left:1878.5px;top:1224.86px;font-size:15.5px;line-height:15.5px;color:#d0d0d0;transform:rotate(90deg) scaleX(0.9705);transform-origin:50% 50%;">Document Outline</span>
<div style="left:1960px;top:1170.6px;width:320.8px;height:850.4px;background:#252526;"></div>
<div style="left:1960px;top:1170.6px;width:320.8px;height:30px;background:#2d2d30;"></div>
<span class="t fs" style="left:1965px;top:1179.06px;font-size:15.5px;line-height:15.5px;color:#d0d0d0;transform:scaleX(0.9658);">Solution Explorer</span>
<div style="left:2089px;top:1182.5px;width:122px;height:7.5px;background:radial-gradient(circle at 0.700px 0.700px,#424246 0.750px,transparent 0.900px) 0 0/4px 5px,radial-gradient(circle at 0.700px 0.700px,#424246 0.750px,transparent 0.900px) 2px 2.500px/4px 5px;"></div>
<svg style="left:2218.5px;top:1183.5px;" width="9" height="5" viewBox="0 0 9 5"><path d="M0 0h9L4.500 5z" fill="#f1f1f1"/></svg>
<svg style="left:2239.5px;top:1178px;" width="9" height="14" viewBox="0 0 9 14"><path d="M2 .7h5v6.500H2zM0 7.500h9M4.500 7.500v6" fill="none" stroke="#f1f1f1" stroke-width="1.300"/><path d="M5.500 1v6" stroke="#f1f1f1" stroke-width="1.600"/></svg>
<svg style="left:2260px;top:1180.5px;" width="10" height="10" viewBox="0 0 10 10"><path d="M.5.500l9 9M9.500.500l-9 9" stroke="#f1f1f1" stroke-width="1.500"/></svg>
<div style="left:1960px;top:1200.6px;width:320.8px;height:31px;background:#2d2d30;"></div>
<svg style="left:1972.92px;top:1208.4px;" width="14" height="14" viewBox="0 0 14 14"><circle cx="7" cy="7" r="6.500" fill="#464649"/><path d="M10 7H4.500M6.500 4.500L4 7l2.500 2.500" stroke="#2d2d30" stroke-width="1.500" fill="none"/></svg>
<svg style="left:1999.38px;top:1208.4px;" width="14" height="14" viewBox="0 0 14 14"><circle cx="7" cy="7" r="6.500" fill="#464649"/><path d="M4 7h5.500M7.500 4.500L10 7l-2.500 2.500" stroke="#2d2d30" stroke-width="1.500" fill="none"/></svg>
<svg style="left:2023.6px;top:1206.4px;" width="18" height="17" viewBox="0 0 18 17"><path d="M1 9l8-8 8 8M3.500 8v8h4v-5h3v5h4V8" fill="none" stroke="#e0e0e0" stroke-width="1.500"/></svg>
<svg style="left:2050.43px;top:1206.4px;" width="20" height="18" viewBox="0 0 20 18"><rect x="7" y="1" width="12" height="12" fill="none" stroke="#c8c8c8" stroke-width="1.200"/><path d="M9 4h8M9 7h8M9 10h8" stroke="#c8c8c8"/><path d="M8 8L3 13l-2-1v5l2-1 5 4V8z" fill="#9b6be0"/></svg>
<div style="left:2079.5px;top:1204px;width:1px;height:23px;background:#46464a;"></div>
<svg style="left:2090.68px;top:1206.4px;" width="18" height="18" viewBox="0 0 18 18"><circle cx="10" cy="10" r="6" fill="none" stroke="#d0d0d0" stroke-width="1.400"/><path d="M10 6.500V10h3" fill="none" stroke="#d0d0d0" stroke-width="1.300"/><path d="M0 1l4 3" stroke="#d0d0d0" stroke-width="1.200"/></svg>
<svg style="left:2116.4px;top:1214.4px;" width="7" height="4.5" viewBox="0 0 7 4.5"><path d="M0 0h7L3.500 4.500z" fill="#999"/></svg>
<svg style="left:2129.44px;top:1206.4px;" width="19" height="18" viewBox="0 0 19 18"><path d="M2 8a7.500 7 0 0 1 13-4" fill="none" stroke="#3794ff" stroke-width="2.600"/><path d="M17 1v6h-6z" fill="#3794ff"/><path d="M17 10a7.500 7 0 0 1-13 4" fill="none" stroke="#3794ff" stroke-width="2.600"/><path d="M2 17v-6h6z" fill="#3794ff"/></svg>
<svg style="left:2158.51px;top:1208.4px;" width="16" height="14" viewBox="0 0 16 14"><rect x="5" y=".7" width="10" height="8" fill="none" stroke="#c8c8c8" stroke-width="1.300"/><rect x=".7" y="5" width="10" height="8" fill="#2d2d30" stroke="#c8c8c8" stroke-width="1.300"/><path d="M3 9h5.500" stroke="#c8c8c8" stroke-width="1.300"/></svg>
<svg style="left:2183.85px;top:1206.4px;" width="18" height="18" viewBox="0 0 18 18"><path d="M5 .7h8l4 4v9H5z" fill="none" stroke="#c8c8c8" stroke-width="1.300"/><path d="M.7 4.700h8l4 4v8.600H.7z" fill="#2d2d30" stroke="#c8c8c8" stroke-width="1.300"/><path d="M3 9h6M3 12h6M3 14.500h6" stroke="#c8c8c8"/></svg>
<div style="left:2212.55px;top:1204px;width:1px;height:23px;background:#46464a;"></div>
<svg style="left:2222.61px;top:1210.4px;" width="16" height="10" viewBox="0 0 16 10"><path d="M5 .7L1 5l4 4.300M11 .7L15 5l-4 4.300" fill="none" stroke="#e0e0e0" stroke-width="1.600"/></svg>
<div style="left:2268.82px;top:1205px;width:1.5px;height:3px;background:#999;"></div>
<div style="left:2272.82px;top:1205px;width:1.5px;height:3px;background:#999;"></div>
<div style="left:1961px;top:1234px;width:319px;height:26px;background:#333337;border:1px solid #3f3f46;"></div>
<span class="t fs" style="left:1967px;top:1240.76px;font-size:15.5px;line-height:15.5px;color:#999;transform:scaleX(0.9581);">Search Solution Explorer (Ctrl+ж)</span>
<svg style="left:2244.97px;top:1239px;" width="16" height="16" viewBox="0 0 16 16"><circle cx="10.500" cy="5.500" r="4" fill="none" stroke="#f1f1f1" stroke-width="1.800"/><path d="M7.500 8.500L1.500 14.500" stroke="#f1f1f1" stroke-width="2.200"/></svg>
<svg style="left:2269.19px;top:1245px;" width="7" height="4.5" viewBox="0 0 7 4.5"><path d="M0 0h7L3.500 4.500z" fill="#f1f1f1"/></svg>
<div style="left:1960px;top:1286.4px;width:320.8px;height:23px;background:#3f3f46;"></div>
<svg style="left:1979px;top:1266.4px;" width="18" height="17" viewBox="0 0 18 17"><rect x=".7" y=".7" width="16.600" height="12" fill="none" stroke="#c8c8c8" stroke-width="1.300"/><path d="M.7 3.500h16.600" stroke="#c8c8c8"/><path d="M6 8l-4 4-1.500-.8v4.600L2 15l4 3.500V8z" fill="#9b6be0"/></svg>
<span class="t fs" style="left:2005px;top:1268.46px;font-size:15.5px;line-height:15.5px;color:#f1f1f1;transform:scaleX(0.9733);">Solution 'arri2hde' (9 of 9 projects)</span>
<svg style="left:1973px;top:1291.9px;" width="8" height="12" viewBox="0 0 8 12"><path d="M.8 1v10l6-5z" fill="none" stroke="#d0d0d0" stroke-width="1.200"/></svg>
<svg style="left:2002px;top:1290.4px;" width="18" height="15" viewBox="0 0 18 15"><path d="M.5 1h6l2 2h9v11.500H.5z" fill="#dcb67a"/><path d="M.5 5h17v9.500H.5z" fill="#e8c98a"/></svg>
<span class="t fs" style="left:2027px;top:1291.46px;font-size:15.5px;line-height:15.5px;color:#f1f1f1;transform:scaleX(0.9421);">CMakePredefinedTargets</span>
<svg style="left:1973px;top:1314.9px;" width="8" height="12" viewBox="0 0 8 12"><path d="M.8 1v10l6-5z" fill="none" stroke="#d0d0d0" stroke-width="1.200"/></svg>
<svg style="left:2001px;top:1312.4px;" width="20" height="17" viewBox="0 0 20 17"><rect x=".8" y=".8" width="18.400" height="15.400" fill="#2a2a2c" stroke="#b180d7" stroke-width="1.300"/><path d="M6 4v5M3.500 6.500h5M12 8v5M9.500 10.500h5" stroke="#e6e6e6" stroke-width="1.600"/></svg>
<span class="t fs" style="left:2027px;top:1314.46px;font-size:15.5px;line-height:15.5px;color:#f1f1f1;transform:scaleX(0.9421);">arri2hdetr</span>
<svg style="left:1973px;top:1337.9px;" width="8" height="12" viewBox="0 0 8 12"><path d="M.8 1v10l6-5z" fill="none" stroke="#d0d0d0" stroke-width="1.200"/></svg>
<svg style="left:2001px;top:1335.4px;" width="20" height="17" viewBox="0 0 20 17"><rect x=".8" y=".8" width="18.400" height="15.400" fill="#2a2a2c" stroke="#b180d7" stroke-width="1.300"/><path d="M6 4v5M3.500 6.500h5M12 8v5M9.500 10.500h5" stroke="#e6e6e6" stroke-width="1.600"/></svg>
<span class="t fs" style="left:2027px;top:1337.46px;font-size:15.5px;line-height:15.5px;color:#f1f1f1;transform:scaleX(0.9421);">arri2hdetr_static</span>
<svg style="left:1973px;top:1360.9px;" width="8" height="12" viewBox="0 0 8 12"><path d="M.8 1v10l6-5z" fill="none" stroke="#d0d0d0" stroke-width="1.200"/></svg>
<svg style="left:2001px;top:1358.4px;" width="20" height="17" viewBox="0 0 20 17"><rect x=".8" y=".8" width="18.400" height="15.400" fill="#2a2a2c" stroke="#b180d7" stroke-width="1.300"/><path d="M6 4v5M3.500 6.500h5M12 8v5M9.500 10.500h5" stroke="#e6e6e6" stroke-width="1.600"/></svg>
<span class="t fs" style="left:2027px;top:1360.46px;font-size:15.5px;line-height:15.5px;color:#f1f1f1;transform:scaleX(0.9421);">ARRIHDETranscoder</span>
<svg style="left:1972.5px;top:1386.9px;" width="9" height="8" viewBox="0 0 9 8"><path d="M8.500 0v8H.500z" fill="#d0d0d0"/></svg>
<svg style="left:2001px;top:1381.4px;" width="20" height="17" viewBox="0 0 20 17"><rect x=".8" y=".8" width="18.400" height="15.400" fill="#2a2a2c" stroke="#b180d7" stroke-width="1.300"/><path d="M6 4v5M3.500 6.500h5M12 8v5M9.500 10.500h5" stroke="#e6e6e6" stroke-width="1.600"/></svg>
<span class="t fs" style="left:2027px;top:1383.46px;font-size:15.5px;line-height:15.5px;color:#f1f1f1;transform:scaleX(0.9421);">nb_demux_mxf</span>
<svg style="left:1995.4px;top:1406.9px;" width="8" height="12" viewBox="0 0 8 12"><path d="M.8 1v10l6-5z" fill="none" stroke="#d0d0d0" stroke-width="1.200"/></svg>
<svg style="left:2023px;top:1408.9px;" width="20" height="8" viewBox="0 0 20 8"><rect x=".5" y="1.500" width="5" height="5" fill="#c8c8c8"/><path d="M5.500 4h4" stroke="#c8c8c8" stroke-width="1.300"/><rect x="9.500" y=".5" width="9" height="7" fill="#c8c8c8"/></svg>
<span class="t fs" style="left:2050px;top:1406.46px;font-size:15.5px;line-height:15.5px;color:#f1f1f1;transform:scaleX(0.9421);">References</span>
<svg style="left:1995.4px;top:1429.9px;" width="8" height="12" viewBox="0 0 8 12"><path d="M.8 1v10l6-5z" fill="none" stroke="#d0d0d0" stroke-width="1.200"/></svg>
<svg style="left:2023px;top:1427.4px;" width="20" height="17" viewBox="0 0 20 17"><path d="M1 1h7l2 2h9v12H1z" fill="#dcb67a"/><path d="M1 5h18v10H1z" fill="#e8c98a"/><rect x="1" y="8" width="9" height="8" fill="#2a2a2c" stroke="#3794ff" stroke-width="1.300"/><path d="M3.500 12h4" stroke="#3794ff" stroke-width="1.300"/></svg>
<span class="t fs" style="left:2050px;top:1429.46px;font-size:15.5px;line-height:15.5px;color:#f1f1f1;transform:scaleX(0.9421);">External Dependencies</span>
<svg style="left:1994.9px;top:1455.9px;" width="9" height="8" viewBox="0 0 9 8"><path d="M8.500 0v8H.500z" fill="#d0d0d0"/></svg>
<svg style="left:2023px;top:1450.4px;" width="20" height="17" viewBox="0 0 20 17"><path d="M1 3h7l2 2h9v10H1z" fill="#dcb67a"/><path d="M1 7h18l-2 8H1z" fill="#e8c98a"/><path d="M2 8h8l-3 4v4l-2-1v-3z" fill="#f0f0f0" stroke="#555" stroke-width=".6"/></svg>
<span class="t fs" style="left:2050px;top:1452.46px;font-size:15.5px;line-height:15.5px;color:#f1f1f1;transform:scaleX(0.9421);">Header Files</span>
<svg style="left:2018.5px;top:1475.9px;" width="8" height="12" viewBox="0 0 8 12"><path d="M.8 1v10l6-5z" fill="none" stroke="#d0d0d0" stroke-width="1.200"/></svg>
<svg style="left:2049.4px;top:1473.9px;" width="14" height="16" viewBox="0 0 14 16"><path d="M.8.800h8l4.400 4.400v10H.8z" fill="none" stroke="#c8c8c8" stroke-width="1.200"/><path d="M4 7v6M4 10c2-2 4-1 4 1v2" fill="none" stroke="#b180d7" stroke-width="1.300"/></svg>
<span class="t fs" style="left:2072px;top:1475.46px;font-size:15.5px;line-height:15.5px;color:#f1f1f1;transform:scaleX(0.9421);">mxf_demuxer.h</span>
<svg style="left:2018.5px;top:1498.9px;" width="8" height="12" viewBox="0 0 8 12"><path d="M.8 1v10l6-5z" fill="none" stroke="#d0d0d0" stroke-width="1.200"/></svg>
<svg style="left:2049.4px;top:1496.9px;" width="14" height="16" viewBox="0 0 14 16"><path d="M.8.800h8l4.400 4.400v10H.8z" fill="none" stroke="#c8c8c8" stroke-width="1.200"/><path d="M4 7v6M4 10c2-2 4-1 4 1v2" fill="none" stroke="#b180d7" stroke-width="1.300"/></svg>
<span class="t fs" style="left:2072px;top:1498.46px;font-size:15.5px;line-height:15.5px;color:#f1f1f1;transform:scaleX(0.9421);">mxf_demuxer_stream.h</span>
<svg style="left:2018.5px;top:1521.9px;" width="8" height="12" viewBox="0 0 8 12"><path d="M.8 1v10l6-5z" fill="none" stroke="#d0d0d0" stroke-width="1.200"/></svg>
<svg style="left:2049.4px;top:1519.9px;" width="14" height="16" viewBox="0 0 14 16"><path d="M.8.800h8l4.400 4.400v10H.8z" fill="none" stroke="#c8c8c8" stroke-width="1.200"/><path d="M4 7v6M4 10c2-2 4-1 4 1v2" fill="none" stroke="#b180d7" stroke-width="1.300"/></svg>
<span class="t fs" style="left:2072px;top:1521.46px;font-size:15.5px;line-height:15.5px;color:#f1f1f1;transform:scaleX(0.9421);">mxf_index_parser.h</span>
<svg style="left:2018.5px;top:1544.9px;" width="8" height="12" viewBox="0 0 8 12"><path d="M.8 1v10l6-5z" fill="none" stroke="#d0d0d0" stroke-width="1.200"/></svg>
<svg style="left:2049.4px;top:1542.9px;" width="14" height="16" viewBox="0 0 14 16"><path d="M.8.800h8l4.400 4.400v10H.8z" fill="none" stroke="#c8c8c8" stroke-width="1.200"/><path d="M4 7v6M4 10c2-2 4-1 4 1v2" fill="none" stroke="#b180d7" stroke-width="1.300"/></svg>
<span class="t fs" style="left:2072px;top:1544.46px;font-size:15.5px;line-height:15.5px;color:#f1f1f1;transform:scaleX(0.9421);">mxf_parsers.h</span>
<svg style="left:2018.5px;top:1567.9px;" width="8" height="12" viewBox="0 0 8 12"><path d="M.8 1v10l6-5z" fill="none" stroke="#d0d0d0" stroke-width="1.200"/></svg>
<svg style="left:2049.4px;top:1565.9px;" width="14" height="16" viewBox="0 0 14 16"><path d="M.8.800h8l4.400 4.400v10H.8z" fill="none" stroke="#c8c8c8" stroke-width="1.200"/><path d="M4 7v6M4 10c2-2 4-1 4 1v2" fill="none" stroke="#b180d7" stroke-width="1.300"/></svg>
<span class="t fs" style="left:2072px;top:1567.46px;font-size:15.5px;line-height:15.5px;color:#f1f1f1;transform:scaleX(0.9421);">mxf_parsers_stream.h</span>
<svg style="left:2018.5px;top:1590.9px;" width="8" height="12" viewBox="0 0 8 12"><path d="M.8 1v10l6-5z" fill="none" stroke="#d0d0d0" stroke-width="1.200"/></svg>
<svg style="left:2049.4px;top:1588.9px;" width="14" height="16" viewBox="0 0 14 16"><path d="M.8.800h8l4.400 4.400v10H.8z" fill="none" stroke="#c8c8c8" stroke-width="1.200"/><path d="M4 7v6M4 10c2-2 4-1 4 1v2" fill="none" stroke="#b180d7" stroke-width="1.300"/></svg>
<span class="t fs" style="left:2072px;top:1590.46px;font-size:15.5px;line-height:15.5px;color:#f1f1f1;transform:scaleX(0.9421);">resource.h</span>
<svg style="left:1995.4px;top:1613.9px;" width="8" height="12" viewBox="0 0 8 12"><path d="M.8 1v10l6-5z" fill="none" stroke="#d0d0d0" stroke-width="1.200"/></svg>
<svg style="left:2023px;top:1611.4px;" width="20" height="17" viewBox="0 0 20 17"><path d="M1 3h7l2 2h9v10H1z" fill="#dcb67a"/><path d="M1 7h18l-2 8H1z" fill="#e8c98a"/><path d="M2 8h8l-3 4v4l-2-1v-3z" fill="#f0f0f0" stroke="#555" stroke-width=".6"/></svg>
<span class="t fs" style="left:2050px;top:1613.46px;font-size:15.5px;line-height:15.5px;color:#f1f1f1;transform:scaleX(0.9421);">Resource Files</span>
<svg style="left:1995.4px;top:1636.9px;" width="8" height="12" viewBox="0 0 8 12"><path d="M.8 1v10l6-5z" fill="none" stroke="#d0d0d0" stroke-width="1.200"/></svg>
<svg style="left:2023px;top:1634.4px;" width="20" height="17" viewBox="0 0 20 17"><path d="M1 3h7l2 2h9v10H1z" fill="#dcb67a"/><path d="M1 7h18l-2 8H1z" fill="#e8c98a"/><path d="M2 8h8l-3 4v4l-2-1v-3z" fill="#f0f0f0" stroke="#555" stroke-width=".6"/></svg>
<span class="t fs" style="left:2050px;top:1636.46px;font-size:15.5px;line-height:15.5px;color:#f1f1f1;transform:scaleX(0.9421);">Source Files</span>
<svg style="left:2026px;top:1657.9px;" width="14" height="16" viewBox="0 0 14 16"><path d="M.8.800h8l4.400 4.400v10H.8z" fill="none" stroke="#c8c8c8" stroke-width="1.200"/><path d="M3 6h7M3 8.500h7M3 11h7M3 13.500h5" stroke="#c8c8c8" stroke-width="1"/></svg>
<span class="t fs" style="left:2050px;top:1659.46px;font-size:15.5px;line-height:15.5px;color:#f1f1f1;transform:scaleX(0.9421);">CMakeLists.txt</span>
<svg style="left:1973px;top:1682.9px;" width="8" height="12" viewBox="0 0 8 12"><path d="M.8 1v10l6-5z" fill="none" stroke="#d0d0d0" stroke-width="1.200"/></svg>
<svg style="left:2001px;top:1680.4px;" width="20" height="17" viewBox="0 0 20 17"><rect x=".8" y=".8" width="18.400" height="15.400" fill="#2a2a2c" stroke="#b180d7" stroke-width="1.300"/><path d="M6 4v5M3.500 6.500h5M12 8v5M9.500 10.500h5" stroke="#e6e6e6" stroke-width="1.600"/></svg>
<span class="t fs" style="left:2027px;top:1682.46px;font-size:15.5px;line-height:15.5px;color:#f1f1f1;transform:scaleX(0.9421);">nb_demux_mxf_static</span>
<svg style="left:1972.5px;top:1708.9px;" width="9" height="8" viewBox="0 0 9 8"><path d="M8.500 0v8H.500z" fill="#d0d0d0"/></svg>
<svg style="left:2001px;top:1703.4px;" width="20" height="17" viewBox="0 0 20 17"><rect x=".8" y=".8" width="18.400" height="15.400" fill="#2a2a2c" stroke="#b180d7" stroke-width="1.300"/><path d="M6 4v5M3.500 6.500h5M12 8v5M9.500 10.500h5" stroke="#e6e6e6" stroke-width="1.600"/></svg>
<span class="t fs" style="left:2027px;top:1705.46px;font-size:15.5px;line-height:15.5px;color:#f1f1f1;transform:scaleX(0.9421);">nb_mux_mxf</span>
<svg style="left:1995.4px;top:1728.9px;" width="8" height="12" viewBox="0 0 8 12"><path d="M.8 1v10l6-5z" fill="none" stroke="#d0d0d0" stroke-width="1.200"/></svg>
<svg style="left:2023px;top:1730.9px;" width="20" height="8" viewBox="0 0 20 8"><rect x=".5" y="1.500" width="5" height="5" fill="#c8c8c8"/><path d="M5.500 4h4" stroke="#c8c8c8" stroke-width="1.300"/><rect x="9.500" y=".5" width="9" height="7" fill="#c8c8c8"/></svg>
<span class="t fs" style="left:2050px;top:1728.46px;font-size:15.5px;line-height:15.5px;color:#f1f1f1;transform:scaleX(0.9421);">References</span>
<svg style="left:1995.4px;top:1751.9px;" width="8" height="12" viewBox="0 0 8 12"><path d="M.8 1v10l6-5z" fill="none" stroke="#d0d0d0" stroke-width="1.200"/></svg>
<svg style="left:2023px;top:1749.4px;" width="20" height="17" viewBox="0 0 20 17"><path d="M1 1h7l2 2h9v12H1z" fill="#dcb67a"/><path d="M1 5h18v10H1z" fill="#e8c98a"/><rect x="1" y="8" width="9" height="8" fill="#2a2a2c" stroke="#3794ff" stroke-width="1.300"/><path d="M3.500 12h4" stroke="#3794ff" stroke-width="1.300"/></svg>
<span class="t fs" style="left:2050px;top:1751.46px;font-size:15.5px;line-height:15.5px;color:#f1f1f1;transform:scaleX(0.9421);">External Dependencies</span>
<svg style="left:1995.4px;top:1774.9px;" width="8" height="12" viewBox="0 0 8 12"><path d="M.8 1v10l6-5z" fill="none" stroke="#d0d0d0" stroke-width="1.200"/></svg>
<svg style="left:2023px;top:1772.4px;" width="20" height="17" viewBox="0 0 20 17"><path d="M1 3h7l2 2h9v10H1z" fill="#dcb67a"/><path d="M1 7h18l-2 8H1z" fill="#e8c98a"/><path d="M2 8h8l-3 4v4l-2-1v-3z" fill="#f0f0f0" stroke="#555" stroke-width=".6"/></svg>
<span class="t fs" style="left:2050px;top:1774.46px;font-size:15.5px;line-height:15.5px;color:#f1f1f1;transform:scaleX(0.9421);">Header Files</span>
<svg style="left:1995.4px;top:1797.9px;" width="8" height="12" viewBox="0 0 8 12"><path d="M.8 1v10l6-5z" fill="none" stroke="#d0d0d0" stroke-width="1.200"/></svg>
<svg style="left:2023px;top:1795.4px;" width="20" height="17" viewBox="0 0 20 17"><path d="M1 3h7l2 2h9v10H1z" fill="#dcb67a"/><path d="M1 7h18l-2 8H1z" fill="#e8c98a"/><path d="M2 8h8l-3 4v4l-2-1v-3z" fill="#f0f0f0" stroke="#555" stroke-width=".6"/></svg>
<span class="t fs" style="left:2050px;top:1797.46px;font-size:15.5px;line-height:15.5px;color:#f1f1f1;transform:scaleX(0.9421);">Resource Files</span>
<svg style="left:1994.9px;top:1823.9px;" width="9" height="8" viewBox="0 0 9 8"><path d="M8.500 0v8H.500z" fill="#d0d0d0"/></svg>
<svg style="left:2023px;top:1818.4px;" width="20" height="17" viewBox="0 0 20 17"><path d="M1 3h7l2 2h9v10H1z" fill="#dcb67a"/><path d="M1 7h18l-2 8H1z" fill="#e8c98a"/><path d="M2 8h8l-3 4v4l-2-1v-3z" fill="#f0f0f0" stroke="#555" stroke-width=".6"/></svg>
<span class="t fs" style="left:2050px;top:1820.46px;font-size:15.5px;line-height:15.5px;color:#f1f1f1;transform:scaleX(0.9421);">Source Files</span>
<svg style="left:2018.5px;top:1843.9px;" width="8" height="12" viewBox="0 0 8 12"><path d="M.8 1v10l6-5z" fill="none" stroke="#d0d0d0" stroke-width="1.200"/></svg>
<svg style="left:2047.4px;top:1844.9px;" width="18" height="10" viewBox="0 0 18 10"><path d="M3 2.500v5M.5 5h5M9 2.500v5M6.500 5h5" stroke="#b180d7" stroke-width="1.700"/><path d="M14.500 1.500v5M12 4h5" stroke="#c8a0e0" stroke-width="1.300" transform="translate(0 1.500)"/></svg>
<span class="t fs" style="left:2072px;top:1843.46px;font-size:15.5px;line-height:15.5px;color:#f1f1f1;transform:scaleX(0.9421);">mxf_mux_api.cpp</span>
<svg style="left:2018.5px;top:1866.9px;" width="8" height="12" viewBox="0 0 8 12"><path d="M.8 1v10l6-5z" fill="none" stroke="#d0d0d0" stroke-width="1.200"/></svg>
<svg style="left:2047.4px;top:1867.9px;" width="18" height="10" viewBox="0 0 18 10"><path d="M3 2.500v5M.5 5h5M9 2.500v5M6.500 5h5" stroke="#b180d7" stroke-width="1.700"/><path d="M14.500 1.500v5M12 4h5" stroke="#c8a0e0" stroke-width="1.300" transform="translate(0 1.500)"/></svg>
<span class="t fs" style="left:2072px;top:1866.46px;font-size:15.5px;line-height:15.5px;color:#f1f1f1;transform:scaleX(0.9421);">mxf_muxer.cpp</span>
<svg style="left:2018.5px;top:1889.9px;" width="8" height="12" viewBox="0 0 8 12"><path d="M.8 1v10l6-5z" fill="none" stroke="#d0d0d0" stroke-width="1.200"/></svg>
<svg style="left:2047.4px;top:1890.9px;" width="18" height="10" viewBox="0 0 18 10"><path d="M3 2.500v5M.5 5h5M9 2.500v5M6.500 5h5" stroke="#b180d7" stroke-width="1.700"/><path d="M14.500 1.500v5M12 4h5" stroke="#c8a0e0" stroke-width="1.300" transform="translate(0 1.500)"/></svg>
<span class="t fs" style="left:2072px;top:1889.46px;font-size:15.5px;line-height:15.5px;color:#f1f1f1;transform:scaleX(0.9421);">mxf_muxer_p2.cpp</span>
<svg style="left:2018.5px;top:1912.9px;" width="8" height="12" viewBox="0 0 8 12"><path d="M.8 1v10l6-5z" fill="none" stroke="#d0d0d0" stroke-width="1.200"/></svg>
<svg style="left:2047.4px;top:1913.9px;" width="18" height="10" viewBox="0 0 18 10"><path d="M3 2.500v5M.5 5h5M9 2.500v5M6.500 5h5" stroke="#b180d7" stroke-width="1.700"/><path d="M14.500 1.500v5M12 4h5" stroke="#c8a0e0" stroke-width="1.300" transform="translate(0 1.500)"/></svg>
<span class="t fs" style="left:2072px;top:1912.46px;font-size:15.5px;line-height:15.5px;color:#f1f1f1;transform:scaleX(0.9421);">mxf_partition.cpp</span>
<svg style="left:2018.5px;top:1935.9px;" width="8" height="12" viewBox="0 0 8 12"><path d="M.8 1v10l6-5z" fill="none" stroke="#d0d0d0" stroke-width="1.200"/></svg>
<svg style="left:2047.4px;top:1936.9px;" width="18" height="10" viewBox="0 0 18 10"><path d="M3 2.500v5M.5 5h5M9 2.500v5M6.500 5h5" stroke="#b180d7" stroke-width="1.700"/><path d="M14.500 1.500v5M12 4h5" stroke="#c8a0e0" stroke-width="1.300" transform="translate(0 1.500)"/></svg>
<span class="t fs" style="left:2072px;top:1935.46px;font-size:15.5px;line-height:15.5px;color:#f1f1f1;transform:scaleX(0.9421);">mxf_stream.cpp</span>
<svg style="left:2026px;top:1956.9px;" width="14" height="16" viewBox="0 0 14 16"><path d="M.8.800h8l4.400 4.400v10H.8z" fill="none" stroke="#c8c8c8" stroke-width="1.200"/><path d="M3 6h7M3 8.500h7M3 11h7M3 13.500h5" stroke="#c8c8c8" stroke-width="1"/></svg>
<span class="t fs" style="left:2050px;top:1958.46px;font-size:15.5px;line-height:15.5px;color:#f1f1f1;transform:scaleX(0.9421);">CMakeLists.txt</span>
<svg style="left:1973px;top:1981.9px;" width="8" height="12" viewBox="0 0 8 12"><path d="M.8 1v10l6-5z" fill="none" stroke="#d0d0d0" stroke-width="1.200"/></svg>
<svg style="left:2001px;top:1979.4px;" width="20" height="17" viewBox="0 0 20 17"><rect x=".8" y=".8" width="18.400" height="15.400" fill="#2a2a2c" stroke="#b180d7" stroke-width="1.300"/><path d="M6 4v5M3.500 6.500h5M12 8v5M9.500 10.500h5" stroke="#e6e6e6" stroke-width="1.600"/></svg>
<span class="t fs" style="left:2027px;top:1981.46px;font-size:15.5px;line-height:15.5px;color:#f1f1f1;transform:scaleX(0.9421);">nb_mux_mxf_static</span>
<div style="left:1960px;top:2021px;width:320.8px;height:25px;background:#2d2d30;"></div>
<div style="left:2068.32px;top:2021px;width:52.2px;height:24.5px;background:#252526;"></div>
<span class="t fs" style="left:1967.33px;top:2027.06px;font-size:15.5px;line-height:15.5px;color:#d0d0d0;transform:scaleX(0.9200);">Live...</span>
<span class="t fs" style="left:2020.99px;top:2027.06px;font-size:15.5px;line-height:15.5px;color:#d0d0d0;transform:scaleX(0.9200);">Pyth...</span>
<span class="t fs" style="left:2073.91px;top:2027.06px;font-size:15.5px;line-height:15.5px;color:#0097fb;transform:scaleX(0.9200);">Solu...</span>
<span class="t fs" style="left:2127.95px;top:2027.06px;font-size:15.5px;line-height:15.5px;color:#d0d0d0;transform:scaleX(0.9200);">Clas...</span>
<span class="t fs" style="left:2180.87px;top:2027.06px;font-size:15.5px;line-height:15.5px;color:#d0d0d0;transform:scaleX(0.9200);">Pro...</span>
<span class="t fs" style="left:2235.28px;top:2027.06px;font-size:15.5px;line-height:15.5px;color:#d0d0d0;transform:scaleX(0.9200);">Tea...</span>
<div style="left:2290px;top:1170.6px;width:186.8px;height:26.5px;background:#007acc;"></div>
<span class="t fs" style="left:2295.4px;top:1177.76px;font-size:15.5px;line-height:15.5px;color:#fff;transform:scaleX(0.9153);">mxf_index_parser.h</span>
<svg style="left:2434.29px;top:1179.5px;" width="11" height="10" viewBox="0 0 11 10"><path d="M3.500 2h6v5h-6zM3.500 .5v8M0 4.500h3.500M4 6h5.500" fill="none" stroke="#fff" stroke-width="1.200"/></svg>
<svg style="left:2458.14px;top:1179.5px;" width="10" height="10" viewBox="0 0 10 10"><path d="M.5.500l9 9M9.500.500l-9 9" stroke="#fff" stroke-width="1.500"/></svg>
<span class="t fs" style="left:2483.3px;top:1177.26px;font-size:15.5px;line-height:15.5px;color:#f1f1f1;transform:scaleX(0.9360);">mxf_mux_api.cpp</span>
<div style="left:2290px;top:1196.7px;width:1510px;height:2px;background:#007acc;"></div>
<svg style="left:3764.35px;top:1182.5px;" width="9" height="5" viewBox="0 0 9 5"><path d="M0 0h9L4.500 5z" fill="#f1f1f1"/></svg>
<svg style="left:3786.34px;top:1175px;" width="14" height="14" viewBox="0 0 14 14"><circle cx="7" cy="7" r="3" fill="none" stroke="#f1f1f1" stroke-width="2.200"/><path d="M7 0v3M7 11v3M0 7h3M11 7h3M2 2l2.200 2.200M9.800 9.800L12 12M12 2L9.800 4.200M4.200 9.800L2 12" stroke="#f1f1f1" stroke-width="1.900"/></svg>
<div style="left:2290px;top:1198.7px;width:1485.6px;height:25px;background:#333337;"></div>
<div style="left:2783px;top:1198.7px;width:4.5px;height:25px;background:#2d2d30;"></div>
<div style="left:3279px;top:1198.7px;width:4.5px;height:25px;background:#2d2d30;"></div>
<svg style="left:2294.5px;top:1203px;" width="18" height="16" viewBox="0 0 18 16"><rect x=".7" y=".7" width="16.600" height="14.600" fill="#2a2a2c" stroke="#b180d7" stroke-width="1.300"/><path d="M5.500 3.500v5M3 6h5M11 7.500v5M8.500 10h5" stroke="#e6e6e6" stroke-width="1.500"/></svg>
<span class="t fs" style="left:2315.8px;top:1205.06px;font-size:15.5px;line-height:15.5px;color:#f1f1f1;transform:scaleX(0.9361);">nb_demux_mxf</span>
<svg style="left:2771.93px;top:1210px;" width="8" height="5" viewBox="0 0 8 5"><path d="M0 0h8L4 5z" fill="#999"/></svg>
<svg style="left:2791.5px;top:1202.5px;" width="19" height="17" viewBox="0 0 19 17"><path d="M1 4l5-3 5 3-5 3z" fill="#e8b060"/><path d="M8 7v5h4M8 9.500h3" stroke="#e8b060" stroke-width="1.300" fill="none"/><rect x="11" y="10" width="6" height="5" fill="#e8b060"/><path d="M11 3.500h4v3" stroke="#e8b060" stroke-width="1.300" fill="none"/></svg>
<span class="t fs" style="left:2813.4px;top:1205.06px;font-size:15.5px;line-height:15.5px;color:#f1f1f1;transform:scaleX(0.9307);">NabletMxf::CMxfIndexParser</span>
<svg style="left:3268.7px;top:1210px;" width="8" height="5" viewBox="0 0 8 5"><path d="M0 0h8L4 5z" fill="#999"/></svg>
<svg style="left:3286.5px;top:1205px;" width="13" height="13" viewBox="0 0 13 13"><path d="M6.500 .7l5.500 3v5.600l-5.500 3-5.500-3V3.700z" fill="none" stroke="#b180d7" stroke-width="1.300"/><path d="M1 3.700l5.500 3 5.500-3M6.500 6.700v5.600" fill="none" stroke="#b180d7" stroke-width="1.100"/></svg>
<span class="t fs" style="left:3309px;top:1205.06px;font-size:15.5px;line-height:15.5px;color:#f1f1f1;transform:scaleX(0.9214);">FindSeekPosition(mxf_dmuxer_seek * pseek, uint32_t IndexSID, CMxf</span>
<svg style="left:3765.84px;top:1210px;" width="8" height="5" viewBox="0 0 8 5"><path d="M0 0h8L4 5z" fill="#999"/></svg>
<div style="left:3776px;top:1198.7px;width:24px;height:25.3px;background:#1c1c1e;"></div>
<svg style="left:3781px;top:1202.5px;" width="14" height="18" viewBox="0 0 14 18"><path d="M0 9h14M7 0v6.500M4 3l3-3 3 3M7 18v-6.500M4 15l3 3 3-3" fill="none" stroke="#f1f1f1" stroke-width="1.500"/></svg>
<div style="left:2290px;top:1224px;width:1486.4px;height:698.4px;background:#1e1e1e;"></div>
<div style="left:2290px;top:1224px;width:27.7px;height:698.4px;background:#333333;"></div>
<div style="left:2438px;top:1252.6px;width:1336.5px;height:25.4px;background:#1e1e1e;border:2px solid #464646;"></div>
<span class="t fm" style="left:2340.72px;top:1228.9px;font-size:19.33px;line-height:19.33px;color:#2b91af;-webkit-text-stroke:0.35px;">370</span>
<span class="t fm" style="left:2340.72px;top:1256.5px;font-size:19.33px;line-height:19.33px;color:#2b91af;-webkit-text-stroke:0.35px;">371</span>
<span class="t fm" style="left:2439.8px;top:1256.5px;font-size:19.33px;line-height:19.33px;color:#dcdcdc;-webkit-text-stroke:0.35px;"><span style="color:#dcdcdc">    </span><span style="color:#4ec9b0">int32_t</span><span style="color:#dcdcdc"> </span><span style="color:#dcdcaa">FindSeekPosition</span><span style="color:#dcdcdc">(</span><span style="color:#4ec9b0">mxf_dmuxer_seek</span><span style="color:#b4b4b4">*</span><span style="color:#dcdcdc"> </span><span style="color:#9a9a9a">pseek</span><span style="color:#dcdcdc">, </span><span style="color:#4ec9b0">uint32_t</span><span style="color:#dcdcdc"> </span><span style="color:#9a9a9a">IndexSID</span><span style="color:#dcdcdc">, </span><span style="color:#4ec9b0">CMxfIndexSegment</span><span style="color:#b4b4b4">**</span><span style="color:#dcdcdc"> </span><span style="color:#9a9a9a">ppIdxSegment</span><span style="color:#b4b4b4">=</span><span style="color:#bcc8f2">NULL</span><span style="color:#dcdcdc">)</span></span>
<span class="t fm" style="left:2340.72px;top:1284.1px;font-size:19.33px;line-height:19.33px;color:#2b91af;-webkit-text-stroke:0.35px;">372</span>
<span class="t fm" style="left:2439.8px;top:1284.1px;font-size:19.33px;line-height:19.33px;color:#dcdcdc;-webkit-text-stroke:0.35px;"><span style="color:#dcdcdc">    {</span></span>
<span class="t fm" style="left:2340.72px;top:1311.7px;font-size:19.33px;line-height:19.33px;color:#2b91af;-webkit-text-stroke:0.35px;">373</span>
<span class="t fm" style="left:2439.8px;top:1311.7px;font-size:19.33px;line-height:19.33px;color:#dcdcdc;-webkit-text-stroke:0.35px;"><span style="color:#dcdcdc">        </span><span style="color:#bcc8f2">LOG_TRACE</span><span style="color:#dcdcdc">();</span></span>
<span class="t fm" style="left:2340.72px;top:1339.3px;font-size:19.33px;line-height:19.33px;color:#2b91af;-webkit-text-stroke:0.35px;">374</span>
<span class="t fm" style="left:2439.8px;top:1339.3px;font-size:19.33px;line-height:19.33px;color:#dcdcdc;-webkit-text-stroke:0.35px;"><span style="color:#dcdcdc">        </span><span style="color:#4ec9b0">int32_t</span><span style="color:#dcdcdc"> </span><span style="color:#9cdcfe">r</span><span style="color:#dcdcdc">;</span></span>
<span class="t fm" style="left:2340.72px;top:1366.9px;font-size:19.33px;line-height:19.33px;color:#2b91af;-webkit-text-stroke:0.35px;">375</span>
<span class="t fm" style="left:2439.8px;top:1366.9px;font-size:19.33px;line-height:19.33px;color:#dcdcdc;-webkit-text-stroke:0.35px;"><span style="color:#dcdcdc">        </span><span style="color:#d8a0df">if</span><span style="color:#dcdcdc">(!</span><span style="color:#9a9a9a">pseek</span><span style="color:#dcdcdc"> ) </span><span style="color:#d8a0df">return</span><span style="color:#dcdcdc"> </span><span style="color:#bcc8f2">MCD_E_POINTER</span><span style="color:#dcdcdc">;</span></span>
<span class="t fm" style="left:2340.72px;top:1394.5px;font-size:19.33px;line-height:19.33px;color:#2b91af;-webkit-text-stroke:0.35px;">376</span>
<span class="t fm" style="left:2439.8px;top:1394.5px;font-size:19.33px;line-height:19.33px;color:#dcdcdc;-webkit-text-stroke:0.35px;"><span style="color:#dcdcdc">        </span><span style="color:#bcc8f2">LOG_DEBUG</span><span style="color:#dcdcdc">(</span><span style="color:#d69d85">"Find seek position for IndexSID %d, start_pos=%.0f"</span><span style="color:#dcdcdc">, </span><span style="color:#9a9a9a">IndexSID</span><span style="color:#dcdcdc">, (</span><span style="color:#569cd6">double</span><span style="color:#dcdcdc">)</span><span style="color:#9a9a9a">pseek</span><span style="color:#b4b4b4">-&gt;</span><span style="color:#dcdcdc">start_pos</span><span style="color:#dcdcdc">);</span></span>
<span class="t fm" style="left:2340.72px;top:1422.1px;font-size:19.33px;line-height:19.33px;color:#2b91af;-webkit-text-stroke:0.35px;">377</span>
<span class="t fm" style="left:2439.8px;top:1422.1px;font-size:19.33px;line-height:19.33px;color:#dcdcdc;-webkit-text-stroke:0.35px;"><span style="color:#dcdcdc">        </span><span style="color:#4ec9b0">TIndexSegments</span><span style="color:#b4b4b4">*</span><span style="color:#dcdcdc"> </span><span style="color:#9cdcfe">pSegments</span><span style="color:#b4b4b4"> = </span><span style="color:#dcdcaa">GetSegments</span><span style="color:#dcdcdc">(</span><span style="color:#9a9a9a">IndexSID</span><span style="color:#dcdcdc">, </span><span style="color:#569cd6">false</span><span style="color:#dcdcdc">);</span></span>
<span class="t fm" style="left:2340.72px;top:1449.7px;font-size:19.33px;line-height:19.33px;color:#2b91af;-webkit-text-stroke:0.35px;">378</span>
<span class="t fm" style="left:2439.8px;top:1449.7px;font-size:19.33px;line-height:19.33px;color:#dcdcdc;-webkit-text-stroke:0.35px;"><span style="color:#dcdcdc">        </span><span style="color:#d8a0df">if</span><span style="color:#dcdcdc"> (!</span><span style="color:#9cdcfe">pSegments</span><span style="color:#dcdcdc">)</span></span>
<span class="t fm" style="left:2340.72px;top:1477.3px;font-size:19.33px;line-height:19.33px;color:#2b91af;-webkit-text-stroke:0.35px;">379</span>
<span class="t fm" style="left:2439.8px;top:1477.3px;font-size:19.33px;line-height:19.33px;color:#dcdcdc;-webkit-text-stroke:0.35px;"><span style="color:#dcdcdc">        {</span></span>
<span class="t fm" style="left:2340.72px;top:1504.9px;font-size:19.33px;line-height:19.33px;color:#2b91af;-webkit-text-stroke:0.35px;">380</span>
<span class="t fm" style="left:2439.8px;top:1504.9px;font-size:19.33px;line-height:19.33px;color:#dcdcdc;-webkit-text-stroke:0.35px;"><span style="color:#dcdcdc">            </span><span style="color:#dcdcaa">LogError</span><span style="color:#dcdcdc">(</span><span style="color:#d69d85">"No index segments available"</span><span style="color:#dcdcdc">);</span></span>
<span class="t fm" style="left:2340.72px;top:1532.5px;font-size:19.33px;line-height:19.33px;color:#2b91af;-webkit-text-stroke:0.35px;">381</span>
<span class="t fm" style="left:2439.8px;top:1532.5px;font-size:19.33px;line-height:19.33px;color:#dcdcdc;-webkit-text-stroke:0.35px;"><span style="color:#dcdcdc">            </span><span style="color:#d8a0df">return</span><span style="color:#dcdcdc"> </span><span style="color:#bcc8f2">MCD_E_NODATA</span><span style="color:#dcdcdc">;</span></span>
<span class="t fm" style="left:2340.72px;top:1560.1px;font-size:19.33px;line-height:19.33px;color:#2b91af;-webkit-text-stroke:0.35px;">382</span>
<span class="t fm" style="left:2439.8px;top:1560.1px;font-size:19.33px;line-height:19.33px;color:#dcdcdc;-webkit-text-stroke:0.35px;"><span style="color:#dcdcdc">        }</span></span>
<span class="t fm" style="left:2340.72px;top:1587.7px;font-size:19.33px;line-height:19.33px;color:#2b91af;-webkit-text-stroke:0.35px;">383</span>
<span class="t fm" style="left:2439.8px;top:1587.7px;font-size:19.33px;line-height:19.33px;color:#dcdcdc;-webkit-text-stroke:0.35px;"><span style="color:#dcdcdc">        </span><span style="color:#4ec9b0">int32_t</span><span style="color:#dcdcdc"> </span><span style="color:#9cdcfe">n</span><span style="color:#b4b4b4"> = </span><span style="color:#9cdcfe">pSegments</span><span style="color:#b4b4b4">-&gt;</span><span style="color:#dcdcaa">GetCount</span><span style="color:#dcdcdc">();</span></span>
<span class="t fm" style="left:2340.72px;top:1615.3px;font-size:19.33px;line-height:19.33px;color:#2b91af;-webkit-text-stroke:0.35px;">384</span>
<span class="t fm" style="left:2439.8px;top:1615.3px;font-size:19.33px;line-height:19.33px;color:#dcdcdc;-webkit-text-stroke:0.35px;"><span style="color:#dcdcdc">        </span><span style="color:#bcc8f2">LOG_DEBUG</span><span style="color:#dcdcdc">(</span><span style="color:#d69d85">"%d segments in list"</span><span style="color:#dcdcdc">, </span><span style="color:#9cdcfe">n</span><span style="color:#dcdcdc">);</span></span>
<span class="t fm" style="left:2340.72px;top:1642.9px;font-size:19.33px;line-height:19.33px;color:#2b91af;-webkit-text-stroke:0.35px;">385</span>
<span class="t fm" style="left:2439.8px;top:1642.9px;font-size:19.33px;line-height:19.33px;color:#dcdcdc;-webkit-text-stroke:0.35px;"><span style="color:#dcdcdc">        </span><span style="color:#4ec9b0">CMxfIndexSegment</span><span style="color:#dcdcdc"> </span><span style="color:#b4b4b4">*</span><span style="color:#9cdcfe">pIdxSegment</span><span style="color:#dcdcdc">, </span><span style="color:#b4b4b4">*</span><span style="color:#9cdcfe">pIdxSegmentPrev</span><span style="color:#dcdcdc">, </span><span style="color:#b4b4b4">*</span><span style="color:#9cdcfe">pIdxSegmentNext</span><span style="color:#dcdcdc">;</span></span>
<span class="t fm" style="left:2340.72px;top:1670.5px;font-size:19.33px;line-height:19.33px;color:#2b91af;-webkit-text-stroke:0.35px;">386</span>
<span class="t fm" style="left:2439.8px;top:1670.5px;font-size:19.33px;line-height:19.33px;color:#dcdcdc;-webkit-text-stroke:0.35px;"><span style="color:#dcdcdc">        </span><span style="color:#d8a0df">if</span><span style="color:#dcdcdc"> (</span><span style="color:#9a9a9a">ppIdxSegment</span><span style="color:#dcdcdc">)</span></span>
<span class="t fm" style="left:2340.72px;top:1698.1px;font-size:19.33px;line-height:19.33px;color:#2b91af;-webkit-text-stroke:0.35px;">387</span>
<span class="t fm" style="left:2439.8px;top:1698.1px;font-size:19.33px;line-height:19.33px;color:#dcdcdc;-webkit-text-stroke:0.35px;"><span style="color:#dcdcdc">            </span><span style="color:#b4b4b4">*</span><span style="color:#9a9a9a">ppIdxSegment</span><span style="color:#b4b4b4"> = </span><span style="color:#bcc8f2">NULL</span><span style="color:#dcdcdc">;</span></span>
<span class="t fm" style="left:2340.72px;top:1725.7px;font-size:19.33px;line-height:19.33px;color:#2b91af;-webkit-text-stroke:0.35px;">388</span>
<span class="t fm" style="left:2439.8px;top:1725.7px;font-size:19.33px;line-height:19.33px;color:#dcdcdc;-webkit-text-stroke:0.35px;"><span style="color:#dcdcdc">        </span><span style="color:#9cdcfe">r</span><span style="color:#b4b4b4"> = </span><span style="color:#dcdcaa">FindIndexSegment</span><span style="color:#dcdcdc">(</span><span style="color:#9cdcfe">pSegments</span><span style="color:#dcdcdc">, </span><span style="color:#9a9a9a">pseek</span><span style="color:#dcdcdc">, </span><span style="color:#b4b4b4">&amp;</span><span style="color:#9cdcfe">pIdxSegment</span><span style="color:#dcdcdc">, </span><span style="color:#b4b4b4">&amp;</span><span style="color:#9cdcfe">pIdxSegmentPrev</span><span style="color:#dcdcdc">, </span><span style="color:#b4b4b4">&amp;</span><span style="color:#9cdcfe">pIdxSegmentNext</span><span style="color:#dcdcdc">);</span></span>
<span class="t fm" style="left:2340.72px;top:1753.3px;font-size:19.33px;line-height:19.33px;color:#2b91af;-webkit-text-stroke:0.35px;">389</span>
<span class="t fm" style="left:2439.8px;top:1753.3px;font-size:19.33px;line-height:19.33px;color:#dcdcdc;-webkit-text-stroke:0.35px;"><span style="color:#dcdcdc">        </span><span style="color:#d8a0df">if</span><span style="color:#dcdcdc">(</span><span style="color:#bcc8f2">MCD_OK</span><span style="color:#b4b4b4">==</span><span style="color:#9cdcfe">r</span><span style="color:#dcdcdc">)</span></span>
<span class="t fm" style="left:2340.72px;top:1780.9px;font-size:19.33px;line-height:19.33px;color:#2b91af;-webkit-text-stroke:0.35px;">390</span>
<span class="t fm" style="left:2439.8px;top:1780.9px;font-size:19.33px;line-height:19.33px;color:#dcdcdc;-webkit-text-stroke:0.35px;"><span style="color:#dcdcdc">        {</span></span>
<span class="t fm" style="left:2340.72px;top:1808.5px;font-size:19.33px;line-height:19.33px;color:#2b91af;-webkit-text-stroke:0.35px;">391</span>
<span class="t fm" style="left:2439.8px;top:1808.5px;font-size:19.33px;line-height:19.33px;color:#dcdcdc;-webkit-text-stroke:0.35px;"><span style="color:#dcdcdc">            </span><span style="color:#bcc8f2">LOG_DEBUG</span><span style="color:#dcdcdc">(</span><span style="color:#d69d85">"Index segment found, start pos %.0f"</span><span style="color:#dcdcdc">, (</span><span style="color:#569cd6">double</span><span style="color:#dcdcdc">)</span><span style="color:#9cdcfe">pIdxSegment</span><span style="color:#b4b4b4">-&gt;</span><span style="color:#dcdcaa">GetStartPos</span><span style="color:#dcdcdc">());</span></span>
<span class="t fm" style="left:2340.72px;top:1836.1px;font-size:19.33px;line-height:19.33px;color:#2b91af;-webkit-text-stroke:0.35px;">392</span>
<span class="t fm" style="left:2439.8px;top:1836.1px;font-size:19.33px;line-height:19.33px;color:#dcdcdc;-webkit-text-stroke:0.35px;"><span style="color:#dcdcdc">            </span><span style="color:#9cdcfe">r</span><span style="color:#b4b4b4"> = </span><span style="color:#9cdcfe">pIdxSegment</span><span style="color:#b4b4b4">-&gt;</span><span style="color:#dcdcaa">FindSeekPosition</span><span style="color:#dcdcdc">(</span><span style="color:#9a9a9a">pseek</span><span style="color:#dcdcdc">, </span><span style="color:#9cdcfe">pIdxSegmentPrev</span><span style="color:#dcdcdc">, </span><span style="color:#9cdcfe">pIdxSegmentNext</span><span style="color:#dcdcdc">);</span></span>
<span class="t fm" style="left:2340.72px;top:1863.7px;font-size:19.33px;line-height:19.33px;color:#2b91af;-webkit-text-stroke:0.35px;">393</span>
<span class="t fm" style="left:2439.8px;top:1863.7px;font-size:19.33px;line-height:19.33px;color:#dcdcdc;-webkit-text-stroke:0.35px;"><span style="color:#dcdcdc">            </span><span style="color:#d8a0df">if</span><span style="color:#dcdcdc">(</span><span style="color:#bcc8f2">MCD_OK</span><span style="color:#b4b4b4">==</span><span style="color:#9cdcfe">r</span><span style="color:#dcdcdc">)</span></span>
<span class="t fm" style="left:2340.72px;top:1891.3px;font-size:19.33px;line-height:19.33px;color:#2b91af;-webkit-text-stroke:0.35px;">394</span>
<span class="t fm" style="left:2439.8px;top:1891.3px;font-size:19.33px;line-height:19.33px;color:#dcdcdc;-webkit-text-stroke:0.35px;"><span style="color:#dcdcdc">            {</span></span>
<span class="t fm" style="left:2340.72px;top:1918.9px;font-size:19.33px;line-height:19.33px;color:#2b91af;-webkit-text-stroke:0.35px;">395</span>
<span class="t fm" style="left:2439.8px;top:1918.9px;font-size:19.33px;line-height:19.33px;color:#dcdcdc;-webkit-text-stroke:0.35px;"><span style="color:#dcdcdc">                </span><span style="color:#d8a0df">if</span><span style="color:#dcdcdc"> (</span><span style="color:#9a9a9a">ppIdxSegment</span><span style="color:#dcdcdc">)</span></span>
<div style="left:2429.4px;top:1224px;width:1.3px;height:698px;background:#a0a0a0;"></div>
<div style="left:2443.7px;top:1224px;width:1.6px;height:698px;background:repeating-linear-gradient(180deg,#9a9a9a 0 3.500px,transparent 3.500px 6px);"></div>
<div style="left:2490.6px;top:1308px;width:1.6px;height:614px;background:repeating-linear-gradient(180deg,#7a7a7a 0 3.500px,transparent 3.500px 6px);"></div>
<div style="left:2537.2px;top:1501.2px;width:1.6px;height:56.8px;background:repeating-linear-gradient(180deg,#7a7a7a 0 3.500px,transparent 3.500px 6px);"></div>
<div style="left:2537.2px;top:1804.8px;width:1.6px;height:117.2px;background:repeating-linear-gradient(180deg,#7a7a7a 0 3.500px,transparent 3.500px 6px);"></div>
<div style="left:2583.5px;top:1915.2px;width:1.6px;height:6.8px;background:repeating-linear-gradient(180deg,#7a7a7a 0 3.500px,transparent 3.500px 6px);"></div>
<svg style="left:2422.3px;top:1260.9px;" width="13" height="13" viewBox="0 0 13 13"><rect x=".8" y=".8" width="11.400" height="11.400" fill="#1e1e1e" stroke="#a0a0a0" stroke-width="1.400"/><path d="M3 6.500h7" stroke="#e0e0e0" stroke-width="1.400"/></svg>
<svg style="left:2422.3px;top:1454.1px;" width="13" height="13" viewBox="0 0 13 13"><rect x=".8" y=".8" width="11.400" height="11.400" fill="#1e1e1e" stroke="#a0a0a0" stroke-width="1.400"/><path d="M3 6.500h7" stroke="#e0e0e0" stroke-width="1.400"/></svg>
<svg style="left:2422.3px;top:1757.7px;" width="13" height="13" viewBox="0 0 13 13"><rect x=".8" y=".8" width="11.400" height="11.400" fill="#1e1e1e" stroke="#a0a0a0" stroke-width="1.400"/><path d="M3 6.500h7" stroke="#e0e0e0" stroke-width="1.400"/></svg>
<svg style="left:2422.3px;top:1868.1px;" width="13" height="13" viewBox="0 0 13 13"><rect x=".8" y=".8" width="11.400" height="11.400" fill="#1e1e1e" stroke="#a0a0a0" stroke-width="1.400"/><path d="M3 6.500h7" stroke="#e0e0e0" stroke-width="1.400"/></svg>
<div style="left:2429.4px;top:1579px;width:5px;height:1.3px;background:#a0a0a0;"></div>
<div style="left:2290px;top:1922.4px;width:1510px;height:22.5px;background:#2d2d30;"></div>
<div style="left:3776.4px;top:1224px;width:23.6px;height:698.4px;background:#3e3e42;"></div>
<svg style="left:3781px;top:1233.5px;" width="10" height="6" viewBox="0 0 10 6"><path d="M0 6h10L5 0z" fill="#999"/></svg>
<svg style="left:3781px;top:1908px;" width="10" height="6" viewBox="0 0 10 6"><path d="M0 0h10L5 6z" fill="#999"/></svg>
<div style="left:3776.4px;top:1503.5px;width:23.6px;height:2px;background:#e8e8e8;"></div>
<div style="left:3781px;top:1506px;width:14px;height:15.5px;background:#686868;"></div>
<div style="left:3793.5px;top:1281px;width:5.5px;height:6.5px;background:#5aa55a;"></div>
<div style="left:3793.5px;top:1397.5px;width:5.5px;height:6.5px;background:#5aa55a;"></div>
<span class="t fs" style="left:3768.45px;top:1214.21px;font-size:15.5px;line-height:15.5px;color:#d0d0d0;transform:rotate(90deg) scaleX(0.9203);transform-origin:50% 50%;">Server Explorer</span>
<div style="left:3832px;top:1170.4px;width:7px;height:101.1px;background:#3f3f46;"></div>
<span class="t fs" style="left:3791.5px;top:1305.76px;font-size:15.5px;line-height:15.5px;color:#d0d0d0;transform:rotate(90deg) scaleX(0.9611);transform-origin:50% 50%;">Toolbox</span>
<div style="left:3832px;top:1285px;width:7px;height:55px;background:#3f3f46;"></div>
<span class="t fs" style="left:3785px;top:1381.76px;font-size:15.5px;line-height:15.5px;color:#d0d0d0;transform:rotate(90deg) scaleX(0.9342);transform-origin:50% 50%;">Properties</span>
<div style="left:3832px;top:1354.5px;width:7px;height:68px;background:#3f3f46;"></div>
<div style="left:2290px;top:1923.5px;width:1510px;height:21.5px;background:#3b3b3f;"></div>
<div style="left:2290px;top:1923.5px;width:75px;height:21.5px;background:#2d2d30;border:1px solid #434346;"></div>
<span class="t fs" style="left:2294.6px;top:1927.7px;font-size:15px;line-height:15px;color:#d0d0d0;transform:scaleX(0.8746);">130 %</span>
<svg style="left:2354.91px;top:1932.2px;" width="7" height="4.5" viewBox="0 0 7 4.5"><path d="M0 0h7L3.500 4.500z" fill="#d0d0d0"/></svg>
<svg style="left:2398px;top:1926.2px;" width="16" height="16" viewBox="0 0 16 16"><circle cx="8" cy="8" r="7.500" fill="#e5482b"/><path d="M5 5l6 6M11 5l-6 6" stroke="#fff" stroke-width="1.800"/></svg>
<span class="t fs" style="left:2419.5px;top:1927.7px;font-size:15px;line-height:15px;color:#d0d0d0;transform:scaleX(0.8990);">0</span>
<svg style="left:2455px;top:1926.2px;" width="17" height="16" viewBox="0 0 17 16"><path d="M8.500 .5l8 15H.5z" fill="#f5c542"/><path d="M8.500 5.500v5.500" stroke="#222" stroke-width="1.800"/><circle cx="8.500" cy="13" r="1" fill="#222"/></svg>
<span class="t fs" style="left:2476.5px;top:1927.7px;font-size:15px;line-height:15px;color:#d0d0d0;transform:scaleX(0.8990);">3</span>
<svg style="left:2523px;top:1928.2px;" width="15" height="12" viewBox="0 0 15 12"><path d="M15 6H1.500M6.500 1l-5 5 5 5" fill="none" stroke="#3794ff" stroke-width="1.800"/></svg>
<svg style="left:2559px;top:1928.2px;" width="15" height="12" viewBox="0 0 15 12"><path d="M0 6h13.500M8.500 1l5 5-5 5" fill="none" stroke="#3794ff" stroke-width="1.800"/></svg>
<div style="left:2611px;top:1924px;width:925px;height:20.5px;background:#3e3e42;"></div>
<svg style="left:2615.5px;top:1929.7px;" width="6" height="9" viewBox="0 0 6 9"><path d="M6 0v9L0 4.500z" fill="#999"/></svg>
<div style="left:2629.3px;top:1928.5px;width:494.7px;height:10.5px;background:#686868;"></div>
<svg style="left:3526px;top:1929.7px;" width="6" height="9" viewBox="0 0 6 9"><path d="M0 0v9l6-4.500z" fill="#999"/></svg>
<span class="t fs" style="left:3567.3px;top:1927.94px;font-size:14.5px;line-height:14.5px;color:#d0d0d0;transform:scaleX(0.9157);">Ln: 371</span>
<span class="t fs" style="left:3636.2px;top:1927.94px;font-size:14.5px;line-height:14.5px;color:#d0d0d0;transform:scaleX(0.9412);">Ch: 110</span>
<span class="t fs" style="left:3708px;top:1927.94px;font-size:14.5px;line-height:14.5px;color:#d0d0d0;transform:scaleX(0.8049);">SPC</span>
<span class="t fs" style="left:3757.3px;top:1927.94px;font-size:14.5px;line-height:14.5px;color:#d0d0d0;transform:scaleX(0.8108);">CRLF</span>
<div style="left:2290px;top:1954px;width:1510px;height:67px;background:#252526;border:1px solid #3f3f46;border-top:none;"></div>
<div style="left:2290px;top:1954px;width:1510px;height:28px;background:#2d2d30;"></div>
<span class="t fs" style="left:2294.2px;top:1961.46px;font-size:15.5px;line-height:15.5px;color:#d0d0d0;transform:scaleX(0.9843);">Output</span>
<div style="left:2350px;top:1964.5px;width:1390px;height:7.5px;background:radial-gradient(circle at 0.700px 0.700px,#424246 0.750px,transparent 0.900px) 0 0/4px 5px,radial-gradient(circle at 0.700px 0.700px,#424246 0.750px,transparent 0.900px) 2px 2.500px/4px 5px;"></div>
<svg style="left:3738.5px;top:1965.5px;" width="9" height="5" viewBox="0 0 9 5"><path d="M0 0h9L4.500 5z" fill="#f1f1f1"/></svg>
<svg style="left:3759px;top:1960px;" width="9" height="14" viewBox="0 0 9 14"><path d="M2 .7h5v6.500H2zM0 7.500h9M4.500 7.500v6" fill="none" stroke="#f1f1f1" stroke-width="1.300"/><path d="M5.500 1v6" stroke="#f1f1f1" stroke-width="1.600"/></svg>
<svg style="left:3780px;top:1962.5px;" width="10" height="10" viewBox="0 0 10 10"><path d="M.5.500l9 9M9.500.500l-9 9" stroke="#f1f1f1" stroke-width="1.500"/></svg>
<div style="left:2291px;top:1982px;width:1508px;height:30.5px;background:#2d2d30;"></div>
<span class="t fs" style="left:2299px;top:1991.26px;font-size:15.5px;line-height:15.5px;color:#f1f1f1;transform:scaleX(0.9810);">Show output from:</span>
<div style="left:2299px;top:2005.8px;width:7.5px;height:1px;background:#f1f1f1;"></div>
<div style="left:2429.9px;top:1985px;width:375px;height:23.5px;background:#333337;border:1px solid #434346;"></div>
<svg style="left:2793.91px;top:1995.5px;" width="7" height="4.5" viewBox="0 0 7 4.5"><path d="M0 0h7L3.500 4.500z" fill="#999"/></svg>
<div style="left:2814.41px;top:1986px;width:1px;height:21px;background:#46464a;"></div>
<div style="left:2850.93px;top:1986px;width:1px;height:21px;background:#46464a;"></div>
<div style="left:2915.03px;top:1986px;width:1px;height:21px;background:#46464a;"></div>
<div style="left:2951.93px;top:1986px;width:1px;height:21px;background:#46464a;"></div>
<svg style="left:2826.34px;top:1988px;" width="16" height="16" viewBox="0 0 16 16"><path d="M2 3h6M1 12h14M1 15h14" stroke="#555" stroke-width="1.300"/><path d="M9 1l-3 3 3 3" fill="none" stroke="#555" stroke-width="1.200"/></svg>
<svg style="left:2862.86px;top:1988px;" width="16" height="16" viewBox="0 0 16 16"><path d="M2 3h6M1 12h14M1 15h14" stroke="#555" stroke-width="1.300"/><path d="M9 1l-3 3 3 3" fill="none" stroke="#555" stroke-width="1.200"/></svg>
<svg style="left:2888.2px;top:1988px;" width="16" height="16" viewBox="0 0 16 16"><path d="M1 3h6M1 12h14M1 15h14" stroke="#555" stroke-width="1.300"/><path d="M10 1l3 3-3 3" fill="none" stroke="#555" stroke-width="1.200"/></svg>
<svg style="left:2923.98px;top:1988px;" width="17" height="16" viewBox="0 0 17 16"><path d="M1 1l5 5M6 1L1 6" stroke="#555" stroke-width="1.200"/><path d="M9 3h7M9 6h7M1 9h15M1 12h15M1 15h15" stroke="#555" stroke-width="1.300"/></svg>
<svg style="left:2960.12px;top:1988px;" width="19" height="17" viewBox="0 0 19 17"><text x="0" y="7" font-size="8.500" font-family="Liberation Sans" fill="#d0d0d0">ab</text><text x="0" y="15" font-size="8.500" font-family="Liberation Sans" fill="#d0d0d0">c</text><path d="M17 4v8H8M11 9l-3 3 3 3" fill="none" stroke="#d0d0d0" stroke-width="1.600"/></svg>
<div style="left:2323.6px;top:2021px;width:58.6px;height:24.5px;background:#252526;border:1px solid #3f3f46;border-top:none;"></div>
<span class="t fs" style="left:2329.94px;top:2027.06px;font-size:15.5px;line-height:15.5px;color:#0097fb;transform:scaleX(0.9851);">Output</span>
<span class="t fs" style="left:2390.4px;top:2027.06px;font-size:15.5px;line-height:15.5px;color:#d0d0d0;transform:scaleX(0.9259);">Find Symbol Results</span>
<div style="left:1919px;top:2052.8px;width:1921px;height:30.3px;background:#007acc;"></div>
<svg style="left:1926px;top:2062px;" width="20" height="13" viewBox="0 0 20 13"><path d="M3.500 .8h15.500l-3 11.400H.8z" fill="none" stroke="#fff" stroke-width="1.500"/></svg>
<span class="t fs" style="left:1955.4px;top:2061.46px;font-size:15.5px;line-height:15.5px;color:#fff;transform:scaleX(0.9061);">Ready</span>
<svg style="left:3564.5px;top:2061px;" width="11" height="14" viewBox="0 0 11 14"><path d="M5.500 14V1.500M1 6l4.500-4.500L10 6" fill="none" stroke="#fff" stroke-width="1.800"/></svg>
<span class="t fs" style="left:3587.8px;top:2061.46px;font-size:15.5px;line-height:15.5px;color:#fff;transform:scaleX(0.9600);">Add to Source Control</span>
<svg style="left:3744px;top:2065.5px;" width="9" height="5" viewBox="0 0 9 5"><path d="M0 5h9L4.500 0z" fill="#fff"/></svg>
<svg style="left:3778px;top:2060px;" width="17" height="18" viewBox="0 0 17 18"><path d="M8.500 1c-4 0-5.500 3-5.500 6v3.500L.8 13.500h15.400L14 10.500V7c0-3-1.500-6-5.500-6z" fill="#fff"/><path d="M6 15a2.500 2.500 0 0 0 5 0z" fill="#fff"/></svg>
<svg style="left:3826px;top:2070px;" width="11" height="11" viewBox="0 0 11 11"><rect x="8" y="0" width="1.500" height="1.500" fill="#80bde6"/><rect x="4" y="4" width="1.500" height="1.500" fill="#80bde6"/><rect x="8" y="4" width="1.500" height="1.500" fill="#80bde6"/><rect x="0" y="8" width="1.500" height="1.500" fill="#80bde6"/><rect x="4" y="8" width="1.500" height="1.500" fill="#80bde6"/><rect x="8" y="8" width="1.500" height="1.500" fill="#80bde6"/></svg>
<div style="left:0px;top:2083px;width:3840px;height:77px;background:#3a2721;"></div>
<svg style="left:12px;top:2111px;" width="20" height="20" viewBox="0 0 20 20"><path d="M0 2.800L8.200 1.700v7.800H0zM9.200 1.500L20 0v9.500H9.200zM0 10.500h8.200v7.800L0 17.200zM9.200 10.500H20V20L9.200 18.500z" fill="#fff"/></svg>
<svg style="left:56px;top:2110px;" width="22" height="22" viewBox="0 0 22 22"><circle cx="13" cy="8.500" r="7" fill="none" stroke="#fff" stroke-width="1.500"/><path d="M8 13.500L1 21" stroke="#fff" stroke-width="1.500"/></svg>
<svg style="left:101px;top:2110px;" width="21" height="22" viewBox="0 0 21 22"><rect x="3" y="6" width="11" height="10" fill="none" stroke="#fff" stroke-width="1.400"/><path d="M.5 2h14M.5 20h14M18.500 1v6M18.500 11v10" stroke="#fff" stroke-width="1.400"/><rect x="17.500" y="8" width="2" height="2" fill="#fff"/></svg>
<svg style="left:138px;top:2089.8px;" width="20" height="20" viewBox="0 0 20 20"><path d="M14.500 0L20 2.500v15L14.500 20 5.500 11.500 2 14 0 13V7l2-1 3.500 2.500zM14.500 5.500L9 10l5.500 4.500zM2 8.200v3.600L4 10z" fill="#e8d8f8"/></svg>
<svg style="left:165.05px;top:2089.8px;" width="20" height="20" viewBox="0 0 20 20"><path d="M14.500 0L20 2.500v15L14.500 20 5.500 11.500 2 14 0 13V7l2-1 3.500 2.500zM14.500 5.500L9 10l5.500 4.500zM2 8.200v3.600L4 10z" fill="#7a5cc8"/></svg>
<svg style="left:192.1px;top:2089.8px;" width="20" height="20" viewBox="0 0 20 20"><path d="M14.500 0L20 2.500v15L14.500 20 5.500 11.500 2 14 0 13V7l2-1 3.500 2.500zM14.500 5.500L9 10l5.500 4.500zM2 8.200v3.600L4 10z" fill="#8a4cd6"/></svg>
<svg style="left:222.15px;top:2090.8px;" width="14" height="18" viewBox="0 0 14 18"><path d="M0 0h10l4 4v14H0z" fill="#f4f4f4"/><path d="M10 0v4h4" fill="#cfcfcf"/></svg>
<svg style="left:246.7px;top:2090.3px;" width="19" height="19" viewBox="0 0 20 20"><circle cx="10" cy="10" r="10" fill="#db4437"/><path d="M10 10L1.340 5A10 10 0 0 0 10 20z" fill="#0f9d58"/><path d="M10 10l-5 8.660A10 10 0 0 0 18.660 5z" fill="#ffcd40" transform="rotate(60 10 10)"/><path d="M10 10L1.340 5A10 10 0 0 1 18.660 5z" fill="#db4437"/><circle cx="10" cy="10" r="4.600" fill="#fff"/><circle cx="10" cy="10" r="3.700" fill="#4285f4"/></svg>
<svg style="left:273.25px;top:2089.8px;" width="20" height="20" viewBox="0 0 20 20"><circle cx="10" cy="10.500" r="9.300" fill="#ff7a1a"/><path d="M3 4c3-3 10-4 14 1 3 5 1 11-4 13 3-3 3-7 1-9-1 2-3 2-4 1 0-3-3-4-7-6z" fill="#ffcb3a"/><circle cx="9.500" cy="11.500" r="4.800" fill="#6a3cc8"/></svg>
<svg style="left:300.3px;top:2089.8px;" width="20" height="20" viewBox="0 0 20 20"><rect width="20" height="20" fill="#f0d8a0" stroke="#fff" stroke-width="1.500" stroke-dasharray="2 1"/><path d="M2 6l4 2 2-3 2 2 2-2 2 3 4-2-2 9c-2-2-3 0-4 1-1-1-2-1-2 0-1-1-2-3-4-1z" fill="#1a1a1a"/></svg>
<svg style="left:327.35px;top:2090.8px;" width="20" height="18" viewBox="0 0 20 18"><rect x="6" y="0" width="14" height="18" rx="1.500" fill="#28a8ea"/><rect x="6" y="9" width="14" height="9" fill="#0364b8"/><rect x="0" y="3.500" width="11" height="11" rx="1" fill="#0a5cbd"/><circle cx="5.500" cy="9" r="2.800" fill="none" stroke="#fff" stroke-width="1.600"/></svg>
<svg style="left:356.4px;top:2089.8px;" width="16" height="20" viewBox="0 0 16 20"><rect width="16" height="20" rx="1.500" fill="#4a4a4a" stroke="#8a8a8a"/><rect x="3" y="2.500" width="10" height="4.500" fill="#e8e8e8"/><rect x="3.0" y="9.5" width="2.500" height="2" fill="#d8d8d8"/><rect x="6.7" y="9.5" width="2.500" height="2" fill="#d8d8d8"/><rect x="10.4" y="9.5" width="2.500" height="2" fill="#d8d8d8"/><rect x="3.0" y="12.7" width="2.500" height="2" fill="#d8d8d8"/><rect x="6.7" y="12.7" width="2.500" height="2" fill="#d8d8d8"/><rect x="10.4" y="12.7" width="2.500" height="2" fill="#d8d8d8"/><rect x="3.0" y="15.9" width="2.500" height="2" fill="#d8d8d8"/><rect x="6.7" y="15.9" width="2.500" height="2" fill="#d8d8d8"/><rect x="10.4" y="15.9" width="2.500" height="2" fill="#d8d8d8"/></svg>
<svg style="left:381.45px;top:2090.8px;" width="20" height="18" viewBox="0 0 20 18"><path d="M6 0h12l-4 14H2z" fill="#b8d4e8"/><path d="M2 14h12l-1 3H0z" fill="#8aa8c0"/><path d="M8 2h8l-3 10H5z" fill="#e4f0f8"/></svg>
<svg style="left:408.5px;top:2089.8px;" width="20" height="20" viewBox="0 0 20 20"><rect width="20" height="20" fill="#2a5ad8"/><path d="M0 8c4-5 8 3 12-1s5 1 8-2v7H0z" fill="#9ad0ff"/><path d="M2 15h16M4 17h12" stroke="#cfe4ff" stroke-width="1.200"/></svg>
<svg style="left:434.55px;top:2092.8px;" width="22" height="14" viewBox="0 0 22 14"><path d="M1 8c4-6 14-8 20-3-2 6-12 9-20 3z" fill="#8a8a8a"/><circle cx="12" cy="6.500" r="3" fill="#2a2a2a"/><path d="M3 11l16 1" stroke="#555" stroke-width="1.500"/></svg>
<svg style="left:463.6px;top:2089.8px;" width="18" height="20" viewBox="0 0 18 20"><path d="M4 2l7 2v14l-7 2z" fill="#d84a2a"/><path d="M2 3l2-1v18l-2-1z" fill="#7a2a1a"/><path d="M12 6l4-3M13 10h5M12 14l4 3" stroke="#8a8a8a" stroke-width="1.400"/></svg>
<svg style="left:490.65px;top:2089.8px;" width="18" height="20" viewBox="0 0 18 20"><path d="M4 2l7 2v14l-7 2z" fill="#d84a2a"/><path d="M2 3l2-1v18l-2-1z" fill="#7a2a1a"/><path d="M12 6l4-3M13 10h5M12 14l4 3" stroke="#8a8a8a" stroke-width="1.400"/></svg>
<svg style="left:517.2px;top:2090.3px;" width="19" height="19" viewBox="0 0 19 19"><rect width="19" height="19" rx="3" fill="#e89a80"/><path d="M2 7c3-2 4 2 7 0s4 1 8-1M2 12c3-2 4 2 7 0s4 1 8-1" stroke="#c04a3a" stroke-width="2" fill="none"/></svg>
<svg style="left:544.25px;top:2090.3px;" width="19" height="19" viewBox="0 0 19 19"><rect width="19" height="19" rx="3" fill="#e89a80"/><path d="M2 7c3-2 4 2 7 0s4 1 8-1M2 12c3-2 4 2 7 0s4 1 8-1" stroke="#c04a3a" stroke-width="2" fill="none"/></svg>
<svg style="left:571.3px;top:2092.8px;" width="19" height="14" viewBox="0 0 19 14"><rect width="19" height="14" fill="#f4f4f4" stroke="#c8c8c8"/><rect x="2.500" y="3" width="8" height="7" fill="#1a6ac8"/><path d="M12 4h5M12 7h5M12 10h5" stroke="#8a8a8a"/></svg>
<svg style="left:597.85px;top:2089.8px;" width="20" height="20" viewBox="0 0 20 20"><rect width="20" height="20" fill="#2aa0a8"/><path d="M0 0h8L0 8z" fill="#1a1a1a"/><path d="M5 17V6l5 6 5-6v11" fill="none" stroke="#7a7a8a" stroke-width="2.600"/></svg>
<svg style="left:624.9px;top:2089.8px;" width="20" height="20" viewBox="0 0 20 20"><path d="M5 2l7 2v13l-7 2z" fill="#5a5ad8"/><path d="M0 10h20" stroke="#e83a2a" stroke-width="2"/><path d="M13 5l4-3M13 15l4 3M8 1v18" stroke="#8a8a8a" stroke-width="1.200"/></svg>
<svg style="left:138px;top:2125px;" width="20" height="18" viewBox="0 0 20 18"><path d="M10 1c6 0 10 3 10 8s-4 4-6 4-1 4-5 4C3 17 0 13 0 9s4-8 10-8z" fill="#e8d0a0"/><circle cx="5" cy="8" r="1.800" fill="#e83a2a"/><circle cx="9" cy="5" r="1.800" fill="#2a8ae8"/><circle cx="14" cy="6" r="1.800" fill="#3ab83a"/><path d="M12 16l7-13 1 .5-6 13z" fill="#c87a2a"/></svg>
<svg style="left:165.55px;top:2124.5px;" width="19" height="19" viewBox="0 0 19 19"><rect width="19" height="19" fill="#5a5a5a"/><rect x="1.500" y="1.500" width="7" height="7" fill="#9a9a9a"/><rect x="10.500" y="1.500" width="7" height="7" fill="#8a8a8a"/><rect x="1.500" y="10.500" width="7" height="7" fill="#7a7a7a"/><rect x="10.500" y="10.500" width="7" height="7" fill="#a8a8a8"/></svg>
<svg style="left:192.1px;top:2124px;" width="20" height="20" viewBox="0 0 20 20"><rect width="20" height="20" fill="#b8201a"/><text x="2" y="16" font-size="15" font-weight="bold" font-style="italic" font-family="Liberation Sans" fill="#fff">Fz</text></svg>
<svg style="left:219.15px;top:2124px;" width="20" height="21" viewBox="0 0 20 21"><path d="M10 .500c6 0 9.500 3 9.500 8.500s-3.500 8.500-9.500 8.500l-3 3v-3.500C2.500 16 .500 13 .500 9S4 .500 10 .500z" fill="#7a5ae0"/><path d="M6.500 5c-1 1-1 2.500 0 4.500s3 4 5 5c1.500.500 2.500 0 3-1l-2-2-1.500 1c-1.500-1-2.500-2-3.500-3.500l1-1.500z" fill="#fff"/></svg>
<svg style="left:246.2px;top:2125px;" width="20" height="18" viewBox="0 0 20 18"><rect x="8" y="0" width="11" height="8" fill="#2a5ad8" stroke="#c8c8c8"/><rect x="1" y="8" width="11" height="8" fill="#2a5ad8" stroke="#c8c8c8"/><path d="M3 7l6-4M11 15l6-5" stroke="#e8b020" stroke-width="1.600"/></svg>
<svg style="left:273.25px;top:2124px;" width="20" height="20" viewBox="0 0 20 20"><rect width="20" height="20" fill="#f0501e"/><path d="M4 10l4-4 4 4-4 4zM10 10l3-3 3 3-3 3z" fill="#fff"/></svg>
<svg style="left:301.3px;top:2124px;" width="18" height="20" viewBox="0 0 18 20"><path d="M2 0l4 5h6l4-5 1 10c0 6-4 10-8 10S0 16 1 10z" fill="#f4f4f4"/><path d="M4 10l3 1-1 3zM14 10l-3 1 1 3z" fill="#1a1a1a"/><path d="M8 15h2l-1 2z" fill="#1a1a1a"/></svg>
<svg style="left:330.35px;top:2124px;" width="15" height="20" viewBox="0 0 15 20"><path d="M1 1.500h12v17H1z" fill="#f0d080"/><path d="M1 1.500h3v17H1z" fill="#e0b850"/></svg>
<svg style="left:354.4px;top:2124px;" width="20" height="20" viewBox="0 0 20 20"><path d="M10 .500l9 4v11l-9 4-9-4v-11z" fill="#1a3a7a" stroke="#c8d8f0" stroke-width="1.200"/><path d="M1 4.500l9 4 9-4M10 8.500v11" fill="none" stroke="#c8d8f0" stroke-width="1.200"/></svg>
<svg style="left:381.45px;top:2126.5px;" width="20" height="15" viewBox="0 0 20 15"><rect width="20" height="15" fill="#f0f0f0" stroke="#c8c8c8"/><circle cx="8" cy="7" r="3" fill="none" stroke="#7a8a9a" stroke-width="1.400"/><circle cx="12" cy="9" r="2.500" fill="none" stroke="#9aaaba" stroke-width="1.200"/></svg>
<svg style="left:408.5px;top:2124px;" width="20" height="20" viewBox="0 0 20 20"><rect y="2" width="20" height="18" rx="3" fill="#e8a040"/><circle cx="9" cy="10" r="5" fill="#f8e0b0" stroke="#fff" stroke-width="1.500"/><path d="M12.500 13.500l5 5" stroke="#fff" stroke-width="2"/><path d="M12 0l3 3h-6z" fill="#8a8a8a"/></svg>
<svg style="left:435.55px;top:2124px;" width="20" height="20" viewBox="0 0 20 20"><circle cx="10" cy="10" r="9.500" fill="#2a7ad8"/><path d="M3 8c4-3 10-3 14 0M4 12c4-3 8-3 12 0" stroke="#a8d0f8" stroke-width="1.600" fill="none"/></svg>
<svg style="left:462.6px;top:2124px;" width="20" height="20" viewBox="0 0 20 20"><path d="M2 8a8 7 0 0 1 14-3" fill="none" stroke="#2ab86a" stroke-width="3.600"/><path d="M19 1v7h-7z" fill="#2ab86a"/><path d="M18 12a8 7 0 0 1-14 3" fill="none" stroke="#2ab86a" stroke-width="3.600"/><path d="M1 19v-7h7z" fill="#2ab86a"/></svg>
<div style="left:684px;top:2117.3px;width:183px;height:3px;background:#cfc9c6;"></div>
<svg style="left:688.5px;top:2092.4px;" width="19" height="19" viewBox="0 0 19 19"><circle cx="9.500" cy="9.500" r="9.500" fill="#fff"/><path d="M6 4v4M4 11h4M13 15v-4M15 8h-4" stroke-width="2.400" stroke-linecap="round" stroke="#36c5f0"/><path d="M4 11h4" stroke="#e01e5a" stroke-width="2.400" stroke-linecap="round"/><path d="M13 15v-4" stroke="#ecb22e" stroke-width="2.400" stroke-linecap="round"/><path d="M15 8h-4" stroke="#2eb67d" stroke-width="2.400" stroke-linecap="round"/></svg>
<span class="t fs" style="left:713px;top:2095.96px;font-size:15.5px;line-height:15.5px;color:#fff;transform:scaleX(0.9291);">Slack | * team-custo...</span>
<div style="left:878px;top:2117.3px;width:182.6px;height:3px;background:#cfc9c6;"></div>
<svg style="left:883.9px;top:2092.4px;" width="19" height="19" viewBox="0 0 19 19"><circle cx="9.500" cy="9.500" r="9.500" fill="#1a9ae8"/><text x="5.200" y="14.500" font-size="13.500" font-weight="bold" font-family="Liberation Sans" fill="#fff">S</text></svg>
<span class="t fs" style="left:906.8px;top:2095.96px;font-size:15.5px;line-height:15.5px;color:#fff;transform:scaleX(0.9393);">Skype [1]</span>
<div style="left:1071.8px;top:2117.3px;width:182.2px;height:3px;background:#cfc9c6;"></div>
<svg style="left:1077px;top:2091.9px;" width="20" height="20" viewBox="0 0 20 20"><circle cx="10" cy="10" r="10" fill="#5a65ea"/><path d="M5 6.500c3-1.500 7-1.500 10 0 1.500 2.500 2 5 2 7.500-1.500 1-2.500 1.500-4 2l-.8-1.500c-1.500.500-3 .500-4.400 0L7 16c-1.500-.500-2.500-1-4-2 0-2.500.5-5 2-7.500z" fill="#fff"/><ellipse cx="7.800" cy="11" rx="1.300" ry="1.500" fill="#5a65ea"/><ellipse cx="12.200" cy="11" rx="1.300" ry="1.500" fill="#5a65ea"/></svg>
<span class="t fs" style="left:1101.3px;top:2095.96px;font-size:15.5px;line-height:15.5px;color:#fff;transform:scaleX(0.9459);">Discord</span>
<div style="left:1264.9px;top:2117.3px;width:182.1px;height:3px;background:#cfc9c6;"></div>
<svg style="left:1270.3px;top:2092.4px;" width="19" height="19" viewBox="0 0 20 20"><circle cx="10" cy="10" r="10" fill="#db4437"/><path d="M10 10L1.340 5A10 10 0 0 0 10 20z" fill="#0f9d58"/><path d="M10 10l-5 8.660A10 10 0 0 0 18.660 5z" fill="#ffcd40" transform="rotate(60 10 10)"/><path d="M10 10L1.340 5A10 10 0 0 1 18.660 5z" fill="#db4437"/><circle cx="10" cy="10" r="4.600" fill="#fff"/><circle cx="10" cy="10" r="3.700" fill="#4285f4"/></svg>
<span class="t fs" style="left:1294px;top:2095.96px;font-size:15.5px;line-height:15.5px;color:#fff;transform:scaleX(0.9528);">Обсуждение монит...</span>
<div style="left:1456.8px;top:2117.3px;width:182.2px;height:3px;background:#cfc9c6;"></div>
<svg style="left:1462.5px;top:2092.4px;" width="19" height="19" viewBox="0 0 20 20"><circle cx="10" cy="10" r="10" fill="#db4437"/><path d="M10 10L1.340 5A10 10 0 0 0 10 20z" fill="#0f9d58"/><path d="M10 10l-5 8.660A10 10 0 0 0 18.660 5z" fill="#ffcd40" transform="rotate(60 10 10)"/><path d="M10 10L1.340 5A10 10 0 0 1 18.660 5z" fill="#db4437"/><circle cx="10" cy="10" r="4.600" fill="#fff"/><circle cx="10" cy="10" r="3.700" fill="#4285f4"/></svg>
<span class="t fs" style="left:1486px;top:2095.96px;font-size:15.5px;line-height:15.5px;color:#fff;transform:scaleX(0.9230);">[MCC-11376] Excepti...</span>
<div style="left:1648.8px;top:2117.3px;width:182.2px;height:3px;background:#cfc9c6;"></div>
<svg style="left:1654.2px;top:2092.4px;" width="19" height="19" viewBox="0 0 20 20"><circle cx="10" cy="10" r="10" fill="#db4437"/><path d="M10 10L1.340 5A10 10 0 0 0 10 20z" fill="#0f9d58"/><path d="M10 10l-5 8.660A10 10 0 0 0 18.660 5z" fill="#ffcd40" transform="rotate(60 10 10)"/><path d="M10 10L1.340 5A10 10 0 0 1 18.660 5z" fill="#db4437"/><circle cx="10" cy="10" r="4.600" fill="#fff"/><circle cx="10" cy="10" r="3.700" fill="#4285f4"/></svg>
<span class="t fs" style="left:1678px;top:2095.96px;font-size:15.5px;line-height:15.5px;color:#fff;transform:scaleX(0.9595);">Google Переводчик...</span>
<div style="left:1840.7px;top:2117.3px;width:182.2px;height:3px;background:#cfc9c6;"></div>
<svg style="left:1846.5px;top:2092.4px;" width="19" height="19" viewBox="0 0 20 20"><circle cx="10" cy="10" r="10" fill="#db4437"/><path d="M10 10L1.340 5A10 10 0 0 0 10 20z" fill="#0f9d58"/><path d="M10 10l-5 8.660A10 10 0 0 0 18.660 5z" fill="#ffcd40" transform="rotate(60 10 10)"/><path d="M10 10L1.340 5A10 10 0 0 1 18.660 5z" fill="#db4437"/><circle cx="10" cy="10" r="4.600" fill="#fff"/><circle cx="10" cy="10" r="3.700" fill="#4285f4"/></svg>
<span class="t fs" style="left:1869.8px;top:2095.96px;font-size:15.5px;line-height:15.5px;color:#fff;transform:scaleX(0.9500);">Характеристики Мо...</span>
<div style="left:2034px;top:2117.3px;width:182px;height:3px;background:#cfc9c6;"></div>
<svg style="left:2038.6px;top:2092.9px;" width="20" height="18" viewBox="0 0 20 18"><rect x="6" y="0" width="14" height="18" rx="1.500" fill="#28a8ea"/><rect x="6" y="9" width="14" height="9" fill="#0364b8"/><rect x="0" y="3.500" width="11" height="11" rx="1" fill="#0a5cbd"/><circle cx="5.500" cy="9" r="2.800" fill="none" stroke="#fff" stroke-width="1.600"/></svg>
<span class="t fs" style="left:2063px;top:2095.96px;font-size:15.5px;line-height:15.5px;color:#fff;transform:scaleX(0.8877);">JIRA - Ivan.Uskov@m...</span>
<div style="left:2227px;top:2117.3px;width:182px;height:3px;background:#cfc9c6;"></div>
<svg style="left:2231.3px;top:2092.9px;" width="20" height="18" viewBox="0 0 20 18"><path d="M10 1c6 0 10 3 10 8s-4 4-6 4-1 4-5 4C3 17 0 13 0 9s4-8 10-8z" fill="#e8d0a0"/><circle cx="5" cy="8" r="1.800" fill="#e83a2a"/><circle cx="9" cy="5" r="1.800" fill="#2a8ae8"/><circle cx="14" cy="6" r="1.800" fill="#3ab83a"/><path d="M12 16l7-15 1 .5-6 15z" fill="#c87a2a"/></svg>
<span class="t fs" style="left:2256.2px;top:2095.96px;font-size:15.5px;line-height:15.5px;color:#fff;transform:scaleX(0.9679);">Untitled - Paint</span>
<div style="left:2419.8px;top:2117.3px;width:182.2px;height:3px;background:#cfc9c6;"></div>
<svg style="left:2424.7px;top:2092.9px;" width="20" height="18" viewBox="0 0 20 18"><rect x="6" y="0" width="14" height="18" rx="1.500" fill="#21a366"/><rect x="6" y="9" width="14" height="9" fill="#107c41"/><rect x="0" y="3.500" width="11" height="11" rx="1" fill="#0e5c2f"/><path d="M3 6l5 6M8 6l-5 6" stroke="#fff" stroke-width="1.600"/></svg>
<span class="t fs" style="left:2449.2px;top:2095.96px;font-size:15.5px;line-height:15.5px;color:#fff;transform:scaleX(0.9333);">diagonals.xlsx - Excel</span>
<div style="left:2612px;top:2117.3px;width:182px;height:3px;background:#cfc9c6;"></div>
<svg style="left:2617px;top:2092.9px;" width="20" height="18" viewBox="0 0 20 18"><rect x="6" y="0" width="14" height="18" rx="1.500" fill="#21a366"/><rect x="6" y="9" width="14" height="9" fill="#107c41"/><rect x="0" y="3.500" width="11" height="11" rx="1" fill="#0e5c2f"/><path d="M3 6l5 6M8 6l-5 6" stroke="#fff" stroke-width="1.600"/></svg>
<span class="t fs" style="left:2641px;top:2095.96px;font-size:15.5px;line-height:15.5px;color:#fff;transform:scaleX(0.9133);">analyze.xlsx - Excel</span>
<div style="left:2805px;top:2117.3px;width:182px;height:3px;background:#cfc9c6;"></div>
<span class="t fs" style="left:2833.9px;top:2095.96px;font-size:15.5px;line-height:15.5px;color:#fff;transform:scaleX(0.9644);">Calculator</span>
<div style="left:2997px;top:2117.3px;width:182px;height:3px;background:#cfc9c6;"></div>
<span class="t fs" style="left:3025.7px;top:2095.96px;font-size:15.5px;line-height:15.5px;color:#fff;transform:scaleX(0.9616);">Calculator</span>
<div style="left:3185.2px;top:2083px;width:191.6px;height:37.3px;background:#5a4b46;"></div>
<div style="left:3185.2px;top:2117.3px;width:191.6px;height:3px;background:#cfc9c6;"></div>
<svg style="left:3194px;top:2091.9px;" width="20" height="20" viewBox="0 0 20 20"><path d="M14.500 0L20 2.500v15L14.500 20 5.500 11.500 2 14 0 13V7l2-1 3.500 2.500zM14.500 5.500L9 10l5.500 4.500zM2 8.200v3.600L4 10z" fill="#8a4cd6"/></svg>
<span class="t fs" style="left:3219px;top:2095.96px;font-size:15.5px;line-height:15.5px;color:#fff;transform:scaleX(0.9606);">arri2hde - Microsoft ...</span>
<div style="left:684px;top:2157px;width:190px;height:3px;background:#cfc9c6;"></div>
<div style="left:885.2px;top:2157px;width:189.6px;height:3px;background:#cfc9c6;"></div>
<svg style="left:689px;top:2131.7px;" width="19" height="19" viewBox="0 0 19 19"><rect width="19" height="19" fill="#1a2a6a"/><rect x="2" y="2" width="6" height="12" fill="#3a8ae8"/><rect x="11" y="2" width="6" height="12" fill="#3a8ae8"/><path d="M2 5h6M2 8h6M2 11h6M11 5h6M11 8h6M11 11h6" stroke="#1a2a6a"/><path d="M1 17h17" stroke="#e8d020" stroke-width="1.600"/></svg>
<span class="t fs" style="left:713px;top:2134.76px;font-size:15.5px;line-height:15.5px;color:#fff;transform:scaleX(0.9423);">{M:\Tickets\!dell.0180...</span>
<svg style="left:890px;top:2132.2px;" width="21" height="19" viewBox="0 0 21 19"><path d="M4 1h16l-3.500 13H.5z" fill="#2b7bc4"/><path d="M.5 14h16l-.6 3H0z" fill="#9ac0e0"/><path d="M5.500 4l5 3.500-6 4" stroke="#fff" stroke-width="1.700" fill="none"/><path d="M9.500 11.800h4.500" stroke="#fff" stroke-width="1.500"/></svg>
<span class="t fs" style="left:914px;top:2134.76px;font-size:15.5px;line-height:15.5px;color:#fff;transform:scaleX(0.9632);">Administrator: Windo...</span>
<svg style="left:3385.8px;top:2092.7px;" width="20" height="18" viewBox="0 0 20 18"><path d="M1 1h18v13l-2 3-2-2-2 2-2-2-2 2-2-2-2 2-2-3z" fill="#2a7ad8"/><path d="M4 4h12M4 7h12M4 10h12" stroke="#6ab0f0"/></svg>
<svg style="left:3415.73px;top:2092.7px;" width="20" height="18" viewBox="0 0 20 18"><path d="M5 0l5 3-5 3-5-3zM15 0l5 3-5 3-5-3zM5 6l5 3-5 3-5-3zM15 6l5 3-5 3-5-3zM10 10.500l5 3-5 3-5-3z" fill="#fff"/></svg>
<svg style="left:3445.16px;top:2091.2px;" width="21" height="21" viewBox="0 0 21 21"><circle cx="10.500" cy="10.500" r="10.500" fill="#8a8a3a"/><circle cx="10.500" cy="10.500" r="8" fill="#6a8a3a"/><path d="M6 11l3 3 6-6" stroke="#fff" stroke-width="2.400" fill="none"/><circle cx="16" cy="16" r="3.500" fill="#e84a2a"/></svg>
<svg style="left:3475.09px;top:2092.7px;" width="21" height="18" viewBox="0 0 21 18"><path d="M4 3.500c4-1.500 9-1.500 13 0 2 3 3 7 3 10-2 1.500-3.500 2-5 2.500l-1-2c-2 .600-4 .600-6 0l-1 2c-1.500-.500-3-1-5-2.500 0-3 1-7 2-10z" fill="#e8e8f4"/><ellipse cx="7.500" cy="10" rx="1.600" ry="1.900" fill="#3a2721"/><ellipse cx="13.500" cy="10" rx="1.600" ry="1.900" fill="#3a2721"/><circle cx="17.500" cy="3" r="3.200" fill="#e84a2a"/></svg>
<svg style="left:3505.52px;top:2091.7px;" width="20" height="20" viewBox="0 0 20 20"><circle cx="10" cy="10" r="9.500" fill="#c8d8e0"/><path d="M3 6c3 1 5 4 4 7M8 2c4 2 7 1 9 4-1 3-4 3-5 6" fill="none" stroke="#4a8a4a" stroke-width="2.200"/><path d="M13 9a6 6 0 0 1-3 9" fill="none" stroke="#2a6ad8" stroke-width="2.400"/></svg>
<svg style="left:3535.45px;top:2091.7px;" width="20" height="20" viewBox="0 0 20 20"><rect width="20" height="20" fill="#1a1a1a"/><path d="M3 10c3-5 10-6 14-2-3 6-10 7-14 2z" fill="none" stroke="#76b900" stroke-width="1.600"/><path d="M7 10c2-2 5-2 7 0-2 2-5 2-7 0z" fill="#76b900"/></svg>
<svg style="left:3568.38px;top:2090.7px;" width="14" height="22" viewBox="0 0 14 22"><rect x="3.500" y="0" width="7" height="13" rx="3.500" fill="#fff"/><path d="M.7 9c0 8 12.600 8 12.600 0M7 15v4M3 20.500h8" fill="none" stroke="#fff" stroke-width="1.400"/></svg>
<svg style="left:3595.31px;top:2091.7px;" width="20" height="20" viewBox="0 0 20 20"><rect width="20" height="20" rx="6" fill="#fff"/><rect x="1.500" y="1.500" width="17" height="17" rx="5" fill="#1ab8b8"/><path d="M6 10.500h8c0-5-8-5-8 0 0 5 6 5 8 2.500" fill="none" stroke="#fff" stroke-width="2.200"/></svg>
<svg style="left:3385.8px;top:2129.7px;" width="20" height="20" viewBox="0 0 20 20"><path d="M10 .500c3 2 6 2.500 9 2.500 0 8-3 13-9 16.500C4 16 1 11 1 3c3 0 6-.500 9-2.500z" fill="#fff"/><path d="M10 .500v19M1 9h18" stroke="#3a2721" stroke-width="1.200"/><path d="M14.500 11l5.500 9H9z" fill="#f0b020"/><path d="M14.500 14v3" stroke="#222" stroke-width="1.200"/></svg>
<svg style="left:3415.73px;top:2130.7px;" width="20" height="18" viewBox="0 0 20 18"><rect x="6" y="0" width="14" height="18" rx="1.500" fill="#28a8ea"/><rect x="6" y="9" width="14" height="9" fill="#0364b8"/><rect x="0" y="3.500" width="11" height="11" rx="1" fill="#0a5cbd"/><circle cx="5.500" cy="9" r="2.800" fill="none" stroke="#fff" stroke-width="1.600"/></svg>
<svg style="left:3446.16px;top:2132.7px;" width="19" height="14" viewBox="0 0 19 14"><rect width="19" height="14" fill="#e8c070"/><path d="M0 0l9.500 8L19 0" fill="none" stroke="#b88a30" stroke-width="1.400"/></svg>
<svg style="left:3478.59px;top:2128.7px;" width="15" height="22" viewBox="0 0 15 22"><rect x="3" y="0" width="7" height="5" fill="none" stroke="#e8e8e8" stroke-width="1.200"/><rect x="1" y="5" width="11" height="14" rx="1.500" fill="none" stroke="#e8e8e8" stroke-width="1.200"/><path d="M9 21l3 0 2-4" fill="none" stroke="#e8e8e8" stroke-width="1.200"/></svg>
<svg style="left:3505.02px;top:2130.7px;" width="21" height="18" viewBox="0 0 21 18"><rect x="4" y="2" width="16" height="11" fill="none" stroke="#fff" stroke-width="1.300"/><path d="M8 17h8M12 13v4" stroke="#fff" stroke-width="1.300"/><rect x="0" y="0" width="5" height="4" fill="#3a2721" stroke="#fff" stroke-width="1.100"/></svg>
<svg style="left:3534.95px;top:2130.7px;" width="22" height="18" viewBox="0 0 22 18"><path d="M1 6h4l5-4.500v15L5 12H1z" fill="none" stroke="#fff" stroke-width="1.300"/><path d="M13 5.500c1.500 2 1.500 5 0 7M16 3c2.500 3.500 2.500 8.500 0 12M19 1c3.500 5 3.500 11 0 16" fill="none" stroke="#fff" stroke-width="1.300"/></svg>
<svg style="left:3565.38px;top:2130.2px;" width="20" height="19" viewBox="0 0 20 19"><path d="M0 6L14 0l6 3v4L6 13z" fill="#e86a2a"/><path d="M0 9l6 7 14-6v3L6 19l-6-7z" fill="#f4f0e8"/><path d="M0 12l6 7 14-6" fill="none" stroke="#c8a070" stroke-width="1.200"/></svg>
<svg style="left:3595.31px;top:2129.7px;" width="20" height="20" viewBox="0 0 20 20"><path d="M6 2v5M2 9h5M14 12v5M18 9h-5M9 2l1 5M3 12l5-1" stroke="#fff" stroke-width="2.400" stroke-linecap="round"/><circle cx="14.500" cy="13.500" r="5" fill="#e84a5a"/><circle cx="14.500" cy="13.500" r="2" fill="#fff" opacity=".7"/></svg>
<span class="t fs" style="left:3629.5px;top:2113.96px;font-size:15.5px;line-height:15.5px;color:#fff;transform:scaleX(0.8425);">ENG</span>
<span class="t fs" style="left:3702.2px;top:2090.56px;font-size:15.5px;line-height:15.5px;color:#fff;transform:scaleX(0.9023);">11:02</span>
<span class="t fs" style="left:3691.2px;top:2114.76px;font-size:15.5px;line-height:15.5px;color:#fff;transform:scaleX(1.0075);">вторник</span>
<span class="t fs" style="left:3684.7px;top:2138.26px;font-size:15.5px;line-height:15.5px;color:#fff;transform:scaleX(0.9023);">02.08.2022</span>
<svg style="left:3789px;top:2111px;" width="21" height="20" viewBox="0 0 21 20"><path d="M.5.500h20v14.500H14l-3.500 4-3.500-4H.5z" fill="#fff"/><path d="M4 4.500h13M4 7.500h13M4 10.500h9" stroke="#3a2721" stroke-width="1.200"/></svg>
<div style="left:3834.5px;top:2083px;width:1px;height:77px;background:#8a7a74;"></div>
</body></html>
